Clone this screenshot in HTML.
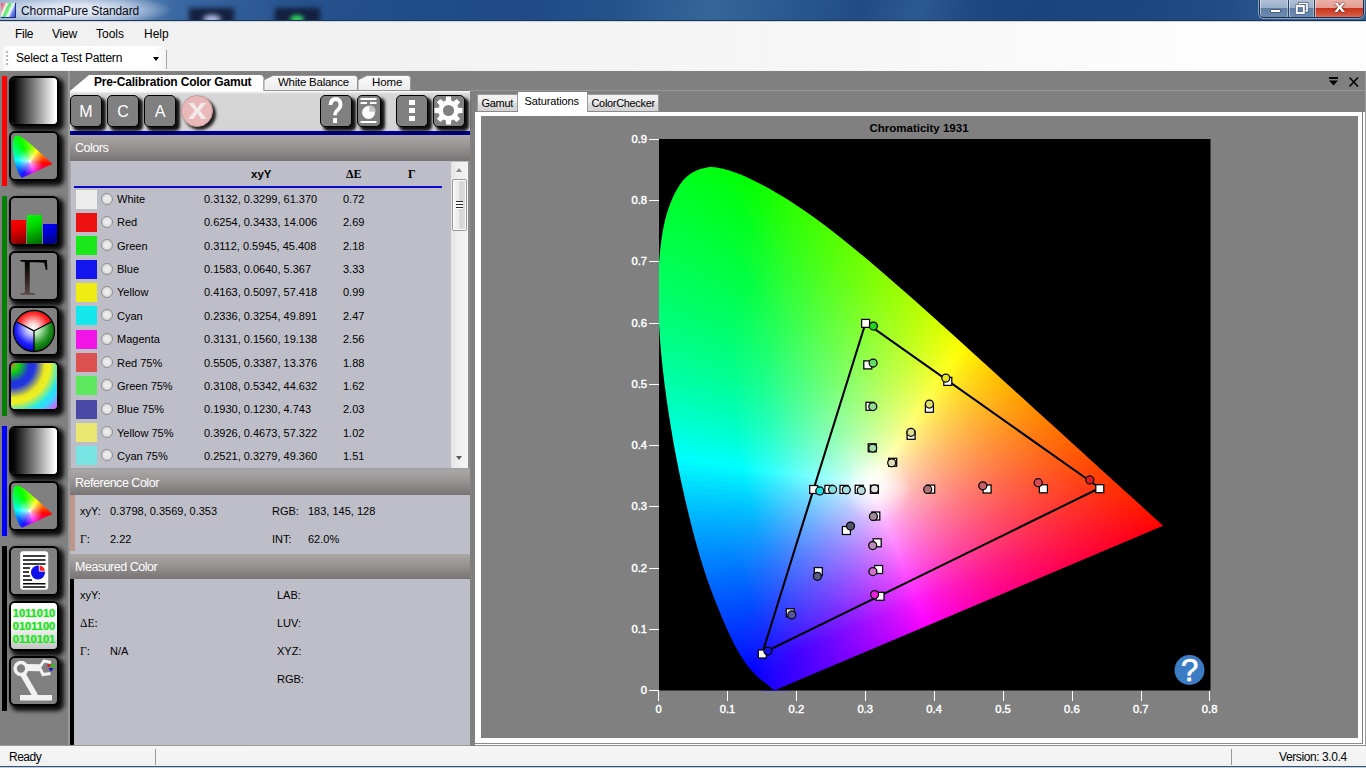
<!DOCTYPE html>
<html lang="en"><head><meta charset="utf-8"><title>ChormaPure Standard</title>
<style>
*{box-sizing:border-box}
html,body{margin:0;padding:0}
body{width:1366px;height:768px;overflow:hidden;position:relative;background:#808080;font-family:"Liberation Sans",sans-serif;font-size:11px;color:#000;line-height:1}
.a{position:absolute}
.t{position:absolute;white-space:nowrap;line-height:14px;height:14px}
.sb{position:absolute;left:9px;width:50px;height:50px;border:2px solid #000;border-radius:6px;background:#808080;box-shadow:3.5px 3.5px 4px 1px rgba(0,0,0,.9);overflow:hidden}
.tb{position:absolute;top:95px;width:32px;height:32px;border:1.5px solid #000;border-radius:5px;background:#808080;box-shadow:3.5px 3.5px 3px rgba(0,0,0,.92);color:#fff;font-size:16px;text-align:center;line-height:31px}
.hd{position:absolute;left:70px;width:400px;height:25px;background:linear-gradient(#aba7a6,#979392 45%,#807c7c 85%,#787474);color:#fff;font-size:12.5px;line-height:25px;padding-left:5px;letter-spacing:-.48px}
.row{position:absolute;left:70px;width:380px;height:23px}
.sw{position:absolute;left:6px;top:0;width:21px;height:19px}
.rd{position:absolute;left:31px;top:3px;width:12px;height:12px;border-radius:50%;border:1px solid #8e8f8f;background:radial-gradient(circle at 50% 50%,#f4f4f4 0,#e4e4e4 45%,#c9c9c9 100%)}
.rt{position:absolute;top:2px;white-space:nowrap;font-size:11px;line-height:14px}
.lb{position:absolute;white-space:nowrap;font-size:11px;line-height:14px}
</style></head><body>

<div class="a" style="left:0;top:0;width:1366px;height:20px;overflow:hidden;background:
radial-gradient(ellipse 100px 17px at 72px 10px,rgba(228,234,245,.95) 30%,rgba(200,214,234,.6) 70%,rgba(160,185,215,0) 100%),
linear-gradient(100deg,#8fa9cb 0,#6d8fbc 120px,#3a68a2 175px,#25528c 300px,#1f4d88 420px,#1e4b86 520px,#24538c 610px,#356799 700px,#2a5a90 770px,#1f4c84 850px,#2b5a90 905px,#1c4780 965px,#1a457c 1020px,#1c477e 1120px,#214d84 1210px,#2c5c90 1270px,#2c5c90 1366px)">
<div class="a" style="left:189px;top:8px;width:45px;height:16px;background:#14203f;filter:blur(2.5px)"></div>
<div class="a" style="left:275px;top:8px;width:45px;height:16px;background:#14203f;filter:blur(2.5px)"></div>
<div class="a" style="left:203px;top:15px;width:18px;height:8px;border-radius:50%;background:#b8c4ee;filter:blur(2.5px)"></div>
<div class="a" style="left:290px;top:15px;width:14px;height:8px;border-radius:50%;background:#30d060;filter:blur(2px)"></div>
</div>
<div class="a" style="left:0;top:20px;width:1366px;height:1px;background:#22344e"></div>
<div class="a" style="left:0;top:21px;width:1366px;height:1px;background:#c9d6e6"></div>
<div class="a" style="left:1px;top:3px;width:15px;height:15px;background:linear-gradient(115deg,#e05060 0,#f0a0a8 22%,#fff 30%,#60e070 42%,#80f090 52%,#fff 64%,#8090f0 76%,#3040d0 100%);border-right:1px solid #203080;border-bottom:1px solid #203080"></div>
<div class="t" style="left:21px;top:4px;font-size:12px;color:#0a0a14;letter-spacing:-.1px">ChormaPure Standard</div>

<div class="a" style="left:1259px;top:-3px;width:105px;height:21px;border:1px solid #1b2d4c;border-radius:0 0 5px 5px;overflow:hidden;box-shadow:0 0 0 1px rgba(255,255,255,.45)">
<div class="a" style="left:0;top:0;width:29px;height:20px;background:linear-gradient(#b4c3d8 0,#9db0ca 48%,#5f7fa6 52%,#6c8cb2 100%);border-right:1px solid #27405f;box-shadow:inset 1px 0 rgba(255,255,255,.5),inset -1px -1px rgba(255,255,255,.35)"></div>
<div class="a" style="left:29px;top:0;width:26px;height:20px;background:linear-gradient(#b4c3d8 0,#9db0ca 48%,#5f7fa6 52%,#6c8cb2 100%);border-right:1px solid #27405f;box-shadow:inset 1px 0 rgba(255,255,255,.5),inset -1px -1px rgba(255,255,255,.35)"></div>
<div class="a" style="left:55px;top:0;width:50px;height:20px;background:linear-gradient(#edb5ac 0,#e39d92 48%,#c7351d 52%,#d4553f 85%,#e08070 100%);box-shadow:inset 1px 0 rgba(255,255,255,.5),inset -1px -1px rgba(255,255,255,.35)"></div>
<div class="a" style="left:10px;top:11px;width:11px;height:4px;background:#fff;border:1px solid #4a5c78;border-radius:1px"></div>
<svg class="a" style="left:35px;top:4px" width="14" height="13" viewBox="0 0 14 13"><path d="M4.500 4V1.500h7.500v7.500h-2.500" fill="none" stroke="#3c5070" stroke-width="2.800"/><path d="M4.500 4V1.500h7.500v7.500h-2.500" fill="none" stroke="#fff" stroke-width="1.700"/><rect x="1.8" y="4" width="7" height="7" fill="none" stroke="#445a7c" stroke-width="3"/><rect x="1.8" y="4" width="7" height="7" fill="none" stroke="#fff" stroke-width="1.9"/></svg>
<div class="t" style="left:75px;top:2px;font-size:17px;font-weight:bold;color:#fff;line-height:14px;text-shadow:0 0 2px #5a2018,0 0 1px #5a2018;transform:scaleX(1.15)">x</div>
</div>

<div class="a" style="left:0;top:22px;width:1366px;height:49px;background:linear-gradient(90deg,#f0f0f0 0,#f2f2f2 400px,#f7f7f7 900px,#fdfdfd 1200px,#fdfdfd 100%)"></div>
<div class="t" style="left:15px;top:27px;font-size:12px;letter-spacing:-.3px">File</div>
<div class="t" style="left:52px;top:27px;font-size:12px;letter-spacing:-.2px">View</div>
<div class="t" style="left:96px;top:27px;font-size:12px">Tools</div>
<div class="t" style="left:144px;top:27px;font-size:12px">Help</div>
<div class="a" style="left:3px;top:46px;width:163px;height:24px;border-radius:3px;background:linear-gradient(90deg,#f8f8f8 0,#fff 10px,#fff 150px,#f4f4f4 100%)"></div>
<div class="a" style="left:6px;top:51px;width:2px;height:14px;background:repeating-linear-gradient(#b8b8b8 0,#b8b8b8 2px,transparent 2px,transparent 4px)"></div>
<div class="t" style="left:16px;top:51px;font-size:12px;letter-spacing:-.21px">Select a Test Pattern</div>
<div class="a" style="left:153px;top:57px;width:0;height:0;border-left:3.5px solid transparent;border-right:3.5px solid transparent;border-top:4px solid #000"></div>
<div class="a" style="left:166px;top:50px;width:1px;height:19px;background:#a8a8a8"></div>

<div class="a" style="left:68px;top:71px;width:2px;height:675px;background:#9a9a9a"></div>
<div class="a" style="left:2px;top:76px;width:5px;height:110px;background:#ff0000"></div>
<div class="a" style="left:2px;top:196px;width:5px;height:220px;background:#008000"></div>
<div class="a" style="left:2px;top:426px;width:5px;height:110px;background:#0000ff"></div>
<div class="a" style="left:2px;top:546px;width:5px;height:165px;background:#000000"></div>
<div class="sb" style="top:76px"><div class="a" style="left:0;top:0;width:46px;height:46px;background:linear-gradient(90deg,#000 0,#0a0a0a 8%,#fff 96%,#fff 100%)"></div></div>
<div class="sb" style="top:131px"><div class="a" style="left:0;top:0;width:46px;height:46px;clip-path:polygon(11.1px 44.7px,9.8px 43.8px,8.3px 42.0px,7.5px 40.5px,6.5px 38.2px,5.3px 34.8px,4.0px 30.0px,2.8px 24.0px,1.9px 17.6px,1.7px 11.7px,2.3px 6.8px,3.6px 3.7px,5.6px 2.6px,7.8px 3.0px,10.0px 4.0px,12.1px 5.3px,14.1px 6.6px,16.1px 8.2px,18.1px 9.8px,20.1px 11.5px,22.1px 13.2px,24.0px 15.0px,26.0px 16.8px,27.9px 18.5px,29.7px 20.2px,31.5px 21.9px,33.2px 23.4px,34.7px 24.8px,36.1px 26.0px,37.2px 27.1px,38.2px 28.0px,39.6px 29.3px,40.5px 30.1px,41.5px 31.0px);background:radial-gradient(circle at 18.7px 28.2px,#fff 0,rgba(255,255,255,.6) 3px,rgba(255,255,255,0) 13px),conic-gradient(from 35deg at 18.7px 28.2px,#ffff00 0deg,#ff8000 30deg,#ff0000 63deg,#ff0080 94deg,#ff00ff 124deg,#8000ff 148deg,#1818ff 172deg,#0080ff 206deg,#00ffff 240deg,#00ff80 270deg,#00ff00 299deg,#80ff00 330deg,#ffff00 360deg)"></div></div>
<div class="sb" style="top:196px"><div class="a" style="left:0px;top:22px;width:15px;height:25px;background:linear-gradient(160deg,#ff0000 0,#e00000 40%,#700000 100%)"></div>
<div class="a" style="left:16px;top:17px;width:15px;height:30px;background:linear-gradient(160deg,#00ff00 0,#00d000 40%,#006000 100%)"></div>
<div class="a" style="left:32px;top:26px;width:15px;height:21px;background:linear-gradient(160deg,#0000ff 0,#0000d0 40%,#000070 100%)"></div></div>
<div class="sb" style="top:251px"><div class="a" style="left:0;top:-1px;width:46px;text-align:center;font-family:'Liberation Serif',serif;font-size:52px;line-height:52px;color:#2a1c1c;background:linear-gradient(#000 20%,#3a2a2a 60%,#6a5555 90%);-webkit-background-clip:text;background-clip:text;-webkit-text-fill-color:transparent">&Gamma;</div></div>
<div class="sb" style="top:306px"><svg class="a" style="left:0;top:0" width="46" height="46" viewBox="0 0 46 46"><defs><radialGradient id="pr" gradientUnits="userSpaceOnUse" cx="22" cy="20" r="22"><stop offset="0" stop-color="#fff"/><stop offset=".25" stop-color="#ffd0d0"/><stop offset=".7" stop-color="#ff2020"/><stop offset="1" stop-color="#e00000"/></radialGradient><radialGradient id="pg" gradientUnits="userSpaceOnUse" cx="22" cy="20" r="24"><stop offset="0" stop-color="#fff"/><stop offset=".25" stop-color="#c8f0c8"/><stop offset=".7" stop-color="#209020"/><stop offset="1" stop-color="#006000"/></radialGradient><radialGradient id="pb" gradientUnits="userSpaceOnUse" cx="22" cy="20" r="24"><stop offset="0" stop-color="#fff"/><stop offset=".25" stop-color="#d0d0ff"/><stop offset=".7" stop-color="#2020ff"/><stop offset="1" stop-color="#0000c0"/></radialGradient></defs>
<path d="M23 23L5.2 13.5A20.5 20.5 0 0 1 40.8 13.5Z" fill="url(#pr)"/><path d="M23 23L40.8 13.5A20.5 20.5 0 0 1 23 43.5Z" fill="url(#pg)"/><path d="M23 23L23 43.5A20.5 20.5 0 0 1 5.2 13.5Z" fill="url(#pb)"/><circle cx="23" cy="23" r="20.5" fill="none" stroke="#000" stroke-width="1.3"/><path d="M23 43.5V23L5.2 13.5M23 23L40.8 13.5" fill="none" stroke="#000" stroke-width="1.3"/></svg></div>
<div class="sb" style="top:361px"><div class="a" style="left:0;top:0;width:46px;height:46px;background:radial-gradient(circle at 2% 4%,#d06020 0,#60c020 5%,#10d010 12%,#2030e0 28%,#2038e0 36%,#e8e820 52%,#f0f020 60%,#20e8f0 76%,#40d0ff 84%,#ff40ff 100%)"></div></div>
<div class="sb" style="top:426px"><div class="a" style="left:0;top:0;width:46px;height:46px;background:linear-gradient(90deg,#000 0,#0a0a0a 8%,#fff 96%,#fff 100%)"></div></div>
<div class="sb" style="top:481px"><div class="a" style="left:0;top:0;width:46px;height:46px;clip-path:polygon(11.1px 44.7px,9.8px 43.8px,8.3px 42.0px,7.5px 40.5px,6.5px 38.2px,5.3px 34.8px,4.0px 30.0px,2.8px 24.0px,1.9px 17.6px,1.7px 11.7px,2.3px 6.8px,3.6px 3.7px,5.6px 2.6px,7.8px 3.0px,10.0px 4.0px,12.1px 5.3px,14.1px 6.6px,16.1px 8.2px,18.1px 9.8px,20.1px 11.5px,22.1px 13.2px,24.0px 15.0px,26.0px 16.8px,27.9px 18.5px,29.7px 20.2px,31.5px 21.9px,33.2px 23.4px,34.7px 24.8px,36.1px 26.0px,37.2px 27.1px,38.2px 28.0px,39.6px 29.3px,40.5px 30.1px,41.5px 31.0px);background:radial-gradient(circle at 18.7px 28.2px,#fff 0,rgba(255,255,255,.6) 3px,rgba(255,255,255,0) 13px),conic-gradient(from 35deg at 18.7px 28.2px,#ffff00 0deg,#ff8000 30deg,#ff0000 63deg,#ff0080 94deg,#ff00ff 124deg,#8000ff 148deg,#1818ff 172deg,#0080ff 206deg,#00ffff 240deg,#00ff80 270deg,#00ff00 299deg,#80ff00 330deg,#ffff00 360deg)"></div></div>
<div class="sb" style="top:546px"><svg class="a" style="left:0;top:0" width="46" height="46" viewBox="0 0 46 46"><rect x="9.2" y="3.2" width="28" height="38.5" rx="3" fill="#fff"/><g stroke="#000" stroke-width="1.7"><path d="M12 8h22.500M12 12h22.500M12 16h22.500M12 20h7M12 24h6M12 28h7M12 32h9M12 35.800h22.500M12 39h22.500" stroke-width="1.500"/></g><circle cx="27" cy="24.500" r="7" fill="#1010e8"/><path d="M27 24.500V18.500A6 6 0 0 1 33 24.500Z" fill="#ff2020" stroke="#fff" stroke-width=".8" transform="translate(1.3,-1.3)"/></svg></div>
<div class="sb" style="top:601px"><div class="a" style="left:0;top:0;width:46px;height:46px;background:linear-gradient(#fff,#f2f2f2 55%,#c4c4c4)"></div><div class="a" style="left:0;top:4px;width:46px;text-align:center;font-size:11.3px;line-height:13px;font-weight:bold;color:#22e022;letter-spacing:-.15px;text-shadow:0 0 1px #6f6">1011010<br>0101100<br>0110101</div></div>
<div class="sb" style="top:656px"><svg class="a" style="left:0;top:0" width="46" height="46" viewBox="0 0 46 46"><g fill="none" stroke="#f2f2f2"><circle cx="10" cy="10.500" r="5.900" stroke-width="3.500"/><path d="M15.500 9.500L29 9.800" stroke-width="7"/><path d="M12 16.500L24.500 38" stroke-width="5.500"/><path d="M40 4.500L33 3L28.500 9.500L32 16.500L39.500 15.500" stroke-width="3" stroke-linejoin="miter"/></g><rect x="9" y="37" width="32" height="5.5" fill="#f2f2f2"/><rect x="36.500" y="6" width="3" height="3" fill="#e02020"/><rect x="40" y="6" width="3.500" height="3.500" fill="#20c020"/><path d="M37.500 10h5l-2.500 3.500z" fill="#1010d0"/></svg></div>
<div class="a" style="left:70px;top:71px;width:400px;height:20px;background:#808080"></div>
<svg class="a" style="left:70px;top:74px" width="345" height="17" viewBox="0 0 345 17"><defs><linearGradient id="tg" x1="0" y1="0" x2="0" y2="1"><stop offset="0" stop-color="#fbfbfb"/><stop offset="1" stop-color="#ececec"/></linearGradient></defs>
<path d="M0 17L19 1H190Q193.500 1 193.500 4.500V17Z" fill="#fff"/>
<path d="M194 16.500V6L203 1.500H284.500Q287.500 1.500 287.500 4.500V16.500Z" fill="url(#tg)" stroke="#8c8c8c" stroke-width=".8"/>
<path d="M288 16.500V6L297 1.500H337.500Q340.500 1.500 340.500 4.500V16.500Z" fill="url(#tg)" stroke="#8c8c8c" stroke-width=".8"/></svg>
<div class="t" style="left:94px;top:75px;font-size:12px;font-weight:bold;letter-spacing:-.17px">Pre-Calibration Color Gamut</div>
<div class="t" style="left:278px;top:75px;font-size:11.5px;letter-spacing:-.25px">White Balance</div>
<div class="t" style="left:372px;top:75px;font-size:11.5px;letter-spacing:-.1px">Home</div>
<div class="a" style="left:70px;top:91px;width:400px;height:40px;background:linear-gradient(#fff 0,#d6d6d6 3px,#d4d4d4 100%)"></div>
<div class="a" style="left:70px;top:130px;width:400px;height:1px;background:#c8c8f0"></div>
<div class="a" style="left:70px;top:131px;width:400px;height:4px;background:#000080"></div>

<div class="tb" style="left:70px">M</div><div class="tb" style="left:107px">C</div><div class="tb" style="left:144px">A</div>
<div class="a" style="left:181px;top:95px;width:32px;height:32px;border-radius:50%;background:#e9b9b9;border:1px solid #c49a9a;box-shadow:3px 3px 3px rgba(0,0,0,.85);color:#f3e9e9;font-weight:bold;font-size:30px;line-height:25px;text-align:center"><span style="display:inline-block;transform:scaleX(1.12)">x</span></div>
<div class="tb" style="left:320px"><div class="a" style="left:0;top:0;width:29px;height:29px;font-size:37px;line-height:29px;font-weight:bold;transform:scaleX(.74)">?</div></div>
<div class="tb" style="left:357px;width:24px"><svg class="a" style="left:0;top:0" width="21" height="29" viewBox="0 0 21 29"><g stroke="#fff" stroke-width="2"><path d="M2.500 3h16M2.500 7h6.500M12 7h6.500M2.500 26h16"/></g><circle cx="10.500" cy="16.500" r="6.500" fill="#fff"/><path d="M11.300 15.700V9.200A6.500 6.500 0 0 1 17.800 15.700Z" fill="#c4c4c4"/></svg></div>
<div class="tb" style="left:396px"><div class="a" style="left:12px;top:4px;width:6px;height:5px;background:#fff"></div><div class="a" style="left:12px;top:12px;width:6px;height:5px;background:#fff"></div><div class="a" style="left:12px;top:20px;width:6px;height:5px;background:#fff"></div></div>
<div class="tb" style="left:433px"><svg class="a" style="left:0;top:0" width="29" height="29" viewBox="0 0 29 29"><path d="M12.10 0.50L16.90 0.50L17.32 4.70L19.44 5.58L22.70 2.91L26.09 6.30L23.42 9.56L24.30 11.68L28.50 12.10L28.50 16.90L24.30 17.32L23.42 19.44L26.09 22.70L22.70 26.09L19.44 23.42L17.32 24.30L16.90 28.50L12.10 28.50L11.68 24.30L9.56 23.42L6.30 26.09L2.91 22.70L5.58 19.44L4.70 17.32L0.50 16.90L0.50 12.10L4.70 11.68L5.58 9.56L2.91 6.30L6.30 2.91L9.56 5.58L11.68 4.70Z" fill="#fff"/><circle cx="14.500" cy="14.500" r="5.600" fill="#808080"/></svg></div>
<div class="hd" style="top:135px;height:26px;line-height:27px">Colors</div>
<div class="a" style="left:70px;top:161px;width:400px;height:308px;background:#bebec8;border-left:1px solid #a6a6ac;border-right:1px solid #8c8c8c"></div>
<div class="a" style="left:74px;top:186px;width:368px;height:2px;background:#0a0acd"></div>
<div class="t" style="left:251px;top:167px;font-family:'Liberation Sans',sans-serif;font-weight:bold;font-size:11.500px">xyY</div>
<div class="t" style="left:346px;top:167px;font-family:'Liberation Serif',serif;font-weight:bold;font-size:12px">&Delta;E</div>
<div class="t" style="left:408px;top:167px;font-family:'Liberation Serif',serif;font-weight:bold;font-size:12px">&Gamma;</div>
<div class="row" style="top:189.7px"><div class="sw" style="background:#ececec"></div><div class="rd"></div><div class="rt" style="left:47px;top:2.00px">White</div><div class="rt" style="left:134px;top:2.00px">0.3132, 0.3299, 61.370</div><div class="rt" style="left:273px;top:2.00px">0.72</div></div>
<div class="row" style="top:213.0px"><div class="sw" style="background:#ee1111"></div><div class="rd"></div><div class="rt" style="left:47px;top:2.08px">Red</div><div class="rt" style="left:134px;top:2.08px">0.6254, 0.3433, 14.006</div><div class="rt" style="left:273px;top:2.08px">2.69</div></div>
<div class="row" style="top:236.4px"><div class="sw" style="background:#1ae81a"></div><div class="rd"></div><div class="rt" style="left:47px;top:2.16px">Green</div><div class="rt" style="left:134px;top:2.16px">0.3112, 0.5945, 45.408</div><div class="rt" style="left:273px;top:2.16px">2.18</div></div>
<div class="row" style="top:259.7px"><div class="sw" style="background:#1414ee"></div><div class="rd"></div><div class="rt" style="left:47px;top:2.24px">Blue</div><div class="rt" style="left:134px;top:2.24px">0.1583, 0.0640, 5.367</div><div class="rt" style="left:273px;top:2.24px">3.33</div></div>
<div class="row" style="top:283.0px"><div class="sw" style="background:#eded14"></div><div class="rd"></div><div class="rt" style="left:47px;top:2.32px">Yellow</div><div class="rt" style="left:134px;top:2.32px">0.4163, 0.5097, 57.418</div><div class="rt" style="left:273px;top:2.32px">0.99</div></div>
<div class="row" style="top:306.3px"><div class="sw" style="background:#14e8ec"></div><div class="rd"></div><div class="rt" style="left:47px;top:2.40px">Cyan</div><div class="rt" style="left:134px;top:2.40px">0.2336, 0.3254, 49.891</div><div class="rt" style="left:273px;top:2.40px">2.47</div></div>
<div class="row" style="top:329.7px"><div class="sw" style="background:#f014e6"></div><div class="rd"></div><div class="rt" style="left:47px;top:2.48px">Magenta</div><div class="rt" style="left:134px;top:2.48px">0.3131, 0.1560, 19.138</div><div class="rt" style="left:273px;top:2.48px">2.56</div></div>
<div class="row" style="top:353.0px"><div class="sw" style="background:#dc5050"></div><div class="rd"></div><div class="rt" style="left:47px;top:2.56px">Red 75%</div><div class="rt" style="left:134px;top:2.56px">0.5505, 0.3387, 13.376</div><div class="rt" style="left:273px;top:2.56px">1.88</div></div>
<div class="row" style="top:376.3px"><div class="sw" style="background:#5ee85e"></div><div class="rd"></div><div class="rt" style="left:47px;top:2.64px">Green 75%</div><div class="rt" style="left:134px;top:2.64px">0.3108, 0.5342, 44.632</div><div class="rt" style="left:273px;top:2.64px">1.62</div></div>
<div class="row" style="top:399.7px"><div class="sw" style="background:#4a4aa6"></div><div class="rd"></div><div class="rt" style="left:47px;top:2.72px">Blue 75%</div><div class="rt" style="left:134px;top:2.72px">0.1930, 0.1230, 4.743</div><div class="rt" style="left:273px;top:2.72px">2.03</div></div>
<div class="row" style="top:423.0px"><div class="sw" style="background:#eae870"></div><div class="rd"></div><div class="rt" style="left:47px;top:2.80px">Yellow 75%</div><div class="rt" style="left:134px;top:2.80px">0.3926, 0.4673, 57.322</div><div class="rt" style="left:273px;top:2.80px">1.02</div></div>
<div class="row" style="top:446.3px"><div class="sw" style="background:#78e4e4"></div><div class="rd"></div><div class="rt" style="left:47px;top:2.88px">Cyan 75%</div><div class="rt" style="left:134px;top:2.88px">0.2521, 0.3279, 49.360</div><div class="rt" style="left:273px;top:2.88px">1.51</div></div>
<div class="a" style="left:451px;top:162px;width:18px;height:306px;border-right:1px solid #8c8c8c;background:linear-gradient(90deg,#e3e3e3 0,#efefef 40%,#f4f4f4 100%)"></div>
<div class="a" style="left:452px;top:179px;width:14.5px;height:52px;border:1px solid #979797;border-radius:2px;background:linear-gradient(90deg,#f4f4f4 0,#ebebeb 45%,#d4d4d4 55%,#dedede 100%);box-shadow:inset 0 0 0 1px #fff"></div>
<div class="a" style="left:456px;top:201px;width:7px;height:8px;background:repeating-linear-gradient(#2a2a2a 0,#2a2a2a 1.4px,#fff 1.4px,#fff 3px)"></div>
<div class="a" style="left:456px;top:168px;width:0;height:0;border-left:3.5px solid transparent;border-right:3.5px solid transparent;border-bottom:4px solid #8a8a8a"></div>
<div class="a" style="left:456px;top:456px;width:0;height:0;border-left:3.5px solid transparent;border-right:3.5px solid transparent;border-top:4px solid #5a5a5a"></div>

<div class="a" style="left:70px;top:468px;width:400px;height:2px;background:#a2a2a6"></div>
<div class="hd" style="top:470px;line-height:27px">Reference Color</div>
<div class="a" style="left:70px;top:495px;width:400px;height:59px;background:#bebec8"></div>
<div class="a" style="left:70px;top:495px;width:5px;height:56px;background:#bf978a"></div>
<div class="hd" style="top:554px;line-height:27px">Measured Color</div>
<div class="a" style="left:70px;top:579px;width:400px;height:167px;background:#bebec8"></div>
<div class="a" style="left:70px;top:579px;width:4px;height:167px;background:#000"></div>
<div class="lb" style="left:80px;top:504px;">xyY:</div>
<div class="lb" style="left:110px;top:504px;">0.3798, 0.3569, 0.353</div>
<div class="lb" style="left:272px;top:504px;">RGB:</div>
<div class="lb" style="left:308px;top:504px;">183, 145, 128</div>
<div class="lb" style="left:80px;top:532px;font-family:'Liberation Serif',serif;font-size:11.5px">&Gamma;:</div>
<div class="lb" style="left:110px;top:532px;">2.22</div>
<div class="lb" style="left:272px;top:532px;">INT:</div>
<div class="lb" style="left:308px;top:532px;">62.0%</div>
<div class="lb" style="left:80px;top:588px;">xyY:</div>
<div class="lb" style="left:277px;top:588px;">LAB:</div>
<div class="lb" style="left:80px;top:616px;font-family:'Liberation Serif',serif;font-size:11.5px">&Delta;E:</div>
<div class="lb" style="left:277px;top:616px;">LUV:</div>
<div class="lb" style="left:80px;top:644px;font-family:'Liberation Serif',serif;font-size:11.5px">&Gamma;:</div>
<div class="lb" style="left:110px;top:644px;">N/A</div>
<div class="lb" style="left:277px;top:644px;">XYZ:</div>
<div class="lb" style="left:277px;top:672px;">RGB:</div>
<div class="a" style="left:470px;top:90px;width:896px;height:1px;background:#969696"></div>
<div class="a" style="left:1365px;top:71px;width:1px;height:675px;background:#9c9c9c"></div>
<svg class="a" style="left:1328px;top:75px" width="34" height="13" viewBox="0 0 34 13"><path d="M1 2h9v2h-9zM1 5.500h9l-4.500 5z" fill="#000"/><path d="M21.500 2.500l8.500 9M30 2.500l-8.500 9" stroke="#000" stroke-width="1.500" fill="none"/></svg>
<div class="a" style="left:475px;top:112px;width:887px;height:631px;background:#fff"></div>
<div class="a" style="left:1363px;top:112px;width:2px;height:633px;background:#fff"></div>
<div class="a" style="left:475px;top:744px;width:890px;height:1px;background:#fff"></div>
<div class="a" style="left:481px;top:116px;width:877px;height:622px;background:#808080"></div>
<div class="a" style="left:477px;top:94px;width:41px;height:18px;border:1px solid #9a9a9a;border-bottom-color:#8a8a8a;background:linear-gradient(#f3f3f3,#ebebeb 50%,#dcdcdc 52%,#d2d2d2)"></div>
<div class="a" style="left:587px;top:94px;width:72px;height:18px;border:1px solid #9a9a9a;border-bottom-color:#8a8a8a;background:linear-gradient(#f3f3f3,#ebebeb 50%,#dcdcdc 52%,#d2d2d2)"></div>
<div class="a" style="left:518px;top:92px;width:69px;height:21px;background:#fff"></div>
<div class="t" style="left:481.5px;top:96px;font-size:11px;letter-spacing:-.3px">Gamut</div>
<div class="t" style="left:524.5px;top:94px;font-size:11px;letter-spacing:-.12px">Saturations</div>
<div class="t" style="left:591.5px;top:96px;font-size:11px;letter-spacing:-.33px">ColorChecker</div>

<svg class="a" style="left:0;top:0" width="1366" height="768" viewBox="0 0 1366 768"><defs><clipPath id="pc"><rect x="659" y="139" width="551.3" height="551.3"/></clipPath>
<linearGradient id="b0" gradientUnits="userSpaceOnUse" x1="871.6" y1="485.6" x2="739.2" y2="662.4"><stop offset="0" stop-color="#ffffff"/><stop offset="0.2" stop-color="#b3abff"/><stop offset="0.4" stop-color="#7e70ff"/><stop offset="0.6" stop-color="#5541ff"/><stop offset="0.8" stop-color="#3418ff"/><stop offset="1" stop-color="#1500ff"/></linearGradient><linearGradient id="b1" gradientUnits="userSpaceOnUse" x1="871.6" y1="485.6" x2="705.7" y2="606.6"><stop offset="0" stop-color="#ffffff"/><stop offset="0.2" stop-color="#aeb2ff"/><stop offset="0.4" stop-color="#747bff"/><stop offset="0.6" stop-color="#4851ff"/><stop offset="0.8" stop-color="#212fff"/><stop offset="1" stop-color="#000eff"/></linearGradient><linearGradient id="b2" gradientUnits="userSpaceOnUse" x1="871.6" y1="485.6" x2="698.7" y2="570.5"><stop offset="0" stop-color="#ffffff"/><stop offset="0.2" stop-color="#abbbff"/><stop offset="0.4" stop-color="#6e8aff"/><stop offset="0.6" stop-color="#3d66ff"/><stop offset="0.8" stop-color="#1048ff"/><stop offset="1" stop-color="#002fff"/></linearGradient><linearGradient id="b3" gradientUnits="userSpaceOnUse" x1="871.6" y1="485.6" x2="697.5" y2="555.4"><stop offset="0" stop-color="#ffffff"/><stop offset="0.2" stop-color="#a9c5ff"/><stop offset="0.4" stop-color="#699bff"/><stop offset="0.6" stop-color="#347cff"/><stop offset="0.8" stop-color="#0063ff"/><stop offset="1" stop-color="#004eff"/></linearGradient><linearGradient id="b4" gradientUnits="userSpaceOnUse" x1="871.6" y1="485.6" x2="696.7" y2="549.3"><stop offset="0" stop-color="#ffffff"/><stop offset="0.2" stop-color="#a8cfff"/><stop offset="0.4" stop-color="#65adff"/><stop offset="0.6" stop-color="#2b93ff"/><stop offset="0.8" stop-color="#007eff"/><stop offset="1" stop-color="#006dff"/></linearGradient><linearGradient id="b5" gradientUnits="userSpaceOnUse" x1="871.6" y1="485.6" x2="694.1" y2="533.7"><stop offset="0" stop-color="#ffffff"/><stop offset="0.2" stop-color="#a7dbff"/><stop offset="0.4" stop-color="#62c0ff"/><stop offset="0.6" stop-color="#23acff"/><stop offset="0.8" stop-color="#009bff"/><stop offset="1" stop-color="#008eff"/></linearGradient><linearGradient id="b6" gradientUnits="userSpaceOnUse" x1="871.6" y1="485.6" x2="693.6" y2="531.8"><stop offset="0" stop-color="#ffffff"/><stop offset="0.2" stop-color="#a8e7ff"/><stop offset="0.4" stop-color="#5fd5ff"/><stop offset="0.6" stop-color="#1cc7ff"/><stop offset="0.8" stop-color="#00bcff"/><stop offset="1" stop-color="#00b3ff"/></linearGradient><linearGradient id="b7" gradientUnits="userSpaceOnUse" x1="871.6" y1="485.6" x2="690.1" y2="522.6"><stop offset="0" stop-color="#ffffff"/><stop offset="0.2" stop-color="#a8f4ff"/><stop offset="0.4" stop-color="#5debff"/><stop offset="0.6" stop-color="#14e5ff"/><stop offset="0.8" stop-color="#00dfff"/><stop offset="1" stop-color="#00daff"/></linearGradient><linearGradient id="b8" gradientUnits="userSpaceOnUse" x1="871.6" y1="485.6" x2="690.1" y2="522.6"><stop offset="0" stop-color="#ffffff"/><stop offset="0.2" stop-color="#a8fffd"/><stop offset="0.4" stop-color="#5bfffb"/><stop offset="0.6" stop-color="#0bfffa"/><stop offset="0.8" stop-color="#00fff9"/><stop offset="1" stop-color="#00fff8"/></linearGradient><linearGradient id="b9" gradientUnits="userSpaceOnUse" x1="871.6" y1="485.6" x2="683.7" y2="512.9"><stop offset="0" stop-color="#ffffff"/><stop offset="0.2" stop-color="#a1fff0"/><stop offset="0.4" stop-color="#52ffe6"/><stop offset="0.6" stop-color="#01ffdd"/><stop offset="0.8" stop-color="#00ffd7"/><stop offset="1" stop-color="#00ffd1"/></linearGradient><linearGradient id="b10" gradientUnits="userSpaceOnUse" x1="871.6" y1="485.6" x2="682.2" y2="510.9"><stop offset="0" stop-color="#ffffff"/><stop offset="0.2" stop-color="#9bffe4"/><stop offset="0.4" stop-color="#4cffd2"/><stop offset="0.6" stop-color="#00ffc4"/><stop offset="0.8" stop-color="#00ffba"/><stop offset="1" stop-color="#00ffb1"/></linearGradient><linearGradient id="b11" gradientUnits="userSpaceOnUse" x1="871.6" y1="485.6" x2="677.2" y2="505.2"><stop offset="0" stop-color="#ffffff"/><stop offset="0.2" stop-color="#95ffd9"/><stop offset="0.4" stop-color="#46ffc0"/><stop offset="0.6" stop-color="#00ffae"/><stop offset="0.8" stop-color="#00ffa0"/><stop offset="1" stop-color="#00ff96"/></linearGradient><linearGradient id="b12" gradientUnits="userSpaceOnUse" x1="871.6" y1="485.6" x2="666.9" y2="493.9"><stop offset="0" stop-color="#ffffff"/><stop offset="0.2" stop-color="#90ffce"/><stop offset="0.4" stop-color="#41ffaf"/><stop offset="0.6" stop-color="#00ff99"/><stop offset="0.8" stop-color="#00ff89"/><stop offset="1" stop-color="#00ff7d"/></linearGradient><linearGradient id="b13" gradientUnits="userSpaceOnUse" x1="871.6" y1="485.6" x2="662.1" y2="488.8"><stop offset="0" stop-color="#ffffff"/><stop offset="0.2" stop-color="#8cffc3"/><stop offset="0.4" stop-color="#3eff9f"/><stop offset="0.6" stop-color="#00ff86"/><stop offset="0.8" stop-color="#00ff74"/><stop offset="1" stop-color="#00ff67"/></linearGradient><linearGradient id="b14" gradientUnits="userSpaceOnUse" x1="871.6" y1="485.6" x2="637.7" y2="458.7"><stop offset="0" stop-color="#ffffff"/><stop offset="0.2" stop-color="#89ffb9"/><stop offset="0.4" stop-color="#3dff90"/><stop offset="0.6" stop-color="#00ff75"/><stop offset="0.8" stop-color="#00ff61"/><stop offset="1" stop-color="#00ff52"/></linearGradient><linearGradient id="b15" gradientUnits="userSpaceOnUse" x1="871.6" y1="485.6" x2="621.7" y2="431.6"><stop offset="0" stop-color="#ffffff"/><stop offset="0.2" stop-color="#87ffaf"/><stop offset="0.4" stop-color="#3dff82"/><stop offset="0.6" stop-color="#00ff64"/><stop offset="0.8" stop-color="#00ff4f"/><stop offset="1" stop-color="#00ff3f"/></linearGradient><linearGradient id="b16" gradientUnits="userSpaceOnUse" x1="871.6" y1="485.6" x2="600.7" y2="365.5"><stop offset="0" stop-color="#ffffff"/><stop offset="0.2" stop-color="#87ffa6"/><stop offset="0.4" stop-color="#40ff75"/><stop offset="0.6" stop-color="#09ff55"/><stop offset="0.8" stop-color="#00ff3e"/><stop offset="1" stop-color="#00ff2c"/></linearGradient><linearGradient id="b17" gradientUnits="userSpaceOnUse" x1="871.6" y1="485.6" x2="696.2" y2="173.4"><stop offset="0" stop-color="#ffffff"/><stop offset="0.2" stop-color="#8aff9f"/><stop offset="0.4" stop-color="#48ff6a"/><stop offset="0.6" stop-color="#18ff47"/><stop offset="0.8" stop-color="#00ff2e"/><stop offset="1" stop-color="#00ff1a"/></linearGradient><linearGradient id="b18" gradientUnits="userSpaceOnUse" x1="871.6" y1="485.6" x2="920.4" y2="204.5"><stop offset="0" stop-color="#ffffff"/><stop offset="0.2" stop-color="#92ff9b"/><stop offset="0.4" stop-color="#54ff64"/><stop offset="0.6" stop-color="#29ff3f"/><stop offset="0.8" stop-color="#03ff24"/><stop offset="1" stop-color="#00ff0c"/></linearGradient><linearGradient id="b19" gradientUnits="userSpaceOnUse" x1="871.6" y1="485.6" x2="966.4" y2="278.3"><stop offset="0" stop-color="#ffffff"/><stop offset="0.2" stop-color="#9bff9b"/><stop offset="0.4" stop-color="#62ff62"/><stop offset="0.6" stop-color="#3bff3c"/><stop offset="0.8" stop-color="#1dff1e"/><stop offset="1" stop-color="#00ff02"/></linearGradient><linearGradient id="b20" gradientUnits="userSpaceOnUse" x1="871.6" y1="485.6" x2="974.6" y2="308.1"><stop offset="0" stop-color="#ffffff"/><stop offset="0.2" stop-color="#a5ff9d"/><stop offset="0.4" stop-color="#70ff63"/><stop offset="0.6" stop-color="#4dff3b"/><stop offset="0.8" stop-color="#33ff1b"/><stop offset="1" stop-color="#1dff00"/></linearGradient><linearGradient id="b21" gradientUnits="userSpaceOnUse" x1="871.6" y1="485.6" x2="978.0" y2="328.7"><stop offset="0" stop-color="#ffffff"/><stop offset="0.2" stop-color="#afff9f"/><stop offset="0.4" stop-color="#7fff64"/><stop offset="0.6" stop-color="#5fff3b"/><stop offset="0.8" stop-color="#47ff19"/><stop offset="1" stop-color="#35ff00"/></linearGradient><linearGradient id="b22" gradientUnits="userSpaceOnUse" x1="871.6" y1="485.6" x2="979.6" y2="342.7"><stop offset="0" stop-color="#ffffff"/><stop offset="0.2" stop-color="#b9ffa2"/><stop offset="0.4" stop-color="#8fff67"/><stop offset="0.6" stop-color="#72ff3c"/><stop offset="0.8" stop-color="#5cff19"/><stop offset="1" stop-color="#4cff00"/></linearGradient><linearGradient id="b23" gradientUnits="userSpaceOnUse" x1="871.6" y1="485.6" x2="980.7" y2="351.8"><stop offset="0" stop-color="#ffffff"/><stop offset="0.2" stop-color="#c4ffa5"/><stop offset="0.4" stop-color="#9fff6a"/><stop offset="0.6" stop-color="#86ff3e"/><stop offset="0.8" stop-color="#73ff19"/><stop offset="1" stop-color="#64ff00"/></linearGradient><linearGradient id="b24" gradientUnits="userSpaceOnUse" x1="871.6" y1="485.6" x2="981.4" y2="356.9"><stop offset="0" stop-color="#ffffff"/><stop offset="0.2" stop-color="#d0ffaa"/><stop offset="0.4" stop-color="#b1ff6f"/><stop offset="0.6" stop-color="#9cff41"/><stop offset="0.8" stop-color="#8bff1b"/><stop offset="1" stop-color="#7fff00"/></linearGradient><linearGradient id="b25" gradientUnits="userSpaceOnUse" x1="871.6" y1="485.6" x2="982.0" y2="359.6"><stop offset="0" stop-color="#ffffff"/><stop offset="0.2" stop-color="#dcffae"/><stop offset="0.4" stop-color="#c5ff74"/><stop offset="0.6" stop-color="#b4ff45"/><stop offset="0.8" stop-color="#a7ff1d"/><stop offset="1" stop-color="#9dff00"/></linearGradient><linearGradient id="b26" gradientUnits="userSpaceOnUse" x1="871.6" y1="485.6" x2="982.7" y2="361.4"><stop offset="0" stop-color="#ffffff"/><stop offset="0.2" stop-color="#e9ffb3"/><stop offset="0.4" stop-color="#daff7a"/><stop offset="0.6" stop-color="#cfff4a"/><stop offset="0.8" stop-color="#c6ff20"/><stop offset="1" stop-color="#bfff00"/></linearGradient><linearGradient id="b27" gradientUnits="userSpaceOnUse" x1="871.6" y1="485.6" x2="982.9" y2="361.8"><stop offset="0" stop-color="#ffffff"/><stop offset="0.2" stop-color="#f7ffb9"/><stop offset="0.4" stop-color="#f2ff80"/><stop offset="0.6" stop-color="#edff50"/><stop offset="0.8" stop-color="#eaff23"/><stop offset="1" stop-color="#e7ff00"/></linearGradient><linearGradient id="b28" gradientUnits="userSpaceOnUse" x1="871.6" y1="485.6" x2="983.3" y2="362.4"><stop offset="0" stop-color="#ffffff"/><stop offset="0.2" stop-color="#fff8ba"/><stop offset="0.4" stop-color="#fff381"/><stop offset="0.6" stop-color="#ffef51"/><stop offset="0.8" stop-color="#ffec25"/><stop offset="1" stop-color="#ffea00"/></linearGradient><linearGradient id="b29" gradientUnits="userSpaceOnUse" x1="871.6" y1="485.6" x2="983.5" y2="362.5"><stop offset="0" stop-color="#ffffff"/><stop offset="0.2" stop-color="#ffebb5"/><stop offset="0.4" stop-color="#ffdc7c"/><stop offset="0.6" stop-color="#ffd14d"/><stop offset="0.8" stop-color="#ffc923"/><stop offset="1" stop-color="#ffc200"/></linearGradient><linearGradient id="b30" gradientUnits="userSpaceOnUse" x1="871.6" y1="485.6" x2="983.5" y2="362.5"><stop offset="0" stop-color="#ffffff"/><stop offset="0.2" stop-color="#ffdeb1"/><stop offset="0.4" stop-color="#ffc878"/><stop offset="0.6" stop-color="#ffb74a"/><stop offset="0.8" stop-color="#ffab22"/><stop offset="1" stop-color="#ffa100"/></linearGradient><linearGradient id="b31" gradientUnits="userSpaceOnUse" x1="871.6" y1="485.6" x2="983.2" y2="362.4"><stop offset="0" stop-color="#ffffff"/><stop offset="0.2" stop-color="#ffd3ad"/><stop offset="0.4" stop-color="#ffb674"/><stop offset="0.6" stop-color="#ffa147"/><stop offset="0.8" stop-color="#ff9121"/><stop offset="1" stop-color="#ff8400"/></linearGradient><linearGradient id="b32" gradientUnits="userSpaceOnUse" x1="871.6" y1="485.6" x2="983.8" y2="362.6"><stop offset="0" stop-color="#ffffff"/><stop offset="0.2" stop-color="#ffc8aa"/><stop offset="0.4" stop-color="#ffa570"/><stop offset="0.6" stop-color="#ff8c45"/><stop offset="0.8" stop-color="#ff7921"/><stop offset="1" stop-color="#ff6b00"/></linearGradient><linearGradient id="b33" gradientUnits="userSpaceOnUse" x1="871.6" y1="485.6" x2="983.4" y2="362.5"><stop offset="0" stop-color="#ffffff"/><stop offset="0.2" stop-color="#ffbea6"/><stop offset="0.4" stop-color="#ff956d"/><stop offset="0.6" stop-color="#ff7942"/><stop offset="0.8" stop-color="#ff6320"/><stop offset="1" stop-color="#ff5300"/></linearGradient><linearGradient id="b34" gradientUnits="userSpaceOnUse" x1="871.6" y1="485.6" x2="983.0" y2="362.5"><stop offset="0" stop-color="#ffffff"/><stop offset="0.2" stop-color="#ffb4a3"/><stop offset="0.4" stop-color="#ff866a"/><stop offset="0.6" stop-color="#ff6640"/><stop offset="0.8" stop-color="#ff4f1f"/><stop offset="1" stop-color="#ff3d00"/></linearGradient><linearGradient id="b35" gradientUnits="userSpaceOnUse" x1="871.6" y1="485.6" x2="983.5" y2="362.5"><stop offset="0" stop-color="#ffffff"/><stop offset="0.2" stop-color="#ffaaa0"/><stop offset="0.4" stop-color="#ff7867"/><stop offset="0.6" stop-color="#ff553e"/><stop offset="0.8" stop-color="#ff3c1f"/><stop offset="1" stop-color="#ff2700"/></linearGradient><linearGradient id="b36" gradientUnits="userSpaceOnUse" x1="871.6" y1="485.6" x2="983.7" y2="362.4"><stop offset="0" stop-color="#ffffff"/><stop offset="0.2" stop-color="#ffa29e"/><stop offset="0.4" stop-color="#ff6c65"/><stop offset="0.6" stop-color="#ff483d"/><stop offset="0.8" stop-color="#ff2c1e"/><stop offset="1" stop-color="#ff1500"/></linearGradient><linearGradient id="b37" gradientUnits="userSpaceOnUse" x1="871.6" y1="485.6" x2="1113.5" y2="603.0"><stop offset="0" stop-color="#ffffff"/><stop offset="0.2" stop-color="#ff9e9f"/><stop offset="0.4" stop-color="#ff6667"/><stop offset="0.6" stop-color="#ff3f40"/><stop offset="0.8" stop-color="#ff2223"/><stop offset="1" stop-color="#ff0608"/></linearGradient><linearGradient id="b38" gradientUnits="userSpaceOnUse" x1="871.6" y1="485.6" x2="930.3" y2="624.4"><stop offset="0" stop-color="#ffffff"/><stop offset="0.2" stop-color="#ffa0a6"/><stop offset="0.4" stop-color="#ff6671"/><stop offset="0.6" stop-color="#ff3e4d"/><stop offset="0.8" stop-color="#ff1e31"/><stop offset="1" stop-color="#ff001b"/></linearGradient><linearGradient id="b39" gradientUnits="userSpaceOnUse" x1="871.6" y1="485.6" x2="930.3" y2="624.4"><stop offset="0" stop-color="#ffffff"/><stop offset="0.2" stop-color="#ffa4b1"/><stop offset="0.4" stop-color="#ff6a81"/><stop offset="0.6" stop-color="#ff405f"/><stop offset="0.8" stop-color="#ff1e46"/><stop offset="1" stop-color="#ff0032"/></linearGradient><linearGradient id="b40" gradientUnits="userSpaceOnUse" x1="871.6" y1="485.6" x2="930.3" y2="624.4"><stop offset="0" stop-color="#ffffff"/><stop offset="0.2" stop-color="#ffa8bd"/><stop offset="0.4" stop-color="#ff6e92"/><stop offset="0.6" stop-color="#ff4373"/><stop offset="0.8" stop-color="#ff1e5c"/><stop offset="1" stop-color="#ff004a"/></linearGradient><linearGradient id="b41" gradientUnits="userSpaceOnUse" x1="871.6" y1="485.6" x2="930.3" y2="624.4"><stop offset="0" stop-color="#ffffff"/><stop offset="0.2" stop-color="#ffadc9"/><stop offset="0.4" stop-color="#ff73a5"/><stop offset="0.6" stop-color="#ff468a"/><stop offset="0.8" stop-color="#ff1f75"/><stop offset="1" stop-color="#ff0065"/></linearGradient><linearGradient id="b42" gradientUnits="userSpaceOnUse" x1="871.6" y1="485.6" x2="930.3" y2="624.4"><stop offset="0" stop-color="#ffffff"/><stop offset="0.2" stop-color="#ffb2d6"/><stop offset="0.4" stop-color="#ff78b9"/><stop offset="0.6" stop-color="#ff49a3"/><stop offset="0.8" stop-color="#ff1f92"/><stop offset="1" stop-color="#ff0084"/></linearGradient><linearGradient id="b43" gradientUnits="userSpaceOnUse" x1="871.6" y1="485.6" x2="930.3" y2="624.4"><stop offset="0" stop-color="#ffffff"/><stop offset="0.2" stop-color="#ffb8e4"/><stop offset="0.4" stop-color="#ff7ed0"/><stop offset="0.6" stop-color="#ff4dc0"/><stop offset="0.8" stop-color="#ff20b4"/><stop offset="1" stop-color="#ff00a9"/></linearGradient><linearGradient id="b44" gradientUnits="userSpaceOnUse" x1="871.6" y1="485.6" x2="930.3" y2="624.4"><stop offset="0" stop-color="#ffffff"/><stop offset="0.2" stop-color="#ffbef4"/><stop offset="0.4" stop-color="#ff85ea"/><stop offset="0.6" stop-color="#ff52e3"/><stop offset="0.8" stop-color="#ff20dc"/><stop offset="1" stop-color="#ff00d7"/></linearGradient><linearGradient id="b45" gradientUnits="userSpaceOnUse" x1="871.6" y1="485.6" x2="930.3" y2="624.4"><stop offset="0" stop-color="#ffffff"/><stop offset="0.2" stop-color="#fac1ff"/><stop offset="0.4" stop-color="#f688ff"/><stop offset="0.6" stop-color="#f354ff"/><stop offset="0.8" stop-color="#f01fff"/><stop offset="1" stop-color="#ee00ff"/></linearGradient><linearGradient id="b46" gradientUnits="userSpaceOnUse" x1="871.6" y1="485.6" x2="930.3" y2="624.4"><stop offset="0" stop-color="#ffffff"/><stop offset="0.2" stop-color="#eabbff"/><stop offset="0.4" stop-color="#da81ff"/><stop offset="0.6" stop-color="#cc4dff"/><stop offset="0.8" stop-color="#c11aff"/><stop offset="1" stop-color="#b800ff"/></linearGradient><linearGradient id="b47" gradientUnits="userSpaceOnUse" x1="871.6" y1="485.6" x2="930.3" y2="624.4"><stop offset="0" stop-color="#ffffff"/><stop offset="0.2" stop-color="#dbb5ff"/><stop offset="0.4" stop-color="#c07aff"/><stop offset="0.6" stop-color="#aa47ff"/><stop offset="0.8" stop-color="#9815ff"/><stop offset="1" stop-color="#8a00ff"/></linearGradient><linearGradient id="b48" gradientUnits="userSpaceOnUse" x1="871.6" y1="485.6" x2="930.3" y2="624.4"><stop offset="0" stop-color="#ffffff"/><stop offset="0.2" stop-color="#cdb0ff"/><stop offset="0.4" stop-color="#a874ff"/><stop offset="0.6" stop-color="#8b41ff"/><stop offset="0.8" stop-color="#7411ff"/><stop offset="1" stop-color="#6100ff"/></linearGradient><linearGradient id="b49" gradientUnits="userSpaceOnUse" x1="871.6" y1="485.6" x2="930.3" y2="624.4"><stop offset="0" stop-color="#ffffff"/><stop offset="0.2" stop-color="#bfacff"/><stop offset="0.4" stop-color="#916eff"/><stop offset="0.6" stop-color="#6f3cff"/><stop offset="0.8" stop-color="#530eff"/><stop offset="1" stop-color="#3b00ff"/></linearGradient><linearGradient id="b50" gradientUnits="userSpaceOnUse" x1="871.6" y1="485.6" x2="930.3" y2="624.4"><stop offset="0" stop-color="#ffffff"/><stop offset="0.2" stop-color="#b7a9ff"/><stop offset="0.4" stop-color="#856bff"/><stop offset="0.6" stop-color="#5f3aff"/><stop offset="0.8" stop-color="#400cff"/><stop offset="1" stop-color="#2500ff"/></linearGradient><linearGradient id="g0" gradientUnits="userSpaceOnUse" x1="871.6" y1="485.6" x2="778.0" y2="690.8"><stop offset="0" stop-color="#ffffff"/><stop offset="0.167" stop-color="#c0b5ff"/><stop offset="0.333" stop-color="#917eff"/><stop offset="0.5" stop-color="#6d52ff"/><stop offset="0.667" stop-color="#4f2cff"/><stop offset="0.833" stop-color="#3605ff"/><stop offset="1" stop-color="#1f00ff"/></linearGradient><linearGradient id="g1" gradientUnits="userSpaceOnUse" x1="871.6" y1="485.6" x2="732.2" y2="656.0"><stop offset="0" stop-color="#ffffff"/><stop offset="0.167" stop-color="#beb6ff"/><stop offset="0.333" stop-color="#8f80ff"/><stop offset="0.5" stop-color="#6a54ff"/><stop offset="0.667" stop-color="#4c2fff"/><stop offset="0.833" stop-color="#320bff"/><stop offset="1" stop-color="#1a00ff"/></linearGradient><linearGradient id="g2" gradientUnits="userSpaceOnUse" x1="871.6" y1="485.6" x2="733.4" y2="657.4"><stop offset="0" stop-color="#ffffff"/><stop offset="0.167" stop-color="#beb7ff"/><stop offset="0.333" stop-color="#8d81ff"/><stop offset="0.5" stop-color="#6857ff"/><stop offset="0.667" stop-color="#4932ff"/><stop offset="0.833" stop-color="#2e10ff"/><stop offset="1" stop-color="#1500ff"/></linearGradient><linearGradient id="g3" gradientUnits="userSpaceOnUse" x1="871.6" y1="485.6" x2="733.4" y2="657.4"><stop offset="0" stop-color="#ffffff"/><stop offset="0.167" stop-color="#bdb8ff"/><stop offset="0.333" stop-color="#8c83ff"/><stop offset="0.5" stop-color="#6659ff"/><stop offset="0.667" stop-color="#4635ff"/><stop offset="0.833" stop-color="#2b14ff"/><stop offset="1" stop-color="#1000ff"/></linearGradient><linearGradient id="g4" gradientUnits="userSpaceOnUse" x1="871.6" y1="485.6" x2="724.7" y2="646.6"><stop offset="0" stop-color="#ffffff"/><stop offset="0.167" stop-color="#bcb8ff"/><stop offset="0.333" stop-color="#8b84ff"/><stop offset="0.5" stop-color="#645bff"/><stop offset="0.667" stop-color="#4438ff"/><stop offset="0.833" stop-color="#2718ff"/><stop offset="1" stop-color="#0c00ff"/></linearGradient><linearGradient id="g5" gradientUnits="userSpaceOnUse" x1="871.6" y1="485.6" x2="724.7" y2="646.6"><stop offset="0" stop-color="#ffffff"/><stop offset="0.167" stop-color="#bbb9ff"/><stop offset="0.333" stop-color="#8a85ff"/><stop offset="0.5" stop-color="#625cff"/><stop offset="0.667" stop-color="#423aff"/><stop offset="0.833" stop-color="#251bff"/><stop offset="1" stop-color="#0800ff"/></linearGradient><linearGradient id="g6" gradientUnits="userSpaceOnUse" x1="871.6" y1="485.6" x2="714.1" y2="629.4"><stop offset="0" stop-color="#ffffff"/><stop offset="0.167" stop-color="#bbbaff"/><stop offset="0.333" stop-color="#8887ff"/><stop offset="0.5" stop-color="#615eff"/><stop offset="0.667" stop-color="#403dff"/><stop offset="0.833" stop-color="#221eff"/><stop offset="1" stop-color="#0300ff"/></linearGradient><linearGradient id="g7" gradientUnits="userSpaceOnUse" x1="871.6" y1="485.6" x2="714.1" y2="629.4"><stop offset="0" stop-color="#ffffff"/><stop offset="0.167" stop-color="#babbff"/><stop offset="0.333" stop-color="#8788ff"/><stop offset="0.5" stop-color="#5f61ff"/><stop offset="0.667" stop-color="#3d40ff"/><stop offset="0.833" stop-color="#1f22ff"/><stop offset="1" stop-color="#0003ff"/></linearGradient><linearGradient id="g8" gradientUnits="userSpaceOnUse" x1="871.6" y1="485.6" x2="703.7" y2="602.8"><stop offset="0" stop-color="#ffffff"/><stop offset="0.167" stop-color="#babcff"/><stop offset="0.333" stop-color="#868aff"/><stop offset="0.5" stop-color="#5d63ff"/><stop offset="0.667" stop-color="#3b43ff"/><stop offset="0.833" stop-color="#1c26ff"/><stop offset="1" stop-color="#000aff"/></linearGradient><linearGradient id="g9" gradientUnits="userSpaceOnUse" x1="871.6" y1="485.6" x2="703.7" y2="602.8"><stop offset="0" stop-color="#ffffff"/><stop offset="0.167" stop-color="#b9bdff"/><stop offset="0.333" stop-color="#858cff"/><stop offset="0.5" stop-color="#5c66ff"/><stop offset="0.667" stop-color="#3946ff"/><stop offset="0.833" stop-color="#192aff"/><stop offset="1" stop-color="#0010ff"/></linearGradient><linearGradient id="g10" gradientUnits="userSpaceOnUse" x1="871.6" y1="485.6" x2="703.7" y2="602.8"><stop offset="0" stop-color="#ffffff"/><stop offset="0.167" stop-color="#b9beff"/><stop offset="0.333" stop-color="#848eff"/><stop offset="0.5" stop-color="#5a69ff"/><stop offset="0.667" stop-color="#374aff"/><stop offset="0.833" stop-color="#162fff"/><stop offset="1" stop-color="#0015ff"/></linearGradient><linearGradient id="g11" gradientUnits="userSpaceOnUse" x1="871.6" y1="485.6" x2="699.3" y2="580.0"><stop offset="0" stop-color="#ffffff"/><stop offset="0.167" stop-color="#b8bfff"/><stop offset="0.333" stop-color="#8390ff"/><stop offset="0.5" stop-color="#596cff"/><stop offset="0.667" stop-color="#354dff"/><stop offset="0.833" stop-color="#1333ff"/><stop offset="1" stop-color="#001bff"/></linearGradient><linearGradient id="g12" gradientUnits="userSpaceOnUse" x1="871.6" y1="485.6" x2="699.3" y2="580.0"><stop offset="0" stop-color="#ffffff"/><stop offset="0.167" stop-color="#b8c1ff"/><stop offset="0.333" stop-color="#8293ff"/><stop offset="0.5" stop-color="#576fff"/><stop offset="0.667" stop-color="#3351ff"/><stop offset="0.833" stop-color="#1038ff"/><stop offset="1" stop-color="#0021ff"/></linearGradient><linearGradient id="g13" gradientUnits="userSpaceOnUse" x1="871.6" y1="485.6" x2="699.3" y2="580.0"><stop offset="0" stop-color="#ffffff"/><stop offset="0.167" stop-color="#b7c2ff"/><stop offset="0.333" stop-color="#8195ff"/><stop offset="0.5" stop-color="#5672ff"/><stop offset="0.667" stop-color="#3155ff"/><stop offset="0.833" stop-color="#0c3cff"/><stop offset="1" stop-color="#0026ff"/></linearGradient><linearGradient id="g14" gradientUnits="userSpaceOnUse" x1="871.6" y1="485.6" x2="699.3" y2="580.0"><stop offset="0" stop-color="#ffffff"/><stop offset="0.167" stop-color="#b7c4ff"/><stop offset="0.333" stop-color="#8198ff"/><stop offset="0.5" stop-color="#5575ff"/><stop offset="0.667" stop-color="#2f59ff"/><stop offset="0.833" stop-color="#0941ff"/><stop offset="1" stop-color="#002cff"/></linearGradient><linearGradient id="g15" gradientUnits="userSpaceOnUse" x1="871.6" y1="485.6" x2="697.7" y2="561.6"><stop offset="0" stop-color="#ffffff"/><stop offset="0.167" stop-color="#b7c5ff"/><stop offset="0.333" stop-color="#809aff"/><stop offset="0.5" stop-color="#5378ff"/><stop offset="0.667" stop-color="#2d5dff"/><stop offset="0.833" stop-color="#0546ff"/><stop offset="1" stop-color="#0031ff"/></linearGradient><linearGradient id="g16" gradientUnits="userSpaceOnUse" x1="871.6" y1="485.6" x2="697.7" y2="561.6"><stop offset="0" stop-color="#ffffff"/><stop offset="0.167" stop-color="#b6c6ff"/><stop offset="0.333" stop-color="#7f9cff"/><stop offset="0.5" stop-color="#527cff"/><stop offset="0.667" stop-color="#2b61ff"/><stop offset="0.833" stop-color="#014aff"/><stop offset="1" stop-color="#0037ff"/></linearGradient><linearGradient id="g17" gradientUnits="userSpaceOnUse" x1="871.6" y1="485.6" x2="697.7" y2="561.6"><stop offset="0" stop-color="#ffffff"/><stop offset="0.167" stop-color="#b6c8ff"/><stop offset="0.333" stop-color="#7f9fff"/><stop offset="0.5" stop-color="#517fff"/><stop offset="0.667" stop-color="#2965ff"/><stop offset="0.833" stop-color="#004fff"/><stop offset="1" stop-color="#003cff"/></linearGradient><linearGradient id="g18" gradientUnits="userSpaceOnUse" x1="871.6" y1="485.6" x2="697.7" y2="561.6"><stop offset="0" stop-color="#ffffff"/><stop offset="0.167" stop-color="#b6c9ff"/><stop offset="0.333" stop-color="#7ea2ff"/><stop offset="0.5" stop-color="#5082ff"/><stop offset="0.667" stop-color="#2769ff"/><stop offset="0.833" stop-color="#0054ff"/><stop offset="1" stop-color="#0041ff"/></linearGradient><linearGradient id="g19" gradientUnits="userSpaceOnUse" x1="871.6" y1="485.6" x2="697.7" y2="561.6"><stop offset="0" stop-color="#ffffff"/><stop offset="0.167" stop-color="#b6cbff"/><stop offset="0.333" stop-color="#7da4ff"/><stop offset="0.5" stop-color="#4f86ff"/><stop offset="0.667" stop-color="#256dff"/><stop offset="0.833" stop-color="#0058ff"/><stop offset="1" stop-color="#0046ff"/></linearGradient><linearGradient id="g20" gradientUnits="userSpaceOnUse" x1="871.6" y1="485.6" x2="697.7" y2="561.6"><stop offset="0" stop-color="#ffffff"/><stop offset="0.167" stop-color="#b6ccff"/><stop offset="0.333" stop-color="#7da7ff"/><stop offset="0.5" stop-color="#4e89ff"/><stop offset="0.667" stop-color="#2471ff"/><stop offset="0.833" stop-color="#005dff"/><stop offset="1" stop-color="#004cff"/></linearGradient><linearGradient id="g21" gradientUnits="userSpaceOnUse" x1="871.6" y1="485.6" x2="696.7" y2="549.3"><stop offset="0" stop-color="#ffffff"/><stop offset="0.167" stop-color="#b5ceff"/><stop offset="0.333" stop-color="#7ca9ff"/><stop offset="0.5" stop-color="#4d8cff"/><stop offset="0.667" stop-color="#2275ff"/><stop offset="0.833" stop-color="#0062ff"/><stop offset="1" stop-color="#0051ff"/></linearGradient><linearGradient id="g22" gradientUnits="userSpaceOnUse" x1="871.6" y1="485.6" x2="696.7" y2="549.3"><stop offset="0" stop-color="#ffffff"/><stop offset="0.167" stop-color="#b5cfff"/><stop offset="0.333" stop-color="#7cacff"/><stop offset="0.5" stop-color="#4c90ff"/><stop offset="0.667" stop-color="#2079ff"/><stop offset="0.833" stop-color="#0066ff"/><stop offset="1" stop-color="#0056ff"/></linearGradient><linearGradient id="g23" gradientUnits="userSpaceOnUse" x1="871.6" y1="485.6" x2="696.7" y2="549.3"><stop offset="0" stop-color="#ffffff"/><stop offset="0.167" stop-color="#b5d1ff"/><stop offset="0.333" stop-color="#7baeff"/><stop offset="0.5" stop-color="#4b93ff"/><stop offset="0.667" stop-color="#1f7dff"/><stop offset="0.833" stop-color="#006bff"/><stop offset="1" stop-color="#005bff"/></linearGradient><linearGradient id="g24" gradientUnits="userSpaceOnUse" x1="871.6" y1="485.6" x2="696.7" y2="549.3"><stop offset="0" stop-color="#ffffff"/><stop offset="0.167" stop-color="#b5d2ff"/><stop offset="0.333" stop-color="#7bb1ff"/><stop offset="0.5" stop-color="#4a96ff"/><stop offset="0.667" stop-color="#1d81ff"/><stop offset="0.833" stop-color="#006fff"/><stop offset="1" stop-color="#0060ff"/></linearGradient><linearGradient id="g25" gradientUnits="userSpaceOnUse" x1="871.6" y1="485.6" x2="696.7" y2="549.3"><stop offset="0" stop-color="#ffffff"/><stop offset="0.167" stop-color="#b5d4ff"/><stop offset="0.333" stop-color="#7ab3ff"/><stop offset="0.5" stop-color="#499aff"/><stop offset="0.667" stop-color="#1b85ff"/><stop offset="0.833" stop-color="#0074ff"/><stop offset="1" stop-color="#0065ff"/></linearGradient><linearGradient id="g26" gradientUnits="userSpaceOnUse" x1="871.6" y1="485.6" x2="696.7" y2="549.3"><stop offset="0" stop-color="#ffffff"/><stop offset="0.167" stop-color="#b5d5ff"/><stop offset="0.333" stop-color="#7ab6ff"/><stop offset="0.5" stop-color="#489dff"/><stop offset="0.667" stop-color="#1989ff"/><stop offset="0.833" stop-color="#0078ff"/><stop offset="1" stop-color="#006aff"/></linearGradient><linearGradient id="g27" gradientUnits="userSpaceOnUse" x1="871.6" y1="485.6" x2="696.7" y2="549.3"><stop offset="0" stop-color="#ffffff"/><stop offset="0.167" stop-color="#b5d7ff"/><stop offset="0.333" stop-color="#79b9ff"/><stop offset="0.5" stop-color="#47a1ff"/><stop offset="0.667" stop-color="#178dff"/><stop offset="0.833" stop-color="#007dff"/><stop offset="1" stop-color="#006fff"/></linearGradient><linearGradient id="g28" gradientUnits="userSpaceOnUse" x1="871.6" y1="485.6" x2="696.7" y2="549.3"><stop offset="0" stop-color="#ffffff"/><stop offset="0.167" stop-color="#b5d8ff"/><stop offset="0.333" stop-color="#79bbff"/><stop offset="0.5" stop-color="#46a4ff"/><stop offset="0.667" stop-color="#1691ff"/><stop offset="0.833" stop-color="#0082ff"/><stop offset="1" stop-color="#0074ff"/></linearGradient><linearGradient id="g29" gradientUnits="userSpaceOnUse" x1="871.6" y1="485.6" x2="696.7" y2="549.3"><stop offset="0" stop-color="#ffffff"/><stop offset="0.167" stop-color="#b4daff"/><stop offset="0.333" stop-color="#79beff"/><stop offset="0.5" stop-color="#45a8ff"/><stop offset="0.667" stop-color="#1495ff"/><stop offset="0.833" stop-color="#0086ff"/><stop offset="1" stop-color="#007aff"/></linearGradient><linearGradient id="g30" gradientUnits="userSpaceOnUse" x1="871.6" y1="485.6" x2="694.1" y2="533.7"><stop offset="0" stop-color="#ffffff"/><stop offset="0.167" stop-color="#b4dcff"/><stop offset="0.333" stop-color="#78c1ff"/><stop offset="0.5" stop-color="#44abff"/><stop offset="0.667" stop-color="#129aff"/><stop offset="0.833" stop-color="#008bff"/><stop offset="1" stop-color="#007fff"/></linearGradient><linearGradient id="g31" gradientUnits="userSpaceOnUse" x1="871.6" y1="485.6" x2="694.1" y2="533.7"><stop offset="0" stop-color="#ffffff"/><stop offset="0.167" stop-color="#b4ddff"/><stop offset="0.333" stop-color="#78c4ff"/><stop offset="0.5" stop-color="#43afff"/><stop offset="0.667" stop-color="#109fff"/><stop offset="0.833" stop-color="#0091ff"/><stop offset="1" stop-color="#0085ff"/></linearGradient><linearGradient id="g32" gradientUnits="userSpaceOnUse" x1="871.6" y1="485.6" x2="694.1" y2="533.7"><stop offset="0" stop-color="#ffffff"/><stop offset="0.167" stop-color="#b5dfff"/><stop offset="0.333" stop-color="#78c7ff"/><stop offset="0.5" stop-color="#43b3ff"/><stop offset="0.667" stop-color="#0ea3ff"/><stop offset="0.833" stop-color="#0096ff"/><stop offset="1" stop-color="#008bff"/></linearGradient><linearGradient id="g33" gradientUnits="userSpaceOnUse" x1="871.6" y1="485.6" x2="694.1" y2="533.7"><stop offset="0" stop-color="#ffffff"/><stop offset="0.167" stop-color="#b5e1ff"/><stop offset="0.333" stop-color="#77caff"/><stop offset="0.5" stop-color="#42b7ff"/><stop offset="0.667" stop-color="#0ca8ff"/><stop offset="0.833" stop-color="#009cff"/><stop offset="1" stop-color="#0091ff"/></linearGradient><linearGradient id="g34" gradientUnits="userSpaceOnUse" x1="871.6" y1="485.6" x2="694.1" y2="533.7"><stop offset="0" stop-color="#ffffff"/><stop offset="0.167" stop-color="#b5e3ff"/><stop offset="0.333" stop-color="#77cdff"/><stop offset="0.5" stop-color="#41bbff"/><stop offset="0.667" stop-color="#0aadff"/><stop offset="0.833" stop-color="#00a1ff"/><stop offset="1" stop-color="#0097ff"/></linearGradient><linearGradient id="g35" gradientUnits="userSpaceOnUse" x1="871.6" y1="485.6" x2="694.1" y2="533.7"><stop offset="0" stop-color="#ffffff"/><stop offset="0.167" stop-color="#b5e4ff"/><stop offset="0.333" stop-color="#77d0ff"/><stop offset="0.5" stop-color="#40bfff"/><stop offset="0.667" stop-color="#08b2ff"/><stop offset="0.833" stop-color="#00a7ff"/><stop offset="1" stop-color="#009dff"/></linearGradient><linearGradient id="g36" gradientUnits="userSpaceOnUse" x1="871.6" y1="485.6" x2="694.1" y2="533.7"><stop offset="0" stop-color="#ffffff"/><stop offset="0.167" stop-color="#b5e6ff"/><stop offset="0.333" stop-color="#77d3ff"/><stop offset="0.5" stop-color="#40c3ff"/><stop offset="0.667" stop-color="#06b7ff"/><stop offset="0.833" stop-color="#00acff"/><stop offset="1" stop-color="#00a3ff"/></linearGradient><linearGradient id="g37" gradientUnits="userSpaceOnUse" x1="871.6" y1="485.6" x2="694.1" y2="533.7"><stop offset="0" stop-color="#ffffff"/><stop offset="0.167" stop-color="#b5e8ff"/><stop offset="0.333" stop-color="#76d6ff"/><stop offset="0.5" stop-color="#3fc8ff"/><stop offset="0.667" stop-color="#03bcff"/><stop offset="0.833" stop-color="#00b2ff"/><stop offset="1" stop-color="#00a9ff"/></linearGradient><linearGradient id="g38" gradientUnits="userSpaceOnUse" x1="871.6" y1="485.6" x2="694.1" y2="533.7"><stop offset="0" stop-color="#ffffff"/><stop offset="0.167" stop-color="#b5eaff"/><stop offset="0.333" stop-color="#76d9ff"/><stop offset="0.5" stop-color="#3eccff"/><stop offset="0.667" stop-color="#00c1ff"/><stop offset="0.833" stop-color="#00b8ff"/><stop offset="1" stop-color="#00b0ff"/></linearGradient><linearGradient id="g39" gradientUnits="userSpaceOnUse" x1="871.6" y1="485.6" x2="694.1" y2="533.7"><stop offset="0" stop-color="#ffffff"/><stop offset="0.167" stop-color="#b5ecff"/><stop offset="0.333" stop-color="#76dcff"/><stop offset="0.5" stop-color="#3dd0ff"/><stop offset="0.667" stop-color="#00c6ff"/><stop offset="0.833" stop-color="#00bdff"/><stop offset="1" stop-color="#00b6ff"/></linearGradient><linearGradient id="g40" gradientUnits="userSpaceOnUse" x1="871.6" y1="485.6" x2="694.1" y2="533.7"><stop offset="0" stop-color="#ffffff"/><stop offset="0.167" stop-color="#b5edff"/><stop offset="0.333" stop-color="#76e0ff"/><stop offset="0.5" stop-color="#3cd4ff"/><stop offset="0.667" stop-color="#00cbff"/><stop offset="0.833" stop-color="#00c3ff"/><stop offset="1" stop-color="#00bdff"/></linearGradient><linearGradient id="g41" gradientUnits="userSpaceOnUse" x1="871.6" y1="485.6" x2="690.1" y2="522.6"><stop offset="0" stop-color="#ffffff"/><stop offset="0.167" stop-color="#b5efff"/><stop offset="0.333" stop-color="#76e3ff"/><stop offset="0.5" stop-color="#3cd9ff"/><stop offset="0.667" stop-color="#00d0ff"/><stop offset="0.833" stop-color="#00c9ff"/><stop offset="1" stop-color="#00c3ff"/></linearGradient><linearGradient id="g42" gradientUnits="userSpaceOnUse" x1="871.6" y1="485.6" x2="690.1" y2="522.6"><stop offset="0" stop-color="#ffffff"/><stop offset="0.167" stop-color="#b5f1ff"/><stop offset="0.333" stop-color="#76e6ff"/><stop offset="0.5" stop-color="#3bddff"/><stop offset="0.667" stop-color="#00d5ff"/><stop offset="0.833" stop-color="#00cfff"/><stop offset="1" stop-color="#00caff"/></linearGradient><linearGradient id="g43" gradientUnits="userSpaceOnUse" x1="871.6" y1="485.6" x2="690.1" y2="522.6"><stop offset="0" stop-color="#ffffff"/><stop offset="0.167" stop-color="#b5f3ff"/><stop offset="0.333" stop-color="#76e9ff"/><stop offset="0.5" stop-color="#3be1ff"/><stop offset="0.667" stop-color="#00dbff"/><stop offset="0.833" stop-color="#00d5ff"/><stop offset="1" stop-color="#00d0ff"/></linearGradient><linearGradient id="g44" gradientUnits="userSpaceOnUse" x1="871.6" y1="485.6" x2="690.1" y2="522.6"><stop offset="0" stop-color="#ffffff"/><stop offset="0.167" stop-color="#b6f5ff"/><stop offset="0.333" stop-color="#75ecff"/><stop offset="0.5" stop-color="#3ae6ff"/><stop offset="0.667" stop-color="#00e0ff"/><stop offset="0.833" stop-color="#00dbff"/><stop offset="1" stop-color="#00d7ff"/></linearGradient><linearGradient id="g45" gradientUnits="userSpaceOnUse" x1="871.6" y1="485.6" x2="690.1" y2="522.6"><stop offset="0" stop-color="#ffffff"/><stop offset="0.167" stop-color="#b6f6ff"/><stop offset="0.333" stop-color="#75f0ff"/><stop offset="0.5" stop-color="#39eaff"/><stop offset="0.667" stop-color="#00e5ff"/><stop offset="0.833" stop-color="#00e1ff"/><stop offset="1" stop-color="#00deff"/></linearGradient><linearGradient id="g46" gradientUnits="userSpaceOnUse" x1="871.6" y1="485.6" x2="690.1" y2="522.6"><stop offset="0" stop-color="#ffffff"/><stop offset="0.167" stop-color="#b6f8ff"/><stop offset="0.333" stop-color="#75f3ff"/><stop offset="0.5" stop-color="#39eeff"/><stop offset="0.667" stop-color="#00ebff"/><stop offset="0.833" stop-color="#00e8ff"/><stop offset="1" stop-color="#00e5ff"/></linearGradient><linearGradient id="g47" gradientUnits="userSpaceOnUse" x1="871.6" y1="485.6" x2="690.1" y2="522.6"><stop offset="0" stop-color="#ffffff"/><stop offset="0.167" stop-color="#b6faff"/><stop offset="0.333" stop-color="#75f6ff"/><stop offset="0.5" stop-color="#38f3ff"/><stop offset="0.667" stop-color="#00f0ff"/><stop offset="0.833" stop-color="#00eeff"/><stop offset="1" stop-color="#00ecff"/></linearGradient><linearGradient id="g48" gradientUnits="userSpaceOnUse" x1="871.6" y1="485.6" x2="690.1" y2="522.6"><stop offset="0" stop-color="#ffffff"/><stop offset="0.167" stop-color="#b6fcff"/><stop offset="0.333" stop-color="#75faff"/><stop offset="0.5" stop-color="#38f8ff"/><stop offset="0.667" stop-color="#00f6ff"/><stop offset="0.833" stop-color="#00f4ff"/><stop offset="1" stop-color="#00f3ff"/></linearGradient><linearGradient id="g49" gradientUnits="userSpaceOnUse" x1="871.6" y1="485.6" x2="690.1" y2="522.6"><stop offset="0" stop-color="#ffffff"/><stop offset="0.167" stop-color="#b6feff"/><stop offset="0.333" stop-color="#75fdff"/><stop offset="0.5" stop-color="#37fcff"/><stop offset="0.667" stop-color="#00fcff"/><stop offset="0.833" stop-color="#00fbff"/><stop offset="1" stop-color="#00fbff"/></linearGradient><linearGradient id="g50" gradientUnits="userSpaceOnUse" x1="871.6" y1="485.6" x2="690.1" y2="522.6"><stop offset="0" stop-color="#ffffff"/><stop offset="0.167" stop-color="#b6fffe"/><stop offset="0.333" stop-color="#75fffe"/><stop offset="0.5" stop-color="#36fffd"/><stop offset="0.667" stop-color="#00fffd"/><stop offset="0.833" stop-color="#00fffc"/><stop offset="1" stop-color="#00fffc"/></linearGradient><linearGradient id="g51" gradientUnits="userSpaceOnUse" x1="871.6" y1="485.6" x2="690.1" y2="522.6"><stop offset="0" stop-color="#ffffff"/><stop offset="0.167" stop-color="#b5fffc"/><stop offset="0.333" stop-color="#73fffa"/><stop offset="0.5" stop-color="#34fff9"/><stop offset="0.667" stop-color="#00fff7"/><stop offset="0.833" stop-color="#00fff6"/><stop offset="1" stop-color="#00fff5"/></linearGradient><linearGradient id="g52" gradientUnits="userSpaceOnUse" x1="871.6" y1="485.6" x2="690.1" y2="522.6"><stop offset="0" stop-color="#ffffff"/><stop offset="0.167" stop-color="#b4fffb"/><stop offset="0.333" stop-color="#72fff7"/><stop offset="0.5" stop-color="#33fff4"/><stop offset="0.667" stop-color="#00fff2"/><stop offset="0.833" stop-color="#00fff0"/><stop offset="1" stop-color="#00ffee"/></linearGradient><linearGradient id="g53" gradientUnits="userSpaceOnUse" x1="871.6" y1="485.6" x2="690.1" y2="522.6"><stop offset="0" stop-color="#ffffff"/><stop offset="0.167" stop-color="#b3fff9"/><stop offset="0.333" stop-color="#70fff4"/><stop offset="0.5" stop-color="#31fff0"/><stop offset="0.667" stop-color="#00ffec"/><stop offset="0.833" stop-color="#00ffea"/><stop offset="1" stop-color="#00ffe7"/></linearGradient><linearGradient id="g54" gradientUnits="userSpaceOnUse" x1="871.6" y1="485.6" x2="690.1" y2="522.6"><stop offset="0" stop-color="#ffffff"/><stop offset="0.167" stop-color="#b2fff7"/><stop offset="0.333" stop-color="#6efff1"/><stop offset="0.5" stop-color="#30ffeb"/><stop offset="0.667" stop-color="#00ffe7"/><stop offset="0.833" stop-color="#00ffe4"/><stop offset="1" stop-color="#00ffe1"/></linearGradient><linearGradient id="g55" gradientUnits="userSpaceOnUse" x1="871.6" y1="485.6" x2="682.2" y2="510.9"><stop offset="0" stop-color="#ffffff"/><stop offset="0.167" stop-color="#b0fff5"/><stop offset="0.333" stop-color="#6dffed"/><stop offset="0.5" stop-color="#2fffe7"/><stop offset="0.667" stop-color="#00ffe2"/><stop offset="0.833" stop-color="#00ffde"/><stop offset="1" stop-color="#00ffda"/></linearGradient><linearGradient id="g56" gradientUnits="userSpaceOnUse" x1="871.6" y1="485.6" x2="682.2" y2="510.9"><stop offset="0" stop-color="#ffffff"/><stop offset="0.167" stop-color="#b0fff3"/><stop offset="0.333" stop-color="#6cffea"/><stop offset="0.5" stop-color="#2dffe3"/><stop offset="0.667" stop-color="#00ffdd"/><stop offset="0.833" stop-color="#00ffd8"/><stop offset="1" stop-color="#00ffd4"/></linearGradient><linearGradient id="g57" gradientUnits="userSpaceOnUse" x1="871.6" y1="485.6" x2="682.2" y2="510.9"><stop offset="0" stop-color="#ffffff"/><stop offset="0.167" stop-color="#affff2"/><stop offset="0.333" stop-color="#6bffe7"/><stop offset="0.5" stop-color="#2cffdf"/><stop offset="0.667" stop-color="#00ffd9"/><stop offset="0.833" stop-color="#00ffd3"/><stop offset="1" stop-color="#00ffcf"/></linearGradient><linearGradient id="g58" gradientUnits="userSpaceOnUse" x1="871.6" y1="485.6" x2="682.2" y2="510.9"><stop offset="0" stop-color="#ffffff"/><stop offset="0.167" stop-color="#aefff0"/><stop offset="0.333" stop-color="#6affe4"/><stop offset="0.5" stop-color="#2bffdb"/><stop offset="0.667" stop-color="#00ffd4"/><stop offset="0.833" stop-color="#00ffce"/><stop offset="1" stop-color="#00ffc9"/></linearGradient><linearGradient id="g59" gradientUnits="userSpaceOnUse" x1="871.6" y1="485.6" x2="682.2" y2="510.9"><stop offset="0" stop-color="#ffffff"/><stop offset="0.167" stop-color="#adffee"/><stop offset="0.333" stop-color="#68ffe1"/><stop offset="0.5" stop-color="#2affd7"/><stop offset="0.667" stop-color="#00ffcf"/><stop offset="0.833" stop-color="#00ffc9"/><stop offset="1" stop-color="#00ffc3"/></linearGradient><linearGradient id="g60" gradientUnits="userSpaceOnUse" x1="871.6" y1="485.6" x2="682.2" y2="510.9"><stop offset="0" stop-color="#ffffff"/><stop offset="0.167" stop-color="#acffec"/><stop offset="0.333" stop-color="#67ffde"/><stop offset="0.5" stop-color="#29ffd4"/><stop offset="0.667" stop-color="#00ffcb"/><stop offset="0.833" stop-color="#00ffc4"/><stop offset="1" stop-color="#00ffbe"/></linearGradient><linearGradient id="g61" gradientUnits="userSpaceOnUse" x1="871.6" y1="485.6" x2="682.2" y2="510.9"><stop offset="0" stop-color="#ffffff"/><stop offset="0.167" stop-color="#abffeb"/><stop offset="0.333" stop-color="#66ffdc"/><stop offset="0.5" stop-color="#28ffd0"/><stop offset="0.667" stop-color="#00ffc7"/><stop offset="0.833" stop-color="#00ffbf"/><stop offset="1" stop-color="#00ffb9"/></linearGradient><linearGradient id="g62" gradientUnits="userSpaceOnUse" x1="871.6" y1="485.6" x2="682.2" y2="510.9"><stop offset="0" stop-color="#ffffff"/><stop offset="0.167" stop-color="#aaffe9"/><stop offset="0.333" stop-color="#65ffd9"/><stop offset="0.5" stop-color="#27ffcc"/><stop offset="0.667" stop-color="#00ffc2"/><stop offset="0.833" stop-color="#00ffba"/><stop offset="1" stop-color="#00ffb4"/></linearGradient><linearGradient id="g63" gradientUnits="userSpaceOnUse" x1="871.6" y1="485.6" x2="682.2" y2="510.9"><stop offset="0" stop-color="#ffffff"/><stop offset="0.167" stop-color="#a9ffe7"/><stop offset="0.333" stop-color="#64ffd6"/><stop offset="0.5" stop-color="#26ffc9"/><stop offset="0.667" stop-color="#00ffbe"/><stop offset="0.833" stop-color="#00ffb6"/><stop offset="1" stop-color="#00ffaf"/></linearGradient><linearGradient id="g64" gradientUnits="userSpaceOnUse" x1="871.6" y1="485.6" x2="682.2" y2="510.9"><stop offset="0" stop-color="#ffffff"/><stop offset="0.167" stop-color="#a8ffe6"/><stop offset="0.333" stop-color="#63ffd3"/><stop offset="0.5" stop-color="#25ffc5"/><stop offset="0.667" stop-color="#00ffba"/><stop offset="0.833" stop-color="#00ffb1"/><stop offset="1" stop-color="#00ffaa"/></linearGradient><linearGradient id="g65" gradientUnits="userSpaceOnUse" x1="871.6" y1="485.6" x2="682.2" y2="510.9"><stop offset="0" stop-color="#ffffff"/><stop offset="0.167" stop-color="#a7ffe4"/><stop offset="0.333" stop-color="#62ffd1"/><stop offset="0.5" stop-color="#25ffc2"/><stop offset="0.667" stop-color="#00ffb6"/><stop offset="0.833" stop-color="#00ffad"/><stop offset="1" stop-color="#00ffa6"/></linearGradient><linearGradient id="g66" gradientUnits="userSpaceOnUse" x1="871.6" y1="485.6" x2="682.2" y2="510.9"><stop offset="0" stop-color="#ffffff"/><stop offset="0.167" stop-color="#a6ffe2"/><stop offset="0.333" stop-color="#61ffce"/><stop offset="0.5" stop-color="#24ffbf"/><stop offset="0.667" stop-color="#00ffb3"/><stop offset="0.833" stop-color="#00ffa9"/><stop offset="1" stop-color="#00ffa1"/></linearGradient><linearGradient id="g67" gradientUnits="userSpaceOnUse" x1="871.6" y1="485.6" x2="682.2" y2="510.9"><stop offset="0" stop-color="#ffffff"/><stop offset="0.167" stop-color="#a5ffe1"/><stop offset="0.333" stop-color="#60ffcb"/><stop offset="0.5" stop-color="#23ffbb"/><stop offset="0.667" stop-color="#00ffaf"/><stop offset="0.833" stop-color="#00ffa5"/><stop offset="1" stop-color="#00ff9d"/></linearGradient><linearGradient id="g68" gradientUnits="userSpaceOnUse" x1="871.6" y1="485.6" x2="682.2" y2="510.9"><stop offset="0" stop-color="#ffffff"/><stop offset="0.167" stop-color="#a5ffdf"/><stop offset="0.333" stop-color="#5fffc9"/><stop offset="0.5" stop-color="#22ffb8"/><stop offset="0.667" stop-color="#00ffab"/><stop offset="0.833" stop-color="#00ffa1"/><stop offset="1" stop-color="#00ff98"/></linearGradient><linearGradient id="g69" gradientUnits="userSpaceOnUse" x1="871.6" y1="485.6" x2="682.2" y2="510.9"><stop offset="0" stop-color="#ffffff"/><stop offset="0.167" stop-color="#a4ffde"/><stop offset="0.333" stop-color="#5effc6"/><stop offset="0.5" stop-color="#21ffb5"/><stop offset="0.667" stop-color="#00ffa8"/><stop offset="0.833" stop-color="#00ff9d"/><stop offset="1" stop-color="#00ff94"/></linearGradient><linearGradient id="g70" gradientUnits="userSpaceOnUse" x1="871.6" y1="485.6" x2="666.9" y2="493.9"><stop offset="0" stop-color="#ffffff"/><stop offset="0.167" stop-color="#a3ffdc"/><stop offset="0.333" stop-color="#5dffc4"/><stop offset="0.5" stop-color="#20ffb2"/><stop offset="0.667" stop-color="#00ffa4"/><stop offset="0.833" stop-color="#00ff99"/><stop offset="1" stop-color="#00ff90"/></linearGradient><linearGradient id="g71" gradientUnits="userSpaceOnUse" x1="871.6" y1="485.6" x2="666.9" y2="493.9"><stop offset="0" stop-color="#ffffff"/><stop offset="0.167" stop-color="#a2ffda"/><stop offset="0.333" stop-color="#5cffc1"/><stop offset="0.5" stop-color="#20ffae"/><stop offset="0.667" stop-color="#00ffa0"/><stop offset="0.833" stop-color="#00ff95"/><stop offset="1" stop-color="#00ff8c"/></linearGradient><linearGradient id="g72" gradientUnits="userSpaceOnUse" x1="871.6" y1="485.6" x2="666.9" y2="493.9"><stop offset="0" stop-color="#ffffff"/><stop offset="0.167" stop-color="#a1ffd9"/><stop offset="0.333" stop-color="#5bffbe"/><stop offset="0.5" stop-color="#1fffab"/><stop offset="0.667" stop-color="#00ff9c"/><stop offset="0.833" stop-color="#00ff91"/><stop offset="1" stop-color="#00ff87"/></linearGradient><linearGradient id="g73" gradientUnits="userSpaceOnUse" x1="871.6" y1="485.6" x2="666.9" y2="493.9"><stop offset="0" stop-color="#ffffff"/><stop offset="0.167" stop-color="#a1ffd7"/><stop offset="0.333" stop-color="#5bffbc"/><stop offset="0.5" stop-color="#1fffa8"/><stop offset="0.667" stop-color="#00ff99"/><stop offset="0.833" stop-color="#00ff8d"/><stop offset="1" stop-color="#00ff83"/></linearGradient><linearGradient id="g74" gradientUnits="userSpaceOnUse" x1="871.6" y1="485.6" x2="666.9" y2="493.9"><stop offset="0" stop-color="#ffffff"/><stop offset="0.167" stop-color="#a0ffd5"/><stop offset="0.333" stop-color="#5affb9"/><stop offset="0.5" stop-color="#1fffa5"/><stop offset="0.667" stop-color="#00ff95"/><stop offset="0.833" stop-color="#00ff89"/><stop offset="1" stop-color="#00ff7f"/></linearGradient><linearGradient id="g75" gradientUnits="userSpaceOnUse" x1="871.6" y1="485.6" x2="666.9" y2="493.9"><stop offset="0" stop-color="#ffffff"/><stop offset="0.167" stop-color="#9fffd4"/><stop offset="0.333" stop-color="#59ffb7"/><stop offset="0.5" stop-color="#1effa2"/><stop offset="0.667" stop-color="#00ff92"/><stop offset="0.833" stop-color="#00ff85"/><stop offset="1" stop-color="#00ff7b"/></linearGradient><linearGradient id="g76" gradientUnits="userSpaceOnUse" x1="871.6" y1="485.6" x2="666.9" y2="493.9"><stop offset="0" stop-color="#ffffff"/><stop offset="0.167" stop-color="#9fffd2"/><stop offset="0.333" stop-color="#59ffb4"/><stop offset="0.5" stop-color="#1eff9f"/><stop offset="0.667" stop-color="#00ff8e"/><stop offset="0.833" stop-color="#00ff82"/><stop offset="1" stop-color="#00ff77"/></linearGradient><linearGradient id="g77" gradientUnits="userSpaceOnUse" x1="871.6" y1="485.6" x2="666.9" y2="493.9"><stop offset="0" stop-color="#ffffff"/><stop offset="0.167" stop-color="#9effd0"/><stop offset="0.333" stop-color="#58ffb2"/><stop offset="0.5" stop-color="#1dff9c"/><stop offset="0.667" stop-color="#00ff8b"/><stop offset="0.833" stop-color="#00ff7e"/><stop offset="1" stop-color="#00ff73"/></linearGradient><linearGradient id="g78" gradientUnits="userSpaceOnUse" x1="871.6" y1="485.6" x2="666.9" y2="493.9"><stop offset="0" stop-color="#ffffff"/><stop offset="0.167" stop-color="#9dffcf"/><stop offset="0.333" stop-color="#57ffaf"/><stop offset="0.5" stop-color="#1dff99"/><stop offset="0.667" stop-color="#00ff88"/><stop offset="0.833" stop-color="#00ff7a"/><stop offset="1" stop-color="#00ff70"/></linearGradient><linearGradient id="g79" gradientUnits="userSpaceOnUse" x1="871.6" y1="485.6" x2="666.9" y2="493.9"><stop offset="0" stop-color="#ffffff"/><stop offset="0.167" stop-color="#9cffcd"/><stop offset="0.333" stop-color="#56ffad"/><stop offset="0.5" stop-color="#1dff96"/><stop offset="0.667" stop-color="#00ff84"/><stop offset="0.833" stop-color="#00ff77"/><stop offset="1" stop-color="#00ff6c"/></linearGradient><linearGradient id="g80" gradientUnits="userSpaceOnUse" x1="871.6" y1="485.6" x2="666.9" y2="493.9"><stop offset="0" stop-color="#ffffff"/><stop offset="0.167" stop-color="#9cffcc"/><stop offset="0.333" stop-color="#56ffaa"/><stop offset="0.5" stop-color="#1cff93"/><stop offset="0.667" stop-color="#00ff81"/><stop offset="0.833" stop-color="#00ff74"/><stop offset="1" stop-color="#00ff69"/></linearGradient><linearGradient id="g81" gradientUnits="userSpaceOnUse" x1="871.6" y1="485.6" x2="666.9" y2="493.9"><stop offset="0" stop-color="#ffffff"/><stop offset="0.167" stop-color="#9bffca"/><stop offset="0.333" stop-color="#55ffa8"/><stop offset="0.5" stop-color="#1cff90"/><stop offset="0.667" stop-color="#00ff7e"/><stop offset="0.833" stop-color="#00ff70"/><stop offset="1" stop-color="#00ff65"/></linearGradient><linearGradient id="g82" gradientUnits="userSpaceOnUse" x1="871.6" y1="485.6" x2="666.9" y2="493.9"><stop offset="0" stop-color="#ffffff"/><stop offset="0.167" stop-color="#9affc9"/><stop offset="0.333" stop-color="#55ffa6"/><stop offset="0.5" stop-color="#1cff8d"/><stop offset="0.667" stop-color="#00ff7b"/><stop offset="0.833" stop-color="#00ff6d"/><stop offset="1" stop-color="#00ff62"/></linearGradient><linearGradient id="g83" gradientUnits="userSpaceOnUse" x1="871.6" y1="485.6" x2="637.7" y2="458.7"><stop offset="0" stop-color="#ffffff"/><stop offset="0.167" stop-color="#9affc7"/><stop offset="0.333" stop-color="#54ffa3"/><stop offset="0.5" stop-color="#1bff8b"/><stop offset="0.667" stop-color="#00ff78"/><stop offset="0.833" stop-color="#00ff6a"/><stop offset="1" stop-color="#00ff5e"/></linearGradient><linearGradient id="g84" gradientUnits="userSpaceOnUse" x1="871.6" y1="485.6" x2="637.7" y2="458.7"><stop offset="0" stop-color="#ffffff"/><stop offset="0.167" stop-color="#99ffc6"/><stop offset="0.333" stop-color="#54ffa1"/><stop offset="0.5" stop-color="#1cff88"/><stop offset="0.667" stop-color="#00ff75"/><stop offset="0.833" stop-color="#00ff66"/><stop offset="1" stop-color="#00ff5b"/></linearGradient><linearGradient id="g85" gradientUnits="userSpaceOnUse" x1="871.6" y1="485.6" x2="637.7" y2="458.7"><stop offset="0" stop-color="#ffffff"/><stop offset="0.167" stop-color="#99ffc4"/><stop offset="0.333" stop-color="#54ff9f"/><stop offset="0.5" stop-color="#1cff85"/><stop offset="0.667" stop-color="#00ff72"/><stop offset="0.833" stop-color="#00ff63"/><stop offset="1" stop-color="#00ff57"/></linearGradient><linearGradient id="g86" gradientUnits="userSpaceOnUse" x1="871.6" y1="485.6" x2="637.7" y2="458.7"><stop offset="0" stop-color="#ffffff"/><stop offset="0.167" stop-color="#99ffc3"/><stop offset="0.333" stop-color="#54ff9d"/><stop offset="0.5" stop-color="#1cff82"/><stop offset="0.667" stop-color="#00ff6f"/><stop offset="0.833" stop-color="#00ff60"/><stop offset="1" stop-color="#00ff54"/></linearGradient><linearGradient id="g87" gradientUnits="userSpaceOnUse" x1="871.6" y1="485.6" x2="637.7" y2="458.7"><stop offset="0" stop-color="#ffffff"/><stop offset="0.167" stop-color="#98ffc1"/><stop offset="0.333" stop-color="#53ff9a"/><stop offset="0.5" stop-color="#1dff80"/><stop offset="0.667" stop-color="#00ff6c"/><stop offset="0.833" stop-color="#00ff5d"/><stop offset="1" stop-color="#00ff51"/></linearGradient><linearGradient id="g88" gradientUnits="userSpaceOnUse" x1="871.6" y1="485.6" x2="637.7" y2="458.7"><stop offset="0" stop-color="#ffffff"/><stop offset="0.167" stop-color="#98ffc0"/><stop offset="0.333" stop-color="#53ff98"/><stop offset="0.5" stop-color="#1dff7d"/><stop offset="0.667" stop-color="#00ff69"/><stop offset="0.833" stop-color="#00ff5a"/><stop offset="1" stop-color="#00ff4d"/></linearGradient><linearGradient id="g89" gradientUnits="userSpaceOnUse" x1="871.6" y1="485.6" x2="637.7" y2="458.7"><stop offset="0" stop-color="#ffffff"/><stop offset="0.167" stop-color="#97ffbe"/><stop offset="0.333" stop-color="#53ff96"/><stop offset="0.5" stop-color="#1dff7b"/><stop offset="0.667" stop-color="#00ff66"/><stop offset="0.833" stop-color="#00ff57"/><stop offset="1" stop-color="#00ff4a"/></linearGradient><linearGradient id="g90" gradientUnits="userSpaceOnUse" x1="871.6" y1="485.6" x2="637.7" y2="458.7"><stop offset="0" stop-color="#ffffff"/><stop offset="0.167" stop-color="#97ffbd"/><stop offset="0.333" stop-color="#53ff94"/><stop offset="0.5" stop-color="#1dff78"/><stop offset="0.667" stop-color="#00ff64"/><stop offset="0.833" stop-color="#00ff54"/><stop offset="1" stop-color="#00ff47"/></linearGradient><linearGradient id="g91" gradientUnits="userSpaceOnUse" x1="871.6" y1="485.6" x2="637.7" y2="458.7"><stop offset="0" stop-color="#ffffff"/><stop offset="0.167" stop-color="#97ffbb"/><stop offset="0.333" stop-color="#53ff92"/><stop offset="0.5" stop-color="#1eff76"/><stop offset="0.667" stop-color="#00ff61"/><stop offset="0.833" stop-color="#00ff51"/><stop offset="1" stop-color="#00ff44"/></linearGradient><linearGradient id="g92" gradientUnits="userSpaceOnUse" x1="871.6" y1="485.6" x2="637.7" y2="458.7"><stop offset="0" stop-color="#ffffff"/><stop offset="0.167" stop-color="#96ffba"/><stop offset="0.333" stop-color="#52ff90"/><stop offset="0.5" stop-color="#1eff73"/><stop offset="0.667" stop-color="#00ff5e"/><stop offset="0.833" stop-color="#00ff4e"/><stop offset="1" stop-color="#00ff41"/></linearGradient><linearGradient id="g93" gradientUnits="userSpaceOnUse" x1="871.6" y1="485.6" x2="637.7" y2="458.7"><stop offset="0" stop-color="#ffffff"/><stop offset="0.167" stop-color="#96ffb8"/><stop offset="0.333" stop-color="#52ff8e"/><stop offset="0.5" stop-color="#1eff71"/><stop offset="0.667" stop-color="#00ff5b"/><stop offset="0.833" stop-color="#00ff4b"/><stop offset="1" stop-color="#00ff3d"/></linearGradient><linearGradient id="g94" gradientUnits="userSpaceOnUse" x1="871.6" y1="485.6" x2="600.7" y2="365.5"><stop offset="0" stop-color="#ffffff"/><stop offset="0.167" stop-color="#96ffb7"/><stop offset="0.333" stop-color="#52ff8c"/><stop offset="0.5" stop-color="#1fff6e"/><stop offset="0.667" stop-color="#00ff59"/><stop offset="0.833" stop-color="#00ff48"/><stop offset="1" stop-color="#00ff3a"/></linearGradient><linearGradient id="g95" gradientUnits="userSpaceOnUse" x1="871.6" y1="485.6" x2="600.7" y2="365.5"><stop offset="0" stop-color="#ffffff"/><stop offset="0.167" stop-color="#96ffb6"/><stop offset="0.333" stop-color="#53ff8a"/><stop offset="0.5" stop-color="#20ff6c"/><stop offset="0.667" stop-color="#00ff56"/><stop offset="0.833" stop-color="#00ff45"/><stop offset="1" stop-color="#00ff37"/></linearGradient><linearGradient id="g96" gradientUnits="userSpaceOnUse" x1="871.6" y1="485.6" x2="600.7" y2="365.5"><stop offset="0" stop-color="#ffffff"/><stop offset="0.167" stop-color="#96ffb4"/><stop offset="0.333" stop-color="#54ff88"/><stop offset="0.5" stop-color="#21ff69"/><stop offset="0.667" stop-color="#00ff53"/><stop offset="0.833" stop-color="#00ff42"/><stop offset="1" stop-color="#00ff34"/></linearGradient><linearGradient id="g97" gradientUnits="userSpaceOnUse" x1="871.6" y1="485.6" x2="600.7" y2="365.5"><stop offset="0" stop-color="#ffffff"/><stop offset="0.167" stop-color="#96ffb3"/><stop offset="0.333" stop-color="#54ff86"/><stop offset="0.5" stop-color="#23ff67"/><stop offset="0.667" stop-color="#00ff50"/><stop offset="0.833" stop-color="#00ff3f"/><stop offset="1" stop-color="#00ff31"/></linearGradient><linearGradient id="g98" gradientUnits="userSpaceOnUse" x1="871.6" y1="485.6" x2="600.7" y2="365.5"><stop offset="0" stop-color="#ffffff"/><stop offset="0.167" stop-color="#96ffb2"/><stop offset="0.333" stop-color="#55ff84"/><stop offset="0.5" stop-color="#24ff65"/><stop offset="0.667" stop-color="#00ff4e"/><stop offset="0.833" stop-color="#00ff3c"/><stop offset="1" stop-color="#00ff2d"/></linearGradient><linearGradient id="g99" gradientUnits="userSpaceOnUse" x1="871.6" y1="485.6" x2="600.7" y2="365.5"><stop offset="0" stop-color="#ffffff"/><stop offset="0.167" stop-color="#96ffb0"/><stop offset="0.333" stop-color="#55ff82"/><stop offset="0.5" stop-color="#25ff62"/><stop offset="0.667" stop-color="#00ff4b"/><stop offset="0.833" stop-color="#00ff39"/><stop offset="1" stop-color="#00ff2a"/></linearGradient><linearGradient id="g100" gradientUnits="userSpaceOnUse" x1="871.6" y1="485.6" x2="600.7" y2="365.5"><stop offset="0" stop-color="#ffffff"/><stop offset="0.167" stop-color="#96ffaf"/><stop offset="0.333" stop-color="#56ff80"/><stop offset="0.5" stop-color="#26ff60"/><stop offset="0.667" stop-color="#00ff48"/><stop offset="0.833" stop-color="#00ff36"/><stop offset="1" stop-color="#00ff27"/></linearGradient><linearGradient id="g101" gradientUnits="userSpaceOnUse" x1="871.6" y1="485.6" x2="600.7" y2="365.5"><stop offset="0" stop-color="#ffffff"/><stop offset="0.167" stop-color="#96ffae"/><stop offset="0.333" stop-color="#56ff7e"/><stop offset="0.5" stop-color="#27ff5d"/><stop offset="0.667" stop-color="#00ff46"/><stop offset="0.833" stop-color="#00ff33"/><stop offset="1" stop-color="#00ff24"/></linearGradient><linearGradient id="g102" gradientUnits="userSpaceOnUse" x1="871.6" y1="485.6" x2="696.2" y2="173.4"><stop offset="0" stop-color="#ffffff"/><stop offset="0.167" stop-color="#97ffac"/><stop offset="0.333" stop-color="#57ff7c"/><stop offset="0.5" stop-color="#29ff5b"/><stop offset="0.667" stop-color="#00ff43"/><stop offset="0.833" stop-color="#00ff30"/><stop offset="1" stop-color="#00ff21"/></linearGradient><linearGradient id="g103" gradientUnits="userSpaceOnUse" x1="871.6" y1="485.6" x2="696.2" y2="173.4"><stop offset="0" stop-color="#ffffff"/><stop offset="0.167" stop-color="#98ffac"/><stop offset="0.333" stop-color="#59ff7b"/><stop offset="0.5" stop-color="#2bff5a"/><stop offset="0.667" stop-color="#00ff41"/><stop offset="0.833" stop-color="#00ff2e"/><stop offset="1" stop-color="#00ff1e"/></linearGradient><linearGradient id="g104" gradientUnits="userSpaceOnUse" x1="871.6" y1="485.6" x2="696.2" y2="173.4"><stop offset="0" stop-color="#ffffff"/><stop offset="0.167" stop-color="#99ffab"/><stop offset="0.333" stop-color="#5aff79"/><stop offset="0.5" stop-color="#2dff58"/><stop offset="0.667" stop-color="#06ff3f"/><stop offset="0.833" stop-color="#00ff2c"/><stop offset="1" stop-color="#00ff1b"/></linearGradient><linearGradient id="g105" gradientUnits="userSpaceOnUse" x1="871.6" y1="485.6" x2="696.2" y2="173.4"><stop offset="0" stop-color="#ffffff"/><stop offset="0.167" stop-color="#99ffaa"/><stop offset="0.333" stop-color="#5cff78"/><stop offset="0.5" stop-color="#30ff56"/><stop offset="0.667" stop-color="#0aff3d"/><stop offset="0.833" stop-color="#00ff29"/><stop offset="1" stop-color="#00ff18"/></linearGradient><linearGradient id="g106" gradientUnits="userSpaceOnUse" x1="871.6" y1="485.6" x2="696.2" y2="173.4"><stop offset="0" stop-color="#ffffff"/><stop offset="0.167" stop-color="#9affa9"/><stop offset="0.333" stop-color="#5dff77"/><stop offset="0.5" stop-color="#32ff55"/><stop offset="0.667" stop-color="#0dff3b"/><stop offset="0.833" stop-color="#00ff27"/><stop offset="1" stop-color="#00ff16"/></linearGradient><linearGradient id="g107" gradientUnits="userSpaceOnUse" x1="871.6" y1="485.6" x2="696.2" y2="173.4"><stop offset="0" stop-color="#ffffff"/><stop offset="0.167" stop-color="#9bffa8"/><stop offset="0.333" stop-color="#5fff75"/><stop offset="0.5" stop-color="#34ff53"/><stop offset="0.667" stop-color="#11ff39"/><stop offset="0.833" stop-color="#00ff24"/><stop offset="1" stop-color="#00ff13"/></linearGradient><linearGradient id="g108" gradientUnits="userSpaceOnUse" x1="871.6" y1="485.6" x2="920.4" y2="204.5"><stop offset="0" stop-color="#ffffff"/><stop offset="0.167" stop-color="#9cffa8"/><stop offset="0.333" stop-color="#61ff75"/><stop offset="0.5" stop-color="#36ff52"/><stop offset="0.667" stop-color="#14ff38"/><stop offset="0.833" stop-color="#00ff23"/><stop offset="1" stop-color="#00ff10"/></linearGradient><linearGradient id="g109" gradientUnits="userSpaceOnUse" x1="871.6" y1="485.6" x2="920.4" y2="204.5"><stop offset="0" stop-color="#ffffff"/><stop offset="0.167" stop-color="#9dffa8"/><stop offset="0.333" stop-color="#63ff74"/><stop offset="0.5" stop-color="#39ff51"/><stop offset="0.667" stop-color="#18ff37"/><stop offset="0.833" stop-color="#00ff21"/><stop offset="1" stop-color="#00ff0f"/></linearGradient><linearGradient id="g110" gradientUnits="userSpaceOnUse" x1="871.6" y1="485.6" x2="920.4" y2="204.5"><stop offset="0" stop-color="#ffffff"/><stop offset="0.167" stop-color="#9fffa8"/><stop offset="0.333" stop-color="#65ff74"/><stop offset="0.5" stop-color="#3cff50"/><stop offset="0.667" stop-color="#1bff36"/><stop offset="0.833" stop-color="#00ff20"/><stop offset="1" stop-color="#00ff0d"/></linearGradient><linearGradient id="g111" gradientUnits="userSpaceOnUse" x1="871.6" y1="485.6" x2="920.4" y2="204.5"><stop offset="0" stop-color="#ffffff"/><stop offset="0.167" stop-color="#a0ffa7"/><stop offset="0.333" stop-color="#67ff73"/><stop offset="0.5" stop-color="#3eff50"/><stop offset="0.667" stop-color="#1eff35"/><stop offset="0.833" stop-color="#00ff1f"/><stop offset="1" stop-color="#00ff0b"/></linearGradient><linearGradient id="g112" gradientUnits="userSpaceOnUse" x1="871.6" y1="485.6" x2="920.4" y2="204.5"><stop offset="0" stop-color="#ffffff"/><stop offset="0.167" stop-color="#a1ffa7"/><stop offset="0.333" stop-color="#69ff73"/><stop offset="0.5" stop-color="#41ff4f"/><stop offset="0.667" stop-color="#22ff34"/><stop offset="0.833" stop-color="#04ff1e"/><stop offset="1" stop-color="#00ff09"/></linearGradient><linearGradient id="g113" gradientUnits="userSpaceOnUse" x1="871.6" y1="485.6" x2="920.4" y2="204.5"><stop offset="0" stop-color="#ffffff"/><stop offset="0.167" stop-color="#a2ffa7"/><stop offset="0.333" stop-color="#6bff73"/><stop offset="0.5" stop-color="#43ff4e"/><stop offset="0.667" stop-color="#25ff33"/><stop offset="0.833" stop-color="#0aff1c"/><stop offset="1" stop-color="#00ff07"/></linearGradient><linearGradient id="g114" gradientUnits="userSpaceOnUse" x1="871.6" y1="485.6" x2="966.4" y2="278.3"><stop offset="0" stop-color="#ffffff"/><stop offset="0.167" stop-color="#a4ffa7"/><stop offset="0.333" stop-color="#6dff73"/><stop offset="0.5" stop-color="#46ff4e"/><stop offset="0.667" stop-color="#28ff32"/><stop offset="0.833" stop-color="#0eff1b"/><stop offset="1" stop-color="#00ff06"/></linearGradient><linearGradient id="g115" gradientUnits="userSpaceOnUse" x1="871.6" y1="485.6" x2="966.4" y2="278.3"><stop offset="0" stop-color="#ffffff"/><stop offset="0.167" stop-color="#a5ffa7"/><stop offset="0.333" stop-color="#6fff73"/><stop offset="0.5" stop-color="#49ff4e"/><stop offset="0.667" stop-color="#2cff32"/><stop offset="0.833" stop-color="#12ff1b"/><stop offset="1" stop-color="#00ff04"/></linearGradient><linearGradient id="g116" gradientUnits="userSpaceOnUse" x1="871.6" y1="485.6" x2="966.4" y2="278.3"><stop offset="0" stop-color="#ffffff"/><stop offset="0.167" stop-color="#a7ffa8"/><stop offset="0.333" stop-color="#71ff73"/><stop offset="0.5" stop-color="#4cff4e"/><stop offset="0.667" stop-color="#2fff32"/><stop offset="0.833" stop-color="#17ff1a"/><stop offset="1" stop-color="#00ff03"/></linearGradient><linearGradient id="g117" gradientUnits="userSpaceOnUse" x1="871.6" y1="485.6" x2="966.4" y2="278.3"><stop offset="0" stop-color="#ffffff"/><stop offset="0.167" stop-color="#a8ffa8"/><stop offset="0.333" stop-color="#73ff73"/><stop offset="0.5" stop-color="#4eff4e"/><stop offset="0.667" stop-color="#32ff31"/><stop offset="0.833" stop-color="#1bff19"/><stop offset="1" stop-color="#03ff01"/></linearGradient><linearGradient id="g118" gradientUnits="userSpaceOnUse" x1="871.6" y1="485.6" x2="966.4" y2="278.3"><stop offset="0" stop-color="#ffffff"/><stop offset="0.167" stop-color="#aaffa8"/><stop offset="0.333" stop-color="#75ff73"/><stop offset="0.5" stop-color="#51ff4d"/><stop offset="0.667" stop-color="#35ff31"/><stop offset="0.833" stop-color="#1fff19"/><stop offset="1" stop-color="#09ff00"/></linearGradient><linearGradient id="g119" gradientUnits="userSpaceOnUse" x1="871.6" y1="485.6" x2="966.4" y2="278.3"><stop offset="0" stop-color="#ffffff"/><stop offset="0.167" stop-color="#abffa8"/><stop offset="0.333" stop-color="#78ff73"/><stop offset="0.5" stop-color="#54ff4d"/><stop offset="0.667" stop-color="#39ff30"/><stop offset="0.833" stop-color="#22ff18"/><stop offset="1" stop-color="#0eff00"/></linearGradient><linearGradient id="g120" gradientUnits="userSpaceOnUse" x1="871.6" y1="485.6" x2="974.6" y2="308.1"><stop offset="0" stop-color="#ffffff"/><stop offset="0.167" stop-color="#adffa8"/><stop offset="0.333" stop-color="#7aff73"/><stop offset="0.5" stop-color="#57ff4d"/><stop offset="0.667" stop-color="#3cff30"/><stop offset="0.833" stop-color="#26ff17"/><stop offset="1" stop-color="#13ff00"/></linearGradient><linearGradient id="g121" gradientUnits="userSpaceOnUse" x1="871.6" y1="485.6" x2="974.6" y2="308.1"><stop offset="0" stop-color="#ffffff"/><stop offset="0.167" stop-color="#aeffa9"/><stop offset="0.333" stop-color="#7cff73"/><stop offset="0.5" stop-color="#59ff4d"/><stop offset="0.667" stop-color="#3fff30"/><stop offset="0.833" stop-color="#2aff17"/><stop offset="1" stop-color="#17ff00"/></linearGradient><linearGradient id="g122" gradientUnits="userSpaceOnUse" x1="871.6" y1="485.6" x2="974.6" y2="308.1"><stop offset="0" stop-color="#ffffff"/><stop offset="0.167" stop-color="#afffa9"/><stop offset="0.333" stop-color="#7eff73"/><stop offset="0.5" stop-color="#5cff4d"/><stop offset="0.667" stop-color="#42ff30"/><stop offset="0.833" stop-color="#2dff16"/><stop offset="1" stop-color="#1bff00"/></linearGradient><linearGradient id="g123" gradientUnits="userSpaceOnUse" x1="871.6" y1="485.6" x2="974.6" y2="308.1"><stop offset="0" stop-color="#ffffff"/><stop offset="0.167" stop-color="#b1ffa9"/><stop offset="0.333" stop-color="#80ff74"/><stop offset="0.5" stop-color="#5fff4d"/><stop offset="0.667" stop-color="#45ff2f"/><stop offset="0.833" stop-color="#31ff16"/><stop offset="1" stop-color="#1fff00"/></linearGradient><linearGradient id="g124" gradientUnits="userSpaceOnUse" x1="871.6" y1="485.6" x2="974.6" y2="308.1"><stop offset="0" stop-color="#ffffff"/><stop offset="0.167" stop-color="#b2ffaa"/><stop offset="0.333" stop-color="#83ff74"/><stop offset="0.5" stop-color="#61ff4d"/><stop offset="0.667" stop-color="#48ff2f"/><stop offset="0.833" stop-color="#34ff15"/><stop offset="1" stop-color="#23ff00"/></linearGradient><linearGradient id="g125" gradientUnits="userSpaceOnUse" x1="871.6" y1="485.6" x2="974.6" y2="308.1"><stop offset="0" stop-color="#ffffff"/><stop offset="0.167" stop-color="#b4ffaa"/><stop offset="0.333" stop-color="#85ff74"/><stop offset="0.5" stop-color="#64ff4d"/><stop offset="0.667" stop-color="#4cff2f"/><stop offset="0.833" stop-color="#38ff15"/><stop offset="1" stop-color="#27ff00"/></linearGradient><linearGradient id="g126" gradientUnits="userSpaceOnUse" x1="871.6" y1="485.6" x2="978.0" y2="328.7"><stop offset="0" stop-color="#ffffff"/><stop offset="0.167" stop-color="#b5ffaa"/><stop offset="0.333" stop-color="#87ff74"/><stop offset="0.5" stop-color="#67ff4e"/><stop offset="0.667" stop-color="#4fff2f"/><stop offset="0.833" stop-color="#3bff15"/><stop offset="1" stop-color="#2bff00"/></linearGradient><linearGradient id="g127" gradientUnits="userSpaceOnUse" x1="871.6" y1="485.6" x2="978.0" y2="328.7"><stop offset="0" stop-color="#ffffff"/><stop offset="0.167" stop-color="#b7ffab"/><stop offset="0.333" stop-color="#89ff75"/><stop offset="0.5" stop-color="#6aff4e"/><stop offset="0.667" stop-color="#52ff2f"/><stop offset="0.833" stop-color="#3fff14"/><stop offset="1" stop-color="#2fff00"/></linearGradient><linearGradient id="g128" gradientUnits="userSpaceOnUse" x1="871.6" y1="485.6" x2="978.0" y2="328.7"><stop offset="0" stop-color="#ffffff"/><stop offset="0.167" stop-color="#b8ffab"/><stop offset="0.333" stop-color="#8cff75"/><stop offset="0.5" stop-color="#6cff4e"/><stop offset="0.667" stop-color="#55ff2f"/><stop offset="0.833" stop-color="#42ff14"/><stop offset="1" stop-color="#33ff00"/></linearGradient><linearGradient id="g129" gradientUnits="userSpaceOnUse" x1="871.6" y1="485.6" x2="978.0" y2="328.7"><stop offset="0" stop-color="#ffffff"/><stop offset="0.167" stop-color="#baffac"/><stop offset="0.333" stop-color="#8eff76"/><stop offset="0.5" stop-color="#6fff4e"/><stop offset="0.667" stop-color="#58ff2f"/><stop offset="0.833" stop-color="#46ff14"/><stop offset="1" stop-color="#37ff00"/></linearGradient><linearGradient id="g130" gradientUnits="userSpaceOnUse" x1="871.6" y1="485.6" x2="978.0" y2="328.7"><stop offset="0" stop-color="#ffffff"/><stop offset="0.167" stop-color="#bbffac"/><stop offset="0.333" stop-color="#90ff76"/><stop offset="0.5" stop-color="#72ff4f"/><stop offset="0.667" stop-color="#5bff2f"/><stop offset="0.833" stop-color="#49ff14"/><stop offset="1" stop-color="#3bff00"/></linearGradient><linearGradient id="g131" gradientUnits="userSpaceOnUse" x1="871.6" y1="485.6" x2="978.0" y2="328.7"><stop offset="0" stop-color="#ffffff"/><stop offset="0.167" stop-color="#bdffac"/><stop offset="0.333" stop-color="#93ff76"/><stop offset="0.5" stop-color="#75ff4f"/><stop offset="0.667" stop-color="#5eff2f"/><stop offset="0.833" stop-color="#4dff13"/><stop offset="1" stop-color="#3eff00"/></linearGradient><linearGradient id="g132" gradientUnits="userSpaceOnUse" x1="871.6" y1="485.6" x2="979.6" y2="342.7"><stop offset="0" stop-color="#ffffff"/><stop offset="0.167" stop-color="#beffad"/><stop offset="0.333" stop-color="#95ff77"/><stop offset="0.5" stop-color="#78ff4f"/><stop offset="0.667" stop-color="#62ff2f"/><stop offset="0.833" stop-color="#50ff13"/><stop offset="1" stop-color="#42ff00"/></linearGradient><linearGradient id="g133" gradientUnits="userSpaceOnUse" x1="871.6" y1="485.6" x2="979.6" y2="342.7"><stop offset="0" stop-color="#ffffff"/><stop offset="0.167" stop-color="#c0ffad"/><stop offset="0.333" stop-color="#97ff77"/><stop offset="0.5" stop-color="#7bff50"/><stop offset="0.667" stop-color="#65ff30"/><stop offset="0.833" stop-color="#54ff13"/><stop offset="1" stop-color="#46ff00"/></linearGradient><linearGradient id="g134" gradientUnits="userSpaceOnUse" x1="871.6" y1="485.6" x2="979.6" y2="342.7"><stop offset="0" stop-color="#ffffff"/><stop offset="0.167" stop-color="#c2ffae"/><stop offset="0.333" stop-color="#9aff78"/><stop offset="0.5" stop-color="#7eff50"/><stop offset="0.667" stop-color="#68ff30"/><stop offset="0.833" stop-color="#58ff13"/><stop offset="1" stop-color="#4aff00"/></linearGradient><linearGradient id="g135" gradientUnits="userSpaceOnUse" x1="871.6" y1="485.6" x2="979.6" y2="342.7"><stop offset="0" stop-color="#ffffff"/><stop offset="0.167" stop-color="#c3ffaf"/><stop offset="0.333" stop-color="#9cff78"/><stop offset="0.5" stop-color="#81ff50"/><stop offset="0.667" stop-color="#6cff30"/><stop offset="0.833" stop-color="#5bff13"/><stop offset="1" stop-color="#4eff00"/></linearGradient><linearGradient id="g136" gradientUnits="userSpaceOnUse" x1="871.6" y1="485.6" x2="979.6" y2="342.7"><stop offset="0" stop-color="#ffffff"/><stop offset="0.167" stop-color="#c5ffaf"/><stop offset="0.333" stop-color="#9fff79"/><stop offset="0.5" stop-color="#84ff51"/><stop offset="0.667" stop-color="#6fff30"/><stop offset="0.833" stop-color="#5fff13"/><stop offset="1" stop-color="#52ff00"/></linearGradient><linearGradient id="g137" gradientUnits="userSpaceOnUse" x1="871.6" y1="485.6" x2="979.6" y2="342.7"><stop offset="0" stop-color="#ffffff"/><stop offset="0.167" stop-color="#c6ffb0"/><stop offset="0.333" stop-color="#a1ff7a"/><stop offset="0.5" stop-color="#87ff51"/><stop offset="0.667" stop-color="#73ff30"/><stop offset="0.833" stop-color="#63ff13"/><stop offset="1" stop-color="#56ff00"/></linearGradient><linearGradient id="g138" gradientUnits="userSpaceOnUse" x1="871.6" y1="485.6" x2="980.7" y2="351.8"><stop offset="0" stop-color="#ffffff"/><stop offset="0.167" stop-color="#c8ffb0"/><stop offset="0.333" stop-color="#a4ff7a"/><stop offset="0.5" stop-color="#8aff52"/><stop offset="0.667" stop-color="#76ff31"/><stop offset="0.833" stop-color="#66ff13"/><stop offset="1" stop-color="#5aff00"/></linearGradient><linearGradient id="g139" gradientUnits="userSpaceOnUse" x1="871.6" y1="485.6" x2="980.7" y2="351.8"><stop offset="0" stop-color="#ffffff"/><stop offset="0.167" stop-color="#caffb1"/><stop offset="0.333" stop-color="#a6ff7b"/><stop offset="0.5" stop-color="#8dff52"/><stop offset="0.667" stop-color="#7aff31"/><stop offset="0.833" stop-color="#6aff13"/><stop offset="1" stop-color="#5eff00"/></linearGradient><linearGradient id="g140" gradientUnits="userSpaceOnUse" x1="871.6" y1="485.6" x2="980.7" y2="351.8"><stop offset="0" stop-color="#ffffff"/><stop offset="0.167" stop-color="#cbffb1"/><stop offset="0.333" stop-color="#a9ff7c"/><stop offset="0.5" stop-color="#90ff53"/><stop offset="0.667" stop-color="#7dff31"/><stop offset="0.833" stop-color="#6eff13"/><stop offset="1" stop-color="#62ff00"/></linearGradient><linearGradient id="g141" gradientUnits="userSpaceOnUse" x1="871.6" y1="485.6" x2="980.7" y2="351.8"><stop offset="0" stop-color="#ffffff"/><stop offset="0.167" stop-color="#cdffb2"/><stop offset="0.333" stop-color="#abff7c"/><stop offset="0.5" stop-color="#93ff53"/><stop offset="0.667" stop-color="#81ff32"/><stop offset="0.833" stop-color="#72ff13"/><stop offset="1" stop-color="#66ff00"/></linearGradient><linearGradient id="g142" gradientUnits="userSpaceOnUse" x1="871.6" y1="485.6" x2="980.7" y2="351.8"><stop offset="0" stop-color="#ffffff"/><stop offset="0.167" stop-color="#cfffb3"/><stop offset="0.333" stop-color="#aeff7d"/><stop offset="0.5" stop-color="#96ff54"/><stop offset="0.667" stop-color="#84ff32"/><stop offset="0.833" stop-color="#76ff13"/><stop offset="1" stop-color="#6bff00"/></linearGradient><linearGradient id="g143" gradientUnits="userSpaceOnUse" x1="871.6" y1="485.6" x2="980.7" y2="351.8"><stop offset="0" stop-color="#ffffff"/><stop offset="0.167" stop-color="#d0ffb3"/><stop offset="0.333" stop-color="#b1ff7e"/><stop offset="0.5" stop-color="#9aff54"/><stop offset="0.667" stop-color="#88ff32"/><stop offset="0.833" stop-color="#7aff14"/><stop offset="1" stop-color="#6fff00"/></linearGradient><linearGradient id="g144" gradientUnits="userSpaceOnUse" x1="871.6" y1="485.6" x2="981.4" y2="356.9"><stop offset="0" stop-color="#ffffff"/><stop offset="0.167" stop-color="#d2ffb4"/><stop offset="0.333" stop-color="#b3ff7e"/><stop offset="0.5" stop-color="#9dff55"/><stop offset="0.667" stop-color="#8cff33"/><stop offset="0.833" stop-color="#7eff14"/><stop offset="1" stop-color="#73ff00"/></linearGradient><linearGradient id="g145" gradientUnits="userSpaceOnUse" x1="871.6" y1="485.6" x2="981.4" y2="356.9"><stop offset="0" stop-color="#ffffff"/><stop offset="0.167" stop-color="#d4ffb4"/><stop offset="0.333" stop-color="#b6ff7f"/><stop offset="0.5" stop-color="#a0ff56"/><stop offset="0.667" stop-color="#90ff33"/><stop offset="0.833" stop-color="#83ff14"/><stop offset="1" stop-color="#78ff00"/></linearGradient><linearGradient id="g146" gradientUnits="userSpaceOnUse" x1="871.6" y1="485.6" x2="981.4" y2="356.9"><stop offset="0" stop-color="#ffffff"/><stop offset="0.167" stop-color="#d5ffb5"/><stop offset="0.333" stop-color="#b9ff80"/><stop offset="0.5" stop-color="#a4ff56"/><stop offset="0.667" stop-color="#94ff34"/><stop offset="0.833" stop-color="#87ff14"/><stop offset="1" stop-color="#7cff00"/></linearGradient><linearGradient id="g147" gradientUnits="userSpaceOnUse" x1="871.6" y1="485.6" x2="981.4" y2="356.9"><stop offset="0" stop-color="#ffffff"/><stop offset="0.167" stop-color="#d7ffb6"/><stop offset="0.333" stop-color="#bcff81"/><stop offset="0.5" stop-color="#a7ff57"/><stop offset="0.667" stop-color="#98ff34"/><stop offset="0.833" stop-color="#8bff14"/><stop offset="1" stop-color="#81ff00"/></linearGradient><linearGradient id="g148" gradientUnits="userSpaceOnUse" x1="871.6" y1="485.6" x2="981.4" y2="356.9"><stop offset="0" stop-color="#ffffff"/><stop offset="0.167" stop-color="#d9ffb7"/><stop offset="0.333" stop-color="#beff82"/><stop offset="0.5" stop-color="#abff58"/><stop offset="0.667" stop-color="#9cff35"/><stop offset="0.833" stop-color="#90ff15"/><stop offset="1" stop-color="#86ff00"/></linearGradient><linearGradient id="g149" gradientUnits="userSpaceOnUse" x1="871.6" y1="485.6" x2="981.4" y2="356.9"><stop offset="0" stop-color="#ffffff"/><stop offset="0.167" stop-color="#dbffb7"/><stop offset="0.333" stop-color="#c1ff82"/><stop offset="0.5" stop-color="#aeff59"/><stop offset="0.667" stop-color="#a0ff35"/><stop offset="0.833" stop-color="#94ff15"/><stop offset="1" stop-color="#8bff00"/></linearGradient><linearGradient id="g150" gradientUnits="userSpaceOnUse" x1="871.6" y1="485.6" x2="982.0" y2="359.6"><stop offset="0" stop-color="#ffffff"/><stop offset="0.167" stop-color="#ddffb8"/><stop offset="0.333" stop-color="#c4ff83"/><stop offset="0.5" stop-color="#b2ff59"/><stop offset="0.667" stop-color="#a4ff36"/><stop offset="0.833" stop-color="#99ff15"/><stop offset="1" stop-color="#90ff00"/></linearGradient><linearGradient id="g151" gradientUnits="userSpaceOnUse" x1="871.6" y1="485.6" x2="982.0" y2="359.6"><stop offset="0" stop-color="#ffffff"/><stop offset="0.167" stop-color="#deffb9"/><stop offset="0.333" stop-color="#c7ff84"/><stop offset="0.5" stop-color="#b6ff5a"/><stop offset="0.667" stop-color="#a8ff37"/><stop offset="0.833" stop-color="#9eff16"/><stop offset="1" stop-color="#95ff00"/></linearGradient><linearGradient id="g152" gradientUnits="userSpaceOnUse" x1="871.6" y1="485.6" x2="982.0" y2="359.6"><stop offset="0" stop-color="#ffffff"/><stop offset="0.167" stop-color="#e0ffb9"/><stop offset="0.333" stop-color="#caff85"/><stop offset="0.5" stop-color="#baff5b"/><stop offset="0.667" stop-color="#adff37"/><stop offset="0.833" stop-color="#a2ff16"/><stop offset="1" stop-color="#9aff00"/></linearGradient><linearGradient id="g153" gradientUnits="userSpaceOnUse" x1="871.6" y1="485.6" x2="982.0" y2="359.6"><stop offset="0" stop-color="#ffffff"/><stop offset="0.167" stop-color="#e2ffba"/><stop offset="0.333" stop-color="#cdff86"/><stop offset="0.5" stop-color="#beff5c"/><stop offset="0.667" stop-color="#b1ff38"/><stop offset="0.833" stop-color="#a7ff16"/><stop offset="1" stop-color="#9fff00"/></linearGradient><linearGradient id="g154" gradientUnits="userSpaceOnUse" x1="871.6" y1="485.6" x2="982.0" y2="359.6"><stop offset="0" stop-color="#ffffff"/><stop offset="0.167" stop-color="#e4ffbb"/><stop offset="0.333" stop-color="#d0ff87"/><stop offset="0.5" stop-color="#c2ff5d"/><stop offset="0.667" stop-color="#b6ff39"/><stop offset="0.833" stop-color="#acff17"/><stop offset="1" stop-color="#a5ff00"/></linearGradient><linearGradient id="g155" gradientUnits="userSpaceOnUse" x1="871.6" y1="485.6" x2="982.0" y2="359.6"><stop offset="0" stop-color="#ffffff"/><stop offset="0.167" stop-color="#e6ffbc"/><stop offset="0.333" stop-color="#d3ff88"/><stop offset="0.5" stop-color="#c6ff5e"/><stop offset="0.667" stop-color="#bbff39"/><stop offset="0.833" stop-color="#b2ff17"/><stop offset="1" stop-color="#aaff00"/></linearGradient><linearGradient id="g156" gradientUnits="userSpaceOnUse" x1="871.6" y1="485.6" x2="982.7" y2="361.4"><stop offset="0" stop-color="#ffffff"/><stop offset="0.167" stop-color="#e8ffbc"/><stop offset="0.333" stop-color="#d7ff89"/><stop offset="0.5" stop-color="#caff5f"/><stop offset="0.667" stop-color="#bfff3a"/><stop offset="0.833" stop-color="#b7ff17"/><stop offset="1" stop-color="#b0ff00"/></linearGradient><linearGradient id="g157" gradientUnits="userSpaceOnUse" x1="871.6" y1="485.6" x2="982.7" y2="361.4"><stop offset="0" stop-color="#ffffff"/><stop offset="0.167" stop-color="#eaffbd"/><stop offset="0.333" stop-color="#daff8a"/><stop offset="0.5" stop-color="#ceff5f"/><stop offset="0.667" stop-color="#c4ff3b"/><stop offset="0.833" stop-color="#bcff18"/><stop offset="1" stop-color="#b6ff00"/></linearGradient><linearGradient id="g158" gradientUnits="userSpaceOnUse" x1="871.6" y1="485.6" x2="982.7" y2="361.4"><stop offset="0" stop-color="#ffffff"/><stop offset="0.167" stop-color="#ecffbe"/><stop offset="0.333" stop-color="#ddff8b"/><stop offset="0.5" stop-color="#d2ff60"/><stop offset="0.667" stop-color="#c9ff3b"/><stop offset="0.833" stop-color="#c2ff18"/><stop offset="1" stop-color="#bcff00"/></linearGradient><linearGradient id="g159" gradientUnits="userSpaceOnUse" x1="871.6" y1="485.6" x2="982.7" y2="361.4"><stop offset="0" stop-color="#ffffff"/><stop offset="0.167" stop-color="#edffbf"/><stop offset="0.333" stop-color="#e0ff8c"/><stop offset="0.5" stop-color="#d6ff61"/><stop offset="0.667" stop-color="#ceff3c"/><stop offset="0.833" stop-color="#c7ff19"/><stop offset="1" stop-color="#c2ff00"/></linearGradient><linearGradient id="g160" gradientUnits="userSpaceOnUse" x1="871.6" y1="485.6" x2="982.7" y2="361.4"><stop offset="0" stop-color="#ffffff"/><stop offset="0.167" stop-color="#efffc0"/><stop offset="0.333" stop-color="#e4ff8d"/><stop offset="0.5" stop-color="#dbff62"/><stop offset="0.667" stop-color="#d3ff3d"/><stop offset="0.833" stop-color="#cdff19"/><stop offset="1" stop-color="#c8ff00"/></linearGradient><linearGradient id="g161" gradientUnits="userSpaceOnUse" x1="871.6" y1="485.6" x2="982.7" y2="361.4"><stop offset="0" stop-color="#ffffff"/><stop offset="0.167" stop-color="#f1ffc0"/><stop offset="0.333" stop-color="#e7ff8e"/><stop offset="0.5" stop-color="#dfff63"/><stop offset="0.667" stop-color="#d9ff3e"/><stop offset="0.833" stop-color="#d3ff1a"/><stop offset="1" stop-color="#cfff00"/></linearGradient><linearGradient id="g162" gradientUnits="userSpaceOnUse" x1="871.6" y1="485.6" x2="982.9" y2="361.8"><stop offset="0" stop-color="#ffffff"/><stop offset="0.167" stop-color="#f3ffc1"/><stop offset="0.333" stop-color="#ebff8f"/><stop offset="0.5" stop-color="#e4ff64"/><stop offset="0.667" stop-color="#deff3f"/><stop offset="0.833" stop-color="#d9ff1a"/><stop offset="1" stop-color="#d5ff00"/></linearGradient><linearGradient id="g163" gradientUnits="userSpaceOnUse" x1="871.6" y1="485.6" x2="982.9" y2="361.8"><stop offset="0" stop-color="#ffffff"/><stop offset="0.167" stop-color="#f5ffc2"/><stop offset="0.333" stop-color="#eeff90"/><stop offset="0.5" stop-color="#e8ff66"/><stop offset="0.667" stop-color="#e3ff40"/><stop offset="0.833" stop-color="#e0ff1b"/><stop offset="1" stop-color="#dcff00"/></linearGradient><linearGradient id="g164" gradientUnits="userSpaceOnUse" x1="871.6" y1="485.6" x2="982.9" y2="361.8"><stop offset="0" stop-color="#ffffff"/><stop offset="0.167" stop-color="#f7ffc3"/><stop offset="0.333" stop-color="#f2ff91"/><stop offset="0.5" stop-color="#edff67"/><stop offset="0.667" stop-color="#e9ff40"/><stop offset="0.833" stop-color="#e6ff1b"/><stop offset="1" stop-color="#e3ff00"/></linearGradient><linearGradient id="g165" gradientUnits="userSpaceOnUse" x1="871.6" y1="485.6" x2="982.9" y2="361.8"><stop offset="0" stop-color="#ffffff"/><stop offset="0.167" stop-color="#f9ffc4"/><stop offset="0.333" stop-color="#f5ff92"/><stop offset="0.5" stop-color="#f2ff68"/><stop offset="0.667" stop-color="#efff41"/><stop offset="0.833" stop-color="#ecff1c"/><stop offset="1" stop-color="#eaff00"/></linearGradient><linearGradient id="g166" gradientUnits="userSpaceOnUse" x1="871.6" y1="485.6" x2="982.9" y2="361.8"><stop offset="0" stop-color="#ffffff"/><stop offset="0.167" stop-color="#fcffc5"/><stop offset="0.333" stop-color="#f9ff94"/><stop offset="0.5" stop-color="#f7ff69"/><stop offset="0.667" stop-color="#f5ff42"/><stop offset="0.833" stop-color="#f3ff1d"/><stop offset="1" stop-color="#f2ff00"/></linearGradient><linearGradient id="g167" gradientUnits="userSpaceOnUse" x1="871.6" y1="485.6" x2="982.9" y2="361.8"><stop offset="0" stop-color="#ffffff"/><stop offset="0.167" stop-color="#feffc5"/><stop offset="0.333" stop-color="#fcff95"/><stop offset="0.5" stop-color="#fcff6a"/><stop offset="0.667" stop-color="#fbff43"/><stop offset="0.833" stop-color="#faff1d"/><stop offset="1" stop-color="#faff00"/></linearGradient><linearGradient id="g168" gradientUnits="userSpaceOnUse" x1="871.6" y1="485.6" x2="983.3" y2="362.4"><stop offset="0" stop-color="#ffffff"/><stop offset="0.167" stop-color="#fffec6"/><stop offset="0.333" stop-color="#fffe95"/><stop offset="0.5" stop-color="#fffd6b"/><stop offset="0.667" stop-color="#fffd44"/><stop offset="0.833" stop-color="#fffd1e"/><stop offset="1" stop-color="#fffc00"/></linearGradient><linearGradient id="g169" gradientUnits="userSpaceOnUse" x1="871.6" y1="485.6" x2="983.3" y2="362.4"><stop offset="0" stop-color="#ffffff"/><stop offset="0.167" stop-color="#fffcc5"/><stop offset="0.333" stop-color="#fffa94"/><stop offset="0.5" stop-color="#fff86a"/><stop offset="0.667" stop-color="#fff743"/><stop offset="0.833" stop-color="#fff61d"/><stop offset="1" stop-color="#fff500"/></linearGradient><linearGradient id="g170" gradientUnits="userSpaceOnUse" x1="871.6" y1="485.6" x2="983.3" y2="362.4"><stop offset="0" stop-color="#ffffff"/><stop offset="0.167" stop-color="#fffac4"/><stop offset="0.333" stop-color="#fff793"/><stop offset="0.5" stop-color="#fff469"/><stop offset="0.667" stop-color="#fff143"/><stop offset="0.833" stop-color="#ffef1d"/><stop offset="1" stop-color="#ffed00"/></linearGradient><linearGradient id="g171" gradientUnits="userSpaceOnUse" x1="871.6" y1="485.6" x2="983.3" y2="362.4"><stop offset="0" stop-color="#ffffff"/><stop offset="0.167" stop-color="#fff8c4"/><stop offset="0.333" stop-color="#fff392"/><stop offset="0.5" stop-color="#ffef68"/><stop offset="0.667" stop-color="#ffeb42"/><stop offset="0.833" stop-color="#ffe81d"/><stop offset="1" stop-color="#ffe600"/></linearGradient><linearGradient id="g172" gradientUnits="userSpaceOnUse" x1="871.6" y1="485.6" x2="983.3" y2="362.4"><stop offset="0" stop-color="#ffffff"/><stop offset="0.167" stop-color="#fff6c3"/><stop offset="0.333" stop-color="#fff092"/><stop offset="0.5" stop-color="#ffea67"/><stop offset="0.667" stop-color="#ffe641"/><stop offset="0.833" stop-color="#ffe21d"/><stop offset="1" stop-color="#ffdf00"/></linearGradient><linearGradient id="g173" gradientUnits="userSpaceOnUse" x1="871.6" y1="485.6" x2="983.3" y2="362.4"><stop offset="0" stop-color="#ffffff"/><stop offset="0.167" stop-color="#fff4c2"/><stop offset="0.333" stop-color="#ffec91"/><stop offset="0.5" stop-color="#ffe666"/><stop offset="0.667" stop-color="#ffe041"/><stop offset="0.833" stop-color="#ffdc1d"/><stop offset="1" stop-color="#ffd800"/></linearGradient><linearGradient id="g174" gradientUnits="userSpaceOnUse" x1="871.6" y1="485.6" x2="983.5" y2="362.5"><stop offset="0" stop-color="#ffffff"/><stop offset="0.167" stop-color="#fff2c2"/><stop offset="0.333" stop-color="#ffe990"/><stop offset="0.5" stop-color="#ffe166"/><stop offset="0.667" stop-color="#ffdb40"/><stop offset="0.833" stop-color="#ffd61d"/><stop offset="1" stop-color="#ffd200"/></linearGradient><linearGradient id="g175" gradientUnits="userSpaceOnUse" x1="871.6" y1="485.6" x2="983.5" y2="362.5"><stop offset="0" stop-color="#ffffff"/><stop offset="0.167" stop-color="#fff0c1"/><stop offset="0.333" stop-color="#ffe58f"/><stop offset="0.5" stop-color="#ffdd65"/><stop offset="0.667" stop-color="#ffd640"/><stop offset="0.833" stop-color="#ffd01d"/><stop offset="1" stop-color="#ffcb00"/></linearGradient><linearGradient id="g176" gradientUnits="userSpaceOnUse" x1="871.6" y1="485.6" x2="983.5" y2="362.5"><stop offset="0" stop-color="#ffffff"/><stop offset="0.167" stop-color="#ffefc0"/><stop offset="0.333" stop-color="#ffe28e"/><stop offset="0.5" stop-color="#ffd864"/><stop offset="0.667" stop-color="#ffd13f"/><stop offset="0.833" stop-color="#ffca1d"/><stop offset="1" stop-color="#ffc500"/></linearGradient><linearGradient id="g177" gradientUnits="userSpaceOnUse" x1="871.6" y1="485.6" x2="983.5" y2="362.5"><stop offset="0" stop-color="#ffffff"/><stop offset="0.167" stop-color="#ffedc0"/><stop offset="0.333" stop-color="#ffdf8d"/><stop offset="0.5" stop-color="#ffd463"/><stop offset="0.667" stop-color="#ffcc3f"/><stop offset="0.833" stop-color="#ffc51c"/><stop offset="1" stop-color="#ffbf00"/></linearGradient><linearGradient id="g178" gradientUnits="userSpaceOnUse" x1="871.6" y1="485.6" x2="983.5" y2="362.5"><stop offset="0" stop-color="#ffffff"/><stop offset="0.167" stop-color="#ffebbf"/><stop offset="0.333" stop-color="#ffdc8c"/><stop offset="0.5" stop-color="#ffd063"/><stop offset="0.667" stop-color="#ffc73e"/><stop offset="0.833" stop-color="#ffbf1c"/><stop offset="1" stop-color="#ffb900"/></linearGradient><linearGradient id="g179" gradientUnits="userSpaceOnUse" x1="871.6" y1="485.6" x2="983.5" y2="362.5"><stop offset="0" stop-color="#ffffff"/><stop offset="0.167" stop-color="#ffe9be"/><stop offset="0.333" stop-color="#ffd98c"/><stop offset="0.5" stop-color="#ffcc62"/><stop offset="0.667" stop-color="#ffc23e"/><stop offset="0.833" stop-color="#ffba1c"/><stop offset="1" stop-color="#ffb300"/></linearGradient><linearGradient id="g180" gradientUnits="userSpaceOnUse" x1="871.6" y1="485.6" x2="983.5" y2="362.5"><stop offset="0" stop-color="#ffffff"/><stop offset="0.167" stop-color="#ffe7be"/><stop offset="0.333" stop-color="#ffd68b"/><stop offset="0.5" stop-color="#ffc861"/><stop offset="0.667" stop-color="#ffbe3d"/><stop offset="0.833" stop-color="#ffb51c"/><stop offset="1" stop-color="#ffae00"/></linearGradient><linearGradient id="g181" gradientUnits="userSpaceOnUse" x1="871.6" y1="485.6" x2="983.5" y2="362.5"><stop offset="0" stop-color="#ffffff"/><stop offset="0.167" stop-color="#ffe5bd"/><stop offset="0.333" stop-color="#ffd38a"/><stop offset="0.5" stop-color="#ffc461"/><stop offset="0.667" stop-color="#ffb93d"/><stop offset="0.833" stop-color="#ffb01c"/><stop offset="1" stop-color="#ffa800"/></linearGradient><linearGradient id="g182" gradientUnits="userSpaceOnUse" x1="871.6" y1="485.6" x2="983.5" y2="362.5"><stop offset="0" stop-color="#ffffff"/><stop offset="0.167" stop-color="#ffe4bc"/><stop offset="0.333" stop-color="#ffd089"/><stop offset="0.5" stop-color="#ffc160"/><stop offset="0.667" stop-color="#ffb53d"/><stop offset="0.833" stop-color="#ffab1c"/><stop offset="1" stop-color="#ffa300"/></linearGradient><linearGradient id="g183" gradientUnits="userSpaceOnUse" x1="871.6" y1="485.6" x2="983.5" y2="362.5"><stop offset="0" stop-color="#ffffff"/><stop offset="0.167" stop-color="#ffe2bc"/><stop offset="0.333" stop-color="#ffcd89"/><stop offset="0.5" stop-color="#ffbd5f"/><stop offset="0.667" stop-color="#ffb03c"/><stop offset="0.833" stop-color="#ffa61c"/><stop offset="1" stop-color="#ff9e00"/></linearGradient><linearGradient id="g184" gradientUnits="userSpaceOnUse" x1="871.6" y1="485.6" x2="983.5" y2="362.5"><stop offset="0" stop-color="#ffffff"/><stop offset="0.167" stop-color="#ffe0bb"/><stop offset="0.333" stop-color="#ffca88"/><stop offset="0.5" stop-color="#ffb95f"/><stop offset="0.667" stop-color="#ffac3c"/><stop offset="0.833" stop-color="#ffa21c"/><stop offset="1" stop-color="#ff9900"/></linearGradient><linearGradient id="g185" gradientUnits="userSpaceOnUse" x1="871.6" y1="485.6" x2="983.5" y2="362.5"><stop offset="0" stop-color="#ffffff"/><stop offset="0.167" stop-color="#ffdfbb"/><stop offset="0.333" stop-color="#ffc787"/><stop offset="0.5" stop-color="#ffb65e"/><stop offset="0.667" stop-color="#ffa83b"/><stop offset="0.833" stop-color="#ff9d1c"/><stop offset="1" stop-color="#ff9400"/></linearGradient><linearGradient id="g186" gradientUnits="userSpaceOnUse" x1="871.6" y1="485.6" x2="983.2" y2="362.4"><stop offset="0" stop-color="#ffffff"/><stop offset="0.167" stop-color="#ffddba"/><stop offset="0.333" stop-color="#ffc587"/><stop offset="0.5" stop-color="#ffb25e"/><stop offset="0.667" stop-color="#ffa43b"/><stop offset="0.833" stop-color="#ff991b"/><stop offset="1" stop-color="#ff8f00"/></linearGradient><linearGradient id="g187" gradientUnits="userSpaceOnUse" x1="871.6" y1="485.6" x2="983.2" y2="362.4"><stop offset="0" stop-color="#ffffff"/><stop offset="0.167" stop-color="#ffdbba"/><stop offset="0.333" stop-color="#ffc286"/><stop offset="0.5" stop-color="#ffaf5d"/><stop offset="0.667" stop-color="#ffa03b"/><stop offset="0.833" stop-color="#ff951b"/><stop offset="1" stop-color="#ff8b00"/></linearGradient><linearGradient id="g188" gradientUnits="userSpaceOnUse" x1="871.6" y1="485.6" x2="983.2" y2="362.4"><stop offset="0" stop-color="#ffffff"/><stop offset="0.167" stop-color="#ffdab9"/><stop offset="0.333" stop-color="#ffc085"/><stop offset="0.5" stop-color="#ffac5d"/><stop offset="0.667" stop-color="#ff9d3a"/><stop offset="0.833" stop-color="#ff911b"/><stop offset="1" stop-color="#ff8600"/></linearGradient><linearGradient id="g189" gradientUnits="userSpaceOnUse" x1="871.6" y1="485.6" x2="983.2" y2="362.4"><stop offset="0" stop-color="#ffffff"/><stop offset="0.167" stop-color="#ffd8b8"/><stop offset="0.333" stop-color="#ffbd85"/><stop offset="0.5" stop-color="#ffa95c"/><stop offset="0.667" stop-color="#ff993a"/><stop offset="0.833" stop-color="#ff8c1b"/><stop offset="1" stop-color="#ff8200"/></linearGradient><linearGradient id="g190" gradientUnits="userSpaceOnUse" x1="871.6" y1="485.6" x2="983.2" y2="362.4"><stop offset="0" stop-color="#ffffff"/><stop offset="0.167" stop-color="#ffd7b8"/><stop offset="0.333" stop-color="#ffbb84"/><stop offset="0.5" stop-color="#ffa65b"/><stop offset="0.667" stop-color="#ff953a"/><stop offset="0.833" stop-color="#ff891b"/><stop offset="1" stop-color="#ff7e00"/></linearGradient><linearGradient id="g191" gradientUnits="userSpaceOnUse" x1="871.6" y1="485.6" x2="983.2" y2="362.4"><stop offset="0" stop-color="#ffffff"/><stop offset="0.167" stop-color="#ffd5b7"/><stop offset="0.333" stop-color="#ffb883"/><stop offset="0.5" stop-color="#ffa35b"/><stop offset="0.667" stop-color="#ff9239"/><stop offset="0.833" stop-color="#ff851b"/><stop offset="1" stop-color="#ff7a00"/></linearGradient><linearGradient id="g192" gradientUnits="userSpaceOnUse" x1="871.6" y1="485.6" x2="983.8" y2="362.6"><stop offset="0" stop-color="#ffffff"/><stop offset="0.167" stop-color="#ffd4b7"/><stop offset="0.333" stop-color="#ffb583"/><stop offset="0.5" stop-color="#ff9f5a"/><stop offset="0.667" stop-color="#ff8e39"/><stop offset="0.833" stop-color="#ff811b"/><stop offset="1" stop-color="#ff7500"/></linearGradient><linearGradient id="g193" gradientUnits="userSpaceOnUse" x1="871.6" y1="485.6" x2="983.8" y2="362.6"><stop offset="0" stop-color="#ffffff"/><stop offset="0.167" stop-color="#ffd2b6"/><stop offset="0.333" stop-color="#ffb382"/><stop offset="0.5" stop-color="#ff9c5a"/><stop offset="0.667" stop-color="#ff8a39"/><stop offset="0.833" stop-color="#ff7c1b"/><stop offset="1" stop-color="#ff7100"/></linearGradient><linearGradient id="g194" gradientUnits="userSpaceOnUse" x1="871.6" y1="485.6" x2="983.8" y2="362.6"><stop offset="0" stop-color="#ffffff"/><stop offset="0.167" stop-color="#ffd0b6"/><stop offset="0.333" stop-color="#ffb082"/><stop offset="0.5" stop-color="#ff9959"/><stop offset="0.667" stop-color="#ff8738"/><stop offset="0.833" stop-color="#ff781b"/><stop offset="1" stop-color="#ff6d00"/></linearGradient><linearGradient id="g195" gradientUnits="userSpaceOnUse" x1="871.6" y1="485.6" x2="983.8" y2="362.6"><stop offset="0" stop-color="#ffffff"/><stop offset="0.167" stop-color="#ffcfb5"/><stop offset="0.333" stop-color="#ffae81"/><stop offset="0.5" stop-color="#ff9559"/><stop offset="0.667" stop-color="#ff8338"/><stop offset="0.833" stop-color="#ff741b"/><stop offset="1" stop-color="#ff6800"/></linearGradient><linearGradient id="g196" gradientUnits="userSpaceOnUse" x1="871.6" y1="485.6" x2="983.8" y2="362.6"><stop offset="0" stop-color="#ffffff"/><stop offset="0.167" stop-color="#ffcdb5"/><stop offset="0.333" stop-color="#ffab80"/><stop offset="0.5" stop-color="#ff9258"/><stop offset="0.667" stop-color="#ff7f38"/><stop offset="0.833" stop-color="#ff701b"/><stop offset="1" stop-color="#ff6400"/></linearGradient><linearGradient id="g197" gradientUnits="userSpaceOnUse" x1="871.6" y1="485.6" x2="983.4" y2="362.5"><stop offset="0" stop-color="#ffffff"/><stop offset="0.167" stop-color="#ffcbb4"/><stop offset="0.333" stop-color="#ffa980"/><stop offset="0.5" stop-color="#ff8f58"/><stop offset="0.667" stop-color="#ff7c37"/><stop offset="0.833" stop-color="#ff6d1b"/><stop offset="1" stop-color="#ff6000"/></linearGradient><linearGradient id="g198" gradientUnits="userSpaceOnUse" x1="871.6" y1="485.6" x2="983.4" y2="362.5"><stop offset="0" stop-color="#ffffff"/><stop offset="0.167" stop-color="#ffcab4"/><stop offset="0.333" stop-color="#ffa67f"/><stop offset="0.5" stop-color="#ff8d57"/><stop offset="0.667" stop-color="#ff7937"/><stop offset="0.833" stop-color="#ff691b"/><stop offset="1" stop-color="#ff5c00"/></linearGradient><linearGradient id="g199" gradientUnits="userSpaceOnUse" x1="871.6" y1="485.6" x2="983.4" y2="362.5"><stop offset="0" stop-color="#ffffff"/><stop offset="0.167" stop-color="#ffc9b3"/><stop offset="0.333" stop-color="#ffa47f"/><stop offset="0.5" stop-color="#ff8a57"/><stop offset="0.667" stop-color="#ff7637"/><stop offset="0.833" stop-color="#ff661a"/><stop offset="1" stop-color="#ff5900"/></linearGradient><linearGradient id="g200" gradientUnits="userSpaceOnUse" x1="871.6" y1="485.6" x2="983.4" y2="362.5"><stop offset="0" stop-color="#ffffff"/><stop offset="0.167" stop-color="#ffc7b3"/><stop offset="0.333" stop-color="#ffa27e"/><stop offset="0.5" stop-color="#ff8757"/><stop offset="0.667" stop-color="#ff7337"/><stop offset="0.833" stop-color="#ff621a"/><stop offset="1" stop-color="#ff5500"/></linearGradient><linearGradient id="g201" gradientUnits="userSpaceOnUse" x1="871.6" y1="485.6" x2="983.4" y2="362.5"><stop offset="0" stop-color="#ffffff"/><stop offset="0.167" stop-color="#ffc6b2"/><stop offset="0.333" stop-color="#ffa07e"/><stop offset="0.5" stop-color="#ff8556"/><stop offset="0.667" stop-color="#ff7036"/><stop offset="0.833" stop-color="#ff5f1a"/><stop offset="1" stop-color="#ff5200"/></linearGradient><linearGradient id="g202" gradientUnits="userSpaceOnUse" x1="871.6" y1="485.6" x2="983.3" y2="362.5"><stop offset="0" stop-color="#ffffff"/><stop offset="0.167" stop-color="#ffc4b2"/><stop offset="0.333" stop-color="#ff9e7d"/><stop offset="0.5" stop-color="#ff8256"/><stop offset="0.667" stop-color="#ff6d36"/><stop offset="0.833" stop-color="#ff5c1a"/><stop offset="1" stop-color="#ff4e00"/></linearGradient><linearGradient id="g203" gradientUnits="userSpaceOnUse" x1="871.6" y1="485.6" x2="983.3" y2="362.5"><stop offset="0" stop-color="#ffffff"/><stop offset="0.167" stop-color="#ffc3b1"/><stop offset="0.333" stop-color="#ff9b7c"/><stop offset="0.5" stop-color="#ff7f55"/><stop offset="0.667" stop-color="#ff6936"/><stop offset="0.833" stop-color="#ff581a"/><stop offset="1" stop-color="#ff4a00"/></linearGradient><linearGradient id="g204" gradientUnits="userSpaceOnUse" x1="871.6" y1="485.6" x2="983.3" y2="362.5"><stop offset="0" stop-color="#ffffff"/><stop offset="0.167" stop-color="#ffc1b1"/><stop offset="0.333" stop-color="#ff997c"/><stop offset="0.5" stop-color="#ff7c55"/><stop offset="0.667" stop-color="#ff6635"/><stop offset="0.833" stop-color="#ff551a"/><stop offset="1" stop-color="#ff4600"/></linearGradient><linearGradient id="g205" gradientUnits="userSpaceOnUse" x1="871.6" y1="485.6" x2="983.3" y2="362.5"><stop offset="0" stop-color="#ffffff"/><stop offset="0.167" stop-color="#ffc0b0"/><stop offset="0.333" stop-color="#ff977b"/><stop offset="0.5" stop-color="#ff7954"/><stop offset="0.667" stop-color="#ff6335"/><stop offset="0.833" stop-color="#ff511a"/><stop offset="1" stop-color="#ff4300"/></linearGradient><linearGradient id="g206" gradientUnits="userSpaceOnUse" x1="871.6" y1="485.6" x2="982.6" y2="362.5"><stop offset="0" stop-color="#ffffff"/><stop offset="0.167" stop-color="#ffbeb0"/><stop offset="0.333" stop-color="#ff947b"/><stop offset="0.5" stop-color="#ff7654"/><stop offset="0.667" stop-color="#ff6035"/><stop offset="0.833" stop-color="#ff4e1a"/><stop offset="1" stop-color="#ff3f00"/></linearGradient><linearGradient id="g207" gradientUnits="userSpaceOnUse" x1="871.6" y1="485.6" x2="982.6" y2="362.5"><stop offset="0" stop-color="#ffffff"/><stop offset="0.167" stop-color="#ffbdaf"/><stop offset="0.333" stop-color="#ff927a"/><stop offset="0.5" stop-color="#ff7353"/><stop offset="0.667" stop-color="#ff5c35"/><stop offset="0.833" stop-color="#ff4a1a"/><stop offset="1" stop-color="#ff3b00"/></linearGradient><linearGradient id="g208" gradientUnits="userSpaceOnUse" x1="871.6" y1="485.6" x2="982.6" y2="362.5"><stop offset="0" stop-color="#ffffff"/><stop offset="0.167" stop-color="#ffbbaf"/><stop offset="0.333" stop-color="#ff8f7a"/><stop offset="0.5" stop-color="#ff7053"/><stop offset="0.667" stop-color="#ff5934"/><stop offset="0.833" stop-color="#ff461a"/><stop offset="1" stop-color="#ff3700"/></linearGradient><linearGradient id="g209" gradientUnits="userSpaceOnUse" x1="871.6" y1="485.6" x2="983.9" y2="362.4"><stop offset="0" stop-color="#ffffff"/><stop offset="0.167" stop-color="#ffbaae"/><stop offset="0.333" stop-color="#ff8d79"/><stop offset="0.5" stop-color="#ff6e52"/><stop offset="0.667" stop-color="#ff5634"/><stop offset="0.833" stop-color="#ff431a"/><stop offset="1" stop-color="#ff3300"/></linearGradient><linearGradient id="g210" gradientUnits="userSpaceOnUse" x1="871.6" y1="485.6" x2="983.9" y2="362.4"><stop offset="0" stop-color="#ffffff"/><stop offset="0.167" stop-color="#ffb8ae"/><stop offset="0.333" stop-color="#ff8b79"/><stop offset="0.5" stop-color="#ff6b52"/><stop offset="0.667" stop-color="#ff5334"/><stop offset="0.833" stop-color="#ff401a"/><stop offset="1" stop-color="#ff3000"/></linearGradient><linearGradient id="g211" gradientUnits="userSpaceOnUse" x1="871.6" y1="485.6" x2="983.9" y2="362.4"><stop offset="0" stop-color="#ffffff"/><stop offset="0.167" stop-color="#ffb7ad"/><stop offset="0.333" stop-color="#ff8978"/><stop offset="0.5" stop-color="#ff6952"/><stop offset="0.667" stop-color="#ff5034"/><stop offset="0.833" stop-color="#ff3d1a"/><stop offset="1" stop-color="#ff2c00"/></linearGradient><linearGradient id="g212" gradientUnits="userSpaceOnUse" x1="871.6" y1="485.6" x2="983.9" y2="362.4"><stop offset="0" stop-color="#ffffff"/><stop offset="0.167" stop-color="#ffb6ad"/><stop offset="0.333" stop-color="#ff8778"/><stop offset="0.5" stop-color="#ff6651"/><stop offset="0.667" stop-color="#ff4d33"/><stop offset="0.833" stop-color="#ff391a"/><stop offset="1" stop-color="#ff2900"/></linearGradient><linearGradient id="g213" gradientUnits="userSpaceOnUse" x1="871.6" y1="485.6" x2="983.9" y2="362.4"><stop offset="0" stop-color="#ffffff"/><stop offset="0.167" stop-color="#ffb4ac"/><stop offset="0.333" stop-color="#ff8577"/><stop offset="0.5" stop-color="#ff6451"/><stop offset="0.667" stop-color="#ff4a33"/><stop offset="0.833" stop-color="#ff361a"/><stop offset="1" stop-color="#ff2500"/></linearGradient><linearGradient id="g214" gradientUnits="userSpaceOnUse" x1="871.6" y1="485.6" x2="982.5" y2="362.6"><stop offset="0" stop-color="#ffffff"/><stop offset="0.167" stop-color="#ffb3ac"/><stop offset="0.333" stop-color="#ff8377"/><stop offset="0.5" stop-color="#ff6151"/><stop offset="0.667" stop-color="#ff4733"/><stop offset="0.833" stop-color="#ff331a"/><stop offset="1" stop-color="#ff2100"/></linearGradient><linearGradient id="g215" gradientUnits="userSpaceOnUse" x1="871.6" y1="485.6" x2="982.5" y2="362.6"><stop offset="0" stop-color="#ffffff"/><stop offset="0.167" stop-color="#ffb2ab"/><stop offset="0.333" stop-color="#ff8176"/><stop offset="0.5" stop-color="#ff5f50"/><stop offset="0.667" stop-color="#ff4533"/><stop offset="0.833" stop-color="#ff3019"/><stop offset="1" stop-color="#ff1e00"/></linearGradient><linearGradient id="g216" gradientUnits="userSpaceOnUse" x1="871.6" y1="485.6" x2="984.0" y2="362.4"><stop offset="0" stop-color="#ffffff"/><stop offset="0.167" stop-color="#ffb1ab"/><stop offset="0.333" stop-color="#ff7f76"/><stop offset="0.5" stop-color="#ff5d50"/><stop offset="0.667" stop-color="#ff4332"/><stop offset="0.833" stop-color="#ff2d19"/><stop offset="1" stop-color="#ff1b00"/></linearGradient><linearGradient id="g217" gradientUnits="userSpaceOnUse" x1="871.6" y1="485.6" x2="984.0" y2="362.4"><stop offset="0" stop-color="#ffffff"/><stop offset="0.167" stop-color="#ffb0ab"/><stop offset="0.333" stop-color="#ff7e75"/><stop offset="0.5" stop-color="#ff5b50"/><stop offset="0.667" stop-color="#ff4132"/><stop offset="0.833" stop-color="#ff2b19"/><stop offset="1" stop-color="#ff1900"/></linearGradient><linearGradient id="g218" gradientUnits="userSpaceOnUse" x1="871.6" y1="485.6" x2="984.0" y2="362.4"><stop offset="0" stop-color="#ffffff"/><stop offset="0.167" stop-color="#ffafaa"/><stop offset="0.333" stop-color="#ff7d75"/><stop offset="0.5" stop-color="#ff5a4f"/><stop offset="0.667" stop-color="#ff3f32"/><stop offset="0.833" stop-color="#ff2919"/><stop offset="1" stop-color="#ff1600"/></linearGradient><linearGradient id="g219" gradientUnits="userSpaceOnUse" x1="871.6" y1="485.6" x2="984.0" y2="362.4"><stop offset="0" stop-color="#ffffff"/><stop offset="0.167" stop-color="#ffaeaa"/><stop offset="0.333" stop-color="#ff7b75"/><stop offset="0.5" stop-color="#ff584f"/><stop offset="0.667" stop-color="#ff3d32"/><stop offset="0.833" stop-color="#ff2719"/><stop offset="1" stop-color="#ff1400"/></linearGradient><linearGradient id="g220" gradientUnits="userSpaceOnUse" x1="871.6" y1="485.6" x2="984.0" y2="362.4"><stop offset="0" stop-color="#ffffff"/><stop offset="0.167" stop-color="#ffadaa"/><stop offset="0.333" stop-color="#ff7a75"/><stop offset="0.5" stop-color="#ff564f"/><stop offset="0.667" stop-color="#ff3b32"/><stop offset="0.833" stop-color="#ff2519"/><stop offset="1" stop-color="#ff1100"/></linearGradient><linearGradient id="g221" gradientUnits="userSpaceOnUse" x1="871.6" y1="485.6" x2="982.0" y2="362.8"><stop offset="0" stop-color="#ffffff"/><stop offset="0.167" stop-color="#ffaca9"/><stop offset="0.333" stop-color="#ff7874"/><stop offset="0.5" stop-color="#ff544f"/><stop offset="0.667" stop-color="#ff3932"/><stop offset="0.833" stop-color="#ff2219"/><stop offset="1" stop-color="#ff0e00"/></linearGradient><linearGradient id="g222" gradientUnits="userSpaceOnUse" x1="871.6" y1="485.6" x2="982.0" y2="362.8"><stop offset="0" stop-color="#ffffff"/><stop offset="0.167" stop-color="#ffaba9"/><stop offset="0.333" stop-color="#ff7774"/><stop offset="0.5" stop-color="#ff534e"/><stop offset="0.667" stop-color="#ff3732"/><stop offset="0.833" stop-color="#ff2019"/><stop offset="1" stop-color="#ff0b00"/></linearGradient><linearGradient id="g223" gradientUnits="userSpaceOnUse" x1="871.6" y1="485.6" x2="984.0" y2="362.4"><stop offset="0" stop-color="#ffffff"/><stop offset="0.167" stop-color="#ffaaa9"/><stop offset="0.333" stop-color="#ff7573"/><stop offset="0.5" stop-color="#ff514e"/><stop offset="0.667" stop-color="#ff3431"/><stop offset="0.833" stop-color="#ff1d19"/><stop offset="1" stop-color="#ff0700"/></linearGradient><linearGradient id="g224" gradientUnits="userSpaceOnUse" x1="871.6" y1="485.6" x2="984.0" y2="362.4"><stop offset="0" stop-color="#ffffff"/><stop offset="0.167" stop-color="#ffa9a8"/><stop offset="0.333" stop-color="#ff7473"/><stop offset="0.5" stop-color="#ff4f4e"/><stop offset="0.667" stop-color="#ff3231"/><stop offset="0.833" stop-color="#ff1a19"/><stop offset="1" stop-color="#ff0300"/></linearGradient><linearGradient id="g225" gradientUnits="userSpaceOnUse" x1="871.6" y1="485.6" x2="930.3" y2="624.4"><stop offset="0" stop-color="#ffffff"/><stop offset="0.167" stop-color="#ffa8a9"/><stop offset="0.333" stop-color="#ff7374"/><stop offset="0.5" stop-color="#ff4e4f"/><stop offset="0.667" stop-color="#ff3133"/><stop offset="0.833" stop-color="#ff191b"/><stop offset="1" stop-color="#ff0003"/></linearGradient><linearGradient id="g226" gradientUnits="userSpaceOnUse" x1="871.6" y1="485.6" x2="930.3" y2="624.4"><stop offset="0" stop-color="#ffffff"/><stop offset="0.167" stop-color="#ffa9aa"/><stop offset="0.333" stop-color="#ff7476"/><stop offset="0.5" stop-color="#ff4e52"/><stop offset="0.667" stop-color="#ff3136"/><stop offset="0.833" stop-color="#ff191e"/><stop offset="1" stop-color="#ff0008"/></linearGradient><linearGradient id="g227" gradientUnits="userSpaceOnUse" x1="871.6" y1="485.6" x2="930.3" y2="624.4"><stop offset="0" stop-color="#ffffff"/><stop offset="0.167" stop-color="#ffaaac"/><stop offset="0.333" stop-color="#ff7478"/><stop offset="0.5" stop-color="#ff4f54"/><stop offset="0.667" stop-color="#ff3238"/><stop offset="0.833" stop-color="#ff1922"/><stop offset="1" stop-color="#ff000d"/></linearGradient><linearGradient id="g228" gradientUnits="userSpaceOnUse" x1="871.6" y1="485.6" x2="930.3" y2="624.4"><stop offset="0" stop-color="#ffffff"/><stop offset="0.167" stop-color="#ffaaae"/><stop offset="0.333" stop-color="#ff757b"/><stop offset="0.5" stop-color="#ff4f57"/><stop offset="0.667" stop-color="#ff323b"/><stop offset="0.833" stop-color="#ff1925"/><stop offset="1" stop-color="#ff0011"/></linearGradient><linearGradient id="g229" gradientUnits="userSpaceOnUse" x1="871.6" y1="485.6" x2="930.3" y2="624.4"><stop offset="0" stop-color="#ffffff"/><stop offset="0.167" stop-color="#ffabaf"/><stop offset="0.333" stop-color="#ff767d"/><stop offset="0.5" stop-color="#ff505a"/><stop offset="0.667" stop-color="#ff323e"/><stop offset="0.833" stop-color="#ff1928"/><stop offset="1" stop-color="#ff0015"/></linearGradient><linearGradient id="g230" gradientUnits="userSpaceOnUse" x1="871.6" y1="485.6" x2="930.3" y2="624.4"><stop offset="0" stop-color="#ffffff"/><stop offset="0.167" stop-color="#ffacb1"/><stop offset="0.333" stop-color="#ff767f"/><stop offset="0.5" stop-color="#ff505c"/><stop offset="0.667" stop-color="#ff3241"/><stop offset="0.833" stop-color="#ff192c"/><stop offset="1" stop-color="#ff0019"/></linearGradient><linearGradient id="g231" gradientUnits="userSpaceOnUse" x1="871.6" y1="485.6" x2="930.3" y2="624.4"><stop offset="0" stop-color="#ffffff"/><stop offset="0.167" stop-color="#ffacb2"/><stop offset="0.333" stop-color="#ff7782"/><stop offset="0.5" stop-color="#ff515f"/><stop offset="0.667" stop-color="#ff3345"/><stop offset="0.833" stop-color="#ff192f"/><stop offset="1" stop-color="#ff001d"/></linearGradient><linearGradient id="g232" gradientUnits="userSpaceOnUse" x1="871.6" y1="485.6" x2="930.3" y2="624.4"><stop offset="0" stop-color="#ffffff"/><stop offset="0.167" stop-color="#ffadb4"/><stop offset="0.333" stop-color="#ff7884"/><stop offset="0.5" stop-color="#ff5162"/><stop offset="0.667" stop-color="#ff3348"/><stop offset="0.833" stop-color="#ff1933"/><stop offset="1" stop-color="#ff0020"/></linearGradient><linearGradient id="g233" gradientUnits="userSpaceOnUse" x1="871.6" y1="485.6" x2="930.3" y2="624.4"><stop offset="0" stop-color="#ffffff"/><stop offset="0.167" stop-color="#ffaeb6"/><stop offset="0.333" stop-color="#ff7886"/><stop offset="0.5" stop-color="#ff5265"/><stop offset="0.667" stop-color="#ff334b"/><stop offset="0.833" stop-color="#ff1936"/><stop offset="1" stop-color="#ff0024"/></linearGradient><linearGradient id="g234" gradientUnits="userSpaceOnUse" x1="871.6" y1="485.6" x2="930.3" y2="624.4"><stop offset="0" stop-color="#ffffff"/><stop offset="0.167" stop-color="#ffaeb7"/><stop offset="0.333" stop-color="#ff7989"/><stop offset="0.5" stop-color="#ff5267"/><stop offset="0.667" stop-color="#ff344e"/><stop offset="0.833" stop-color="#ff1939"/><stop offset="1" stop-color="#ff0028"/></linearGradient><linearGradient id="g235" gradientUnits="userSpaceOnUse" x1="871.6" y1="485.6" x2="930.3" y2="624.4"><stop offset="0" stop-color="#ffffff"/><stop offset="0.167" stop-color="#ffafb9"/><stop offset="0.333" stop-color="#ff7a8b"/><stop offset="0.5" stop-color="#ff536a"/><stop offset="0.667" stop-color="#ff3451"/><stop offset="0.833" stop-color="#ff193d"/><stop offset="1" stop-color="#ff002c"/></linearGradient><linearGradient id="g236" gradientUnits="userSpaceOnUse" x1="871.6" y1="485.6" x2="930.3" y2="624.4"><stop offset="0" stop-color="#ffffff"/><stop offset="0.167" stop-color="#ffb0ba"/><stop offset="0.333" stop-color="#ff7a8e"/><stop offset="0.5" stop-color="#ff536d"/><stop offset="0.667" stop-color="#ff3454"/><stop offset="0.833" stop-color="#ff1941"/><stop offset="1" stop-color="#ff0030"/></linearGradient><linearGradient id="g237" gradientUnits="userSpaceOnUse" x1="871.6" y1="485.6" x2="930.3" y2="624.4"><stop offset="0" stop-color="#ffffff"/><stop offset="0.167" stop-color="#ffb0bc"/><stop offset="0.333" stop-color="#ff7b90"/><stop offset="0.5" stop-color="#ff5470"/><stop offset="0.667" stop-color="#ff3458"/><stop offset="0.833" stop-color="#ff1944"/><stop offset="1" stop-color="#ff0034"/></linearGradient><linearGradient id="g238" gradientUnits="userSpaceOnUse" x1="871.6" y1="485.6" x2="930.3" y2="624.4"><stop offset="0" stop-color="#ffffff"/><stop offset="0.167" stop-color="#ffb1be"/><stop offset="0.333" stop-color="#ff7c93"/><stop offset="0.5" stop-color="#ff5473"/><stop offset="0.667" stop-color="#ff355b"/><stop offset="0.833" stop-color="#ff1948"/><stop offset="1" stop-color="#ff0038"/></linearGradient><linearGradient id="g239" gradientUnits="userSpaceOnUse" x1="871.6" y1="485.6" x2="930.3" y2="624.4"><stop offset="0" stop-color="#ffffff"/><stop offset="0.167" stop-color="#ffb2c0"/><stop offset="0.333" stop-color="#ff7d95"/><stop offset="0.5" stop-color="#ff5576"/><stop offset="0.667" stop-color="#ff355f"/><stop offset="0.833" stop-color="#ff194c"/><stop offset="1" stop-color="#ff003c"/></linearGradient><linearGradient id="g240" gradientUnits="userSpaceOnUse" x1="871.6" y1="485.6" x2="930.3" y2="624.4"><stop offset="0" stop-color="#ffffff"/><stop offset="0.167" stop-color="#ffb2c1"/><stop offset="0.333" stop-color="#ff7d98"/><stop offset="0.5" stop-color="#ff5679"/><stop offset="0.667" stop-color="#ff3562"/><stop offset="0.833" stop-color="#ff194f"/><stop offset="1" stop-color="#ff0040"/></linearGradient><linearGradient id="g241" gradientUnits="userSpaceOnUse" x1="871.6" y1="485.6" x2="930.3" y2="624.4"><stop offset="0" stop-color="#ffffff"/><stop offset="0.167" stop-color="#ffb3c3"/><stop offset="0.333" stop-color="#ff7e9a"/><stop offset="0.5" stop-color="#ff567d"/><stop offset="0.667" stop-color="#ff3666"/><stop offset="0.833" stop-color="#ff1953"/><stop offset="1" stop-color="#ff0044"/></linearGradient><linearGradient id="g242" gradientUnits="userSpaceOnUse" x1="871.6" y1="485.6" x2="930.3" y2="624.4"><stop offset="0" stop-color="#ffffff"/><stop offset="0.167" stop-color="#ffb4c5"/><stop offset="0.333" stop-color="#ff7f9d"/><stop offset="0.5" stop-color="#ff5780"/><stop offset="0.667" stop-color="#ff3669"/><stop offset="0.833" stop-color="#ff1957"/><stop offset="1" stop-color="#ff0048"/></linearGradient><linearGradient id="g243" gradientUnits="userSpaceOnUse" x1="871.6" y1="485.6" x2="930.3" y2="624.4"><stop offset="0" stop-color="#ffffff"/><stop offset="0.167" stop-color="#ffb4c7"/><stop offset="0.333" stop-color="#ff80a0"/><stop offset="0.5" stop-color="#ff5783"/><stop offset="0.667" stop-color="#ff366d"/><stop offset="0.833" stop-color="#ff195b"/><stop offset="1" stop-color="#ff004c"/></linearGradient><linearGradient id="g244" gradientUnits="userSpaceOnUse" x1="871.6" y1="485.6" x2="930.3" y2="624.4"><stop offset="0" stop-color="#ffffff"/><stop offset="0.167" stop-color="#ffb5c8"/><stop offset="0.333" stop-color="#ff81a3"/><stop offset="0.5" stop-color="#ff5886"/><stop offset="0.667" stop-color="#ff3771"/><stop offset="0.833" stop-color="#ff195f"/><stop offset="1" stop-color="#ff0051"/></linearGradient><linearGradient id="g245" gradientUnits="userSpaceOnUse" x1="871.6" y1="485.6" x2="930.3" y2="624.4"><stop offset="0" stop-color="#ffffff"/><stop offset="0.167" stop-color="#ffb6ca"/><stop offset="0.333" stop-color="#ff81a5"/><stop offset="0.5" stop-color="#ff598a"/><stop offset="0.667" stop-color="#ff3775"/><stop offset="0.833" stop-color="#ff1963"/><stop offset="1" stop-color="#ff0055"/></linearGradient><linearGradient id="g246" gradientUnits="userSpaceOnUse" x1="871.6" y1="485.6" x2="930.3" y2="624.4"><stop offset="0" stop-color="#ffffff"/><stop offset="0.167" stop-color="#ffb7cc"/><stop offset="0.333" stop-color="#ff82a8"/><stop offset="0.5" stop-color="#ff598d"/><stop offset="0.667" stop-color="#ff3778"/><stop offset="0.833" stop-color="#ff1967"/><stop offset="1" stop-color="#ff0059"/></linearGradient><linearGradient id="g247" gradientUnits="userSpaceOnUse" x1="871.6" y1="485.6" x2="930.3" y2="624.4"><stop offset="0" stop-color="#ffffff"/><stop offset="0.167" stop-color="#ffb7ce"/><stop offset="0.333" stop-color="#ff83ab"/><stop offset="0.5" stop-color="#ff5a91"/><stop offset="0.667" stop-color="#ff387c"/><stop offset="0.833" stop-color="#ff186c"/><stop offset="1" stop-color="#ff005e"/></linearGradient><linearGradient id="g248" gradientUnits="userSpaceOnUse" x1="871.6" y1="485.6" x2="930.3" y2="624.4"><stop offset="0" stop-color="#ffffff"/><stop offset="0.167" stop-color="#ffb8d0"/><stop offset="0.333" stop-color="#ff84ae"/><stop offset="0.5" stop-color="#ff5b94"/><stop offset="0.667" stop-color="#ff3880"/><stop offset="0.833" stop-color="#ff1870"/><stop offset="1" stop-color="#ff0063"/></linearGradient><linearGradient id="g249" gradientUnits="userSpaceOnUse" x1="871.6" y1="485.6" x2="930.3" y2="624.4"><stop offset="0" stop-color="#ffffff"/><stop offset="0.167" stop-color="#ffb9d2"/><stop offset="0.333" stop-color="#ff85b1"/><stop offset="0.5" stop-color="#ff5b98"/><stop offset="0.667" stop-color="#ff3885"/><stop offset="0.833" stop-color="#ff1875"/><stop offset="1" stop-color="#ff0068"/></linearGradient><linearGradient id="g250" gradientUnits="userSpaceOnUse" x1="871.6" y1="485.6" x2="930.3" y2="624.4"><stop offset="0" stop-color="#ffffff"/><stop offset="0.167" stop-color="#ffbad3"/><stop offset="0.333" stop-color="#ff86b4"/><stop offset="0.5" stop-color="#ff5c9c"/><stop offset="0.667" stop-color="#ff3989"/><stop offset="0.833" stop-color="#ff1879"/><stop offset="1" stop-color="#ff006c"/></linearGradient><linearGradient id="g251" gradientUnits="userSpaceOnUse" x1="871.6" y1="485.6" x2="930.3" y2="624.4"><stop offset="0" stop-color="#ffffff"/><stop offset="0.167" stop-color="#ffbbd5"/><stop offset="0.333" stop-color="#ff87b7"/><stop offset="0.5" stop-color="#ff5da0"/><stop offset="0.667" stop-color="#ff398d"/><stop offset="0.833" stop-color="#ff187e"/><stop offset="1" stop-color="#ff0071"/></linearGradient><linearGradient id="g252" gradientUnits="userSpaceOnUse" x1="871.6" y1="485.6" x2="930.3" y2="624.4"><stop offset="0" stop-color="#ffffff"/><stop offset="0.167" stop-color="#ffbbd7"/><stop offset="0.333" stop-color="#ff88ba"/><stop offset="0.5" stop-color="#ff5ea4"/><stop offset="0.667" stop-color="#ff3a92"/><stop offset="0.833" stop-color="#ff1883"/><stop offset="1" stop-color="#ff0077"/></linearGradient><linearGradient id="g253" gradientUnits="userSpaceOnUse" x1="871.6" y1="485.6" x2="930.3" y2="624.4"><stop offset="0" stop-color="#ffffff"/><stop offset="0.167" stop-color="#ffbcd9"/><stop offset="0.333" stop-color="#ff89bd"/><stop offset="0.5" stop-color="#ff5ea7"/><stop offset="0.667" stop-color="#ff3a96"/><stop offset="0.833" stop-color="#ff1888"/><stop offset="1" stop-color="#ff007c"/></linearGradient><linearGradient id="g254" gradientUnits="userSpaceOnUse" x1="871.6" y1="485.6" x2="930.3" y2="624.4"><stop offset="0" stop-color="#ffffff"/><stop offset="0.167" stop-color="#ffbddb"/><stop offset="0.333" stop-color="#ff89c0"/><stop offset="0.5" stop-color="#ff5fab"/><stop offset="0.667" stop-color="#ff3b9b"/><stop offset="0.833" stop-color="#ff188d"/><stop offset="1" stop-color="#ff0081"/></linearGradient><linearGradient id="g255" gradientUnits="userSpaceOnUse" x1="871.6" y1="485.6" x2="930.3" y2="624.4"><stop offset="0" stop-color="#ffffff"/><stop offset="0.167" stop-color="#ffbedd"/><stop offset="0.333" stop-color="#ff8ac4"/><stop offset="0.5" stop-color="#ff60b0"/><stop offset="0.667" stop-color="#ff3b9f"/><stop offset="0.833" stop-color="#ff1892"/><stop offset="1" stop-color="#ff0087"/></linearGradient><linearGradient id="g256" gradientUnits="userSpaceOnUse" x1="871.6" y1="485.6" x2="930.3" y2="624.4"><stop offset="0" stop-color="#ffffff"/><stop offset="0.167" stop-color="#ffbfdf"/><stop offset="0.333" stop-color="#ff8bc7"/><stop offset="0.5" stop-color="#ff61b4"/><stop offset="0.667" stop-color="#ff3ca4"/><stop offset="0.833" stop-color="#ff1898"/><stop offset="1" stop-color="#ff008d"/></linearGradient><linearGradient id="g257" gradientUnits="userSpaceOnUse" x1="871.6" y1="485.6" x2="930.3" y2="624.4"><stop offset="0" stop-color="#ffffff"/><stop offset="0.167" stop-color="#ffbfe1"/><stop offset="0.333" stop-color="#ff8cca"/><stop offset="0.5" stop-color="#ff62b8"/><stop offset="0.667" stop-color="#ff3ca9"/><stop offset="0.833" stop-color="#ff189d"/><stop offset="1" stop-color="#ff0093"/></linearGradient><linearGradient id="g258" gradientUnits="userSpaceOnUse" x1="871.6" y1="485.6" x2="930.3" y2="624.4"><stop offset="0" stop-color="#ffffff"/><stop offset="0.167" stop-color="#ffc0e3"/><stop offset="0.333" stop-color="#ff8ece"/><stop offset="0.5" stop-color="#ff63bc"/><stop offset="0.667" stop-color="#ff3dae"/><stop offset="0.833" stop-color="#ff18a3"/><stop offset="1" stop-color="#ff0099"/></linearGradient><linearGradient id="g259" gradientUnits="userSpaceOnUse" x1="871.6" y1="485.6" x2="930.3" y2="624.4"><stop offset="0" stop-color="#ffffff"/><stop offset="0.167" stop-color="#ffc1e5"/><stop offset="0.333" stop-color="#ff8fd1"/><stop offset="0.5" stop-color="#ff64c1"/><stop offset="0.667" stop-color="#ff3db4"/><stop offset="0.833" stop-color="#ff18a9"/><stop offset="1" stop-color="#ff009f"/></linearGradient><linearGradient id="g260" gradientUnits="userSpaceOnUse" x1="871.6" y1="485.6" x2="930.3" y2="624.4"><stop offset="0" stop-color="#ffffff"/><stop offset="0.167" stop-color="#ffc2e7"/><stop offset="0.333" stop-color="#ff90d5"/><stop offset="0.5" stop-color="#ff65c6"/><stop offset="0.667" stop-color="#ff3eb9"/><stop offset="0.833" stop-color="#ff18af"/><stop offset="1" stop-color="#ff00a6"/></linearGradient><linearGradient id="g261" gradientUnits="userSpaceOnUse" x1="871.6" y1="485.6" x2="930.3" y2="624.4"><stop offset="0" stop-color="#ffffff"/><stop offset="0.167" stop-color="#ffc3e9"/><stop offset="0.333" stop-color="#ff91d8"/><stop offset="0.5" stop-color="#ff65ca"/><stop offset="0.667" stop-color="#ff3ebf"/><stop offset="0.833" stop-color="#ff18b5"/><stop offset="1" stop-color="#ff00ad"/></linearGradient><linearGradient id="g262" gradientUnits="userSpaceOnUse" x1="871.6" y1="485.6" x2="930.3" y2="624.4"><stop offset="0" stop-color="#ffffff"/><stop offset="0.167" stop-color="#ffc4eb"/><stop offset="0.333" stop-color="#ff92dc"/><stop offset="0.5" stop-color="#ff66cf"/><stop offset="0.667" stop-color="#ff3fc4"/><stop offset="0.833" stop-color="#ff18bb"/><stop offset="1" stop-color="#ff00b4"/></linearGradient><linearGradient id="g263" gradientUnits="userSpaceOnUse" x1="871.6" y1="485.6" x2="930.3" y2="624.4"><stop offset="0" stop-color="#ffffff"/><stop offset="0.167" stop-color="#ffc5ee"/><stop offset="0.333" stop-color="#ff93e0"/><stop offset="0.5" stop-color="#ff67d4"/><stop offset="0.667" stop-color="#ff3fca"/><stop offset="0.833" stop-color="#ff18c2"/><stop offset="1" stop-color="#ff00bb"/></linearGradient><linearGradient id="g264" gradientUnits="userSpaceOnUse" x1="871.6" y1="485.6" x2="930.3" y2="624.4"><stop offset="0" stop-color="#ffffff"/><stop offset="0.167" stop-color="#ffc6f0"/><stop offset="0.333" stop-color="#ff94e3"/><stop offset="0.5" stop-color="#ff68d9"/><stop offset="0.667" stop-color="#ff40d0"/><stop offset="0.833" stop-color="#ff18c9"/><stop offset="1" stop-color="#ff00c3"/></linearGradient><linearGradient id="g265" gradientUnits="userSpaceOnUse" x1="871.6" y1="485.6" x2="930.3" y2="624.4"><stop offset="0" stop-color="#ffffff"/><stop offset="0.167" stop-color="#ffc6f2"/><stop offset="0.333" stop-color="#ff95e7"/><stop offset="0.5" stop-color="#ff6ade"/><stop offset="0.667" stop-color="#ff41d7"/><stop offset="0.833" stop-color="#ff17d0"/><stop offset="1" stop-color="#ff00ca"/></linearGradient><linearGradient id="g266" gradientUnits="userSpaceOnUse" x1="871.6" y1="485.6" x2="930.3" y2="624.4"><stop offset="0" stop-color="#ffffff"/><stop offset="0.167" stop-color="#ffc7f4"/><stop offset="0.333" stop-color="#ff97eb"/><stop offset="0.5" stop-color="#ff6be4"/><stop offset="0.667" stop-color="#ff41dd"/><stop offset="0.833" stop-color="#ff17d8"/><stop offset="1" stop-color="#ff00d3"/></linearGradient><linearGradient id="g267" gradientUnits="userSpaceOnUse" x1="871.6" y1="485.6" x2="930.3" y2="624.4"><stop offset="0" stop-color="#ffffff"/><stop offset="0.167" stop-color="#ffc8f6"/><stop offset="0.333" stop-color="#ff98ef"/><stop offset="0.5" stop-color="#ff6ce9"/><stop offset="0.667" stop-color="#ff42e4"/><stop offset="0.833" stop-color="#ff17df"/><stop offset="1" stop-color="#ff00db"/></linearGradient><linearGradient id="g268" gradientUnits="userSpaceOnUse" x1="871.6" y1="485.6" x2="930.3" y2="624.4"><stop offset="0" stop-color="#ffffff"/><stop offset="0.167" stop-color="#ffc9f9"/><stop offset="0.333" stop-color="#ff99f3"/><stop offset="0.5" stop-color="#ff6def"/><stop offset="0.667" stop-color="#ff43eb"/><stop offset="0.833" stop-color="#ff17e7"/><stop offset="1" stop-color="#ff00e4"/></linearGradient><linearGradient id="g269" gradientUnits="userSpaceOnUse" x1="871.6" y1="485.6" x2="930.3" y2="624.4"><stop offset="0" stop-color="#ffffff"/><stop offset="0.167" stop-color="#ffcafb"/><stop offset="0.333" stop-color="#ff9af7"/><stop offset="0.5" stop-color="#ff6ef4"/><stop offset="0.667" stop-color="#ff44f2"/><stop offset="0.833" stop-color="#ff17f0"/><stop offset="1" stop-color="#ff00ed"/></linearGradient><linearGradient id="g270" gradientUnits="userSpaceOnUse" x1="871.6" y1="485.6" x2="930.3" y2="624.4"><stop offset="0" stop-color="#ffffff"/><stop offset="0.167" stop-color="#ffcbfd"/><stop offset="0.333" stop-color="#ff9cfc"/><stop offset="0.5" stop-color="#ff6ffa"/><stop offset="0.667" stop-color="#ff44f9"/><stop offset="0.833" stop-color="#ff17f8"/><stop offset="1" stop-color="#ff00f7"/></linearGradient><linearGradient id="g271" gradientUnits="userSpaceOnUse" x1="871.6" y1="485.6" x2="930.3" y2="624.4"><stop offset="0" stop-color="#ffffff"/><stop offset="0.167" stop-color="#feccff"/><stop offset="0.333" stop-color="#fe9dff"/><stop offset="0.5" stop-color="#fe70ff"/><stop offset="0.667" stop-color="#fd45ff"/><stop offset="0.833" stop-color="#fd17ff"/><stop offset="1" stop-color="#fd00ff"/></linearGradient><linearGradient id="g272" gradientUnits="userSpaceOnUse" x1="871.6" y1="485.6" x2="930.3" y2="624.4"><stop offset="0" stop-color="#ffffff"/><stop offset="0.167" stop-color="#fccbff"/><stop offset="0.333" stop-color="#fa9bff"/><stop offset="0.5" stop-color="#f86fff"/><stop offset="0.667" stop-color="#f643ff"/><stop offset="0.833" stop-color="#f416ff"/><stop offset="1" stop-color="#f200ff"/></linearGradient><linearGradient id="g273" gradientUnits="userSpaceOnUse" x1="871.6" y1="485.6" x2="930.3" y2="624.4"><stop offset="0" stop-color="#ffffff"/><stop offset="0.167" stop-color="#facaff"/><stop offset="0.333" stop-color="#f59aff"/><stop offset="0.5" stop-color="#f26dff"/><stop offset="0.667" stop-color="#ee42ff"/><stop offset="0.833" stop-color="#eb15ff"/><stop offset="1" stop-color="#e900ff"/></linearGradient><linearGradient id="g274" gradientUnits="userSpaceOnUse" x1="871.6" y1="485.6" x2="930.3" y2="624.4"><stop offset="0" stop-color="#ffffff"/><stop offset="0.167" stop-color="#f8c9ff"/><stop offset="0.333" stop-color="#f199ff"/><stop offset="0.5" stop-color="#ec6cff"/><stop offset="0.667" stop-color="#e741ff"/><stop offset="0.833" stop-color="#e314ff"/><stop offset="1" stop-color="#df00ff"/></linearGradient><linearGradient id="g275" gradientUnits="userSpaceOnUse" x1="871.6" y1="485.6" x2="930.3" y2="624.4"><stop offset="0" stop-color="#ffffff"/><stop offset="0.167" stop-color="#f5c8ff"/><stop offset="0.333" stop-color="#ed97ff"/><stop offset="0.5" stop-color="#e66bff"/><stop offset="0.667" stop-color="#e040ff"/><stop offset="0.833" stop-color="#db13ff"/><stop offset="1" stop-color="#d600ff"/></linearGradient><linearGradient id="g276" gradientUnits="userSpaceOnUse" x1="871.6" y1="485.6" x2="930.3" y2="624.4"><stop offset="0" stop-color="#ffffff"/><stop offset="0.167" stop-color="#f3c7ff"/><stop offset="0.333" stop-color="#e996ff"/><stop offset="0.5" stop-color="#e069ff"/><stop offset="0.667" stop-color="#d93fff"/><stop offset="0.833" stop-color="#d312ff"/><stop offset="1" stop-color="#cd00ff"/></linearGradient><linearGradient id="g277" gradientUnits="userSpaceOnUse" x1="871.6" y1="485.6" x2="930.3" y2="624.4"><stop offset="0" stop-color="#ffffff"/><stop offset="0.167" stop-color="#f1c7ff"/><stop offset="0.333" stop-color="#e595ff"/><stop offset="0.5" stop-color="#db68ff"/><stop offset="0.667" stop-color="#d23eff"/><stop offset="0.833" stop-color="#cb12ff"/><stop offset="1" stop-color="#c400ff"/></linearGradient><linearGradient id="g278" gradientUnits="userSpaceOnUse" x1="871.6" y1="485.6" x2="930.3" y2="624.4"><stop offset="0" stop-color="#ffffff"/><stop offset="0.167" stop-color="#efc6ff"/><stop offset="0.333" stop-color="#e194ff"/><stop offset="0.5" stop-color="#d567ff"/><stop offset="0.667" stop-color="#cc3dff"/><stop offset="0.833" stop-color="#c311ff"/><stop offset="1" stop-color="#bc00ff"/></linearGradient><linearGradient id="g279" gradientUnits="userSpaceOnUse" x1="871.6" y1="485.6" x2="930.3" y2="624.4"><stop offset="0" stop-color="#ffffff"/><stop offset="0.167" stop-color="#ecc5ff"/><stop offset="0.333" stop-color="#dd93ff"/><stop offset="0.5" stop-color="#d066ff"/><stop offset="0.667" stop-color="#c53cff"/><stop offset="0.833" stop-color="#bc10ff"/><stop offset="1" stop-color="#b400ff"/></linearGradient><linearGradient id="g280" gradientUnits="userSpaceOnUse" x1="871.6" y1="485.6" x2="930.3" y2="624.4"><stop offset="0" stop-color="#ffffff"/><stop offset="0.167" stop-color="#eac4ff"/><stop offset="0.333" stop-color="#d992ff"/><stop offset="0.5" stop-color="#cb65ff"/><stop offset="0.667" stop-color="#bf3bff"/><stop offset="0.833" stop-color="#b50fff"/><stop offset="1" stop-color="#ac00ff"/></linearGradient><linearGradient id="g281" gradientUnits="userSpaceOnUse" x1="871.6" y1="485.6" x2="930.3" y2="624.4"><stop offset="0" stop-color="#ffffff"/><stop offset="0.167" stop-color="#e8c3ff"/><stop offset="0.333" stop-color="#d590ff"/><stop offset="0.5" stop-color="#c663ff"/><stop offset="0.667" stop-color="#b93aff"/><stop offset="0.833" stop-color="#ad0fff"/><stop offset="1" stop-color="#a400ff"/></linearGradient><linearGradient id="g282" gradientUnits="userSpaceOnUse" x1="871.6" y1="485.6" x2="930.3" y2="624.4"><stop offset="0" stop-color="#ffffff"/><stop offset="0.167" stop-color="#e6c3ff"/><stop offset="0.333" stop-color="#d28fff"/><stop offset="0.5" stop-color="#c162ff"/><stop offset="0.667" stop-color="#b339ff"/><stop offset="0.833" stop-color="#a60eff"/><stop offset="1" stop-color="#9c00ff"/></linearGradient><linearGradient id="g283" gradientUnits="userSpaceOnUse" x1="871.6" y1="485.6" x2="930.3" y2="624.4"><stop offset="0" stop-color="#ffffff"/><stop offset="0.167" stop-color="#e4c2ff"/><stop offset="0.333" stop-color="#ce8eff"/><stop offset="0.5" stop-color="#bc61ff"/><stop offset="0.667" stop-color="#ad38ff"/><stop offset="0.833" stop-color="#a00dff"/><stop offset="1" stop-color="#9500ff"/></linearGradient><linearGradient id="g284" gradientUnits="userSpaceOnUse" x1="871.6" y1="485.6" x2="930.3" y2="624.4"><stop offset="0" stop-color="#ffffff"/><stop offset="0.167" stop-color="#e2c1ff"/><stop offset="0.333" stop-color="#ca8dff"/><stop offset="0.5" stop-color="#b760ff"/><stop offset="0.667" stop-color="#a737ff"/><stop offset="0.833" stop-color="#990cff"/><stop offset="1" stop-color="#8d00ff"/></linearGradient><linearGradient id="g285" gradientUnits="userSpaceOnUse" x1="871.6" y1="485.6" x2="930.3" y2="624.4"><stop offset="0" stop-color="#ffffff"/><stop offset="0.167" stop-color="#dfc0ff"/><stop offset="0.333" stop-color="#c68cff"/><stop offset="0.5" stop-color="#b25fff"/><stop offset="0.667" stop-color="#a136ff"/><stop offset="0.833" stop-color="#920cff"/><stop offset="1" stop-color="#8600ff"/></linearGradient><linearGradient id="g286" gradientUnits="userSpaceOnUse" x1="871.6" y1="485.6" x2="930.3" y2="624.4"><stop offset="0" stop-color="#ffffff"/><stop offset="0.167" stop-color="#ddbfff"/><stop offset="0.333" stop-color="#c38bff"/><stop offset="0.5" stop-color="#ad5eff"/><stop offset="0.667" stop-color="#9b35ff"/><stop offset="0.833" stop-color="#8c0bff"/><stop offset="1" stop-color="#7f00ff"/></linearGradient><linearGradient id="g287" gradientUnits="userSpaceOnUse" x1="871.6" y1="485.6" x2="930.3" y2="624.4"><stop offset="0" stop-color="#ffffff"/><stop offset="0.167" stop-color="#dbbfff"/><stop offset="0.333" stop-color="#bf8aff"/><stop offset="0.5" stop-color="#a95dff"/><stop offset="0.667" stop-color="#9634ff"/><stop offset="0.833" stop-color="#860aff"/><stop offset="1" stop-color="#7800ff"/></linearGradient><linearGradient id="g288" gradientUnits="userSpaceOnUse" x1="871.6" y1="485.6" x2="930.3" y2="624.4"><stop offset="0" stop-color="#ffffff"/><stop offset="0.167" stop-color="#d9beff"/><stop offset="0.333" stop-color="#bc89ff"/><stop offset="0.5" stop-color="#a45cff"/><stop offset="0.667" stop-color="#9033ff"/><stop offset="0.833" stop-color="#800aff"/><stop offset="1" stop-color="#7100ff"/></linearGradient><linearGradient id="g289" gradientUnits="userSpaceOnUse" x1="871.6" y1="485.6" x2="930.3" y2="624.4"><stop offset="0" stop-color="#ffffff"/><stop offset="0.167" stop-color="#d7bdff"/><stop offset="0.333" stop-color="#b888ff"/><stop offset="0.5" stop-color="#9f5bff"/><stop offset="0.667" stop-color="#8b33ff"/><stop offset="0.833" stop-color="#7909ff"/><stop offset="1" stop-color="#6b00ff"/></linearGradient><linearGradient id="g290" gradientUnits="userSpaceOnUse" x1="871.6" y1="485.6" x2="930.3" y2="624.4"><stop offset="0" stop-color="#ffffff"/><stop offset="0.167" stop-color="#d5bcff"/><stop offset="0.333" stop-color="#b587ff"/><stop offset="0.5" stop-color="#9b5aff"/><stop offset="0.667" stop-color="#8532ff"/><stop offset="0.833" stop-color="#7308ff"/><stop offset="1" stop-color="#6400ff"/></linearGradient><linearGradient id="g291" gradientUnits="userSpaceOnUse" x1="871.6" y1="485.6" x2="930.3" y2="624.4"><stop offset="0" stop-color="#ffffff"/><stop offset="0.167" stop-color="#d3bcff"/><stop offset="0.333" stop-color="#b186ff"/><stop offset="0.5" stop-color="#9659ff"/><stop offset="0.667" stop-color="#8031ff"/><stop offset="0.833" stop-color="#6e08ff"/><stop offset="1" stop-color="#5e00ff"/></linearGradient><linearGradient id="g292" gradientUnits="userSpaceOnUse" x1="871.6" y1="485.6" x2="930.3" y2="624.4"><stop offset="0" stop-color="#ffffff"/><stop offset="0.167" stop-color="#d1bbff"/><stop offset="0.333" stop-color="#ae85ff"/><stop offset="0.5" stop-color="#9258ff"/><stop offset="0.667" stop-color="#7b30ff"/><stop offset="0.833" stop-color="#6807ff"/><stop offset="1" stop-color="#5700ff"/></linearGradient><linearGradient id="g293" gradientUnits="userSpaceOnUse" x1="871.6" y1="485.6" x2="930.3" y2="624.4"><stop offset="0" stop-color="#ffffff"/><stop offset="0.167" stop-color="#cfbaff"/><stop offset="0.333" stop-color="#ab84ff"/><stop offset="0.5" stop-color="#8e57ff"/><stop offset="0.667" stop-color="#762fff"/><stop offset="0.833" stop-color="#6207ff"/><stop offset="1" stop-color="#5100ff"/></linearGradient><linearGradient id="g294" gradientUnits="userSpaceOnUse" x1="871.6" y1="485.6" x2="930.3" y2="624.4"><stop offset="0" stop-color="#ffffff"/><stop offset="0.167" stop-color="#cdb9ff"/><stop offset="0.333" stop-color="#a783ff"/><stop offset="0.5" stop-color="#8956ff"/><stop offset="0.667" stop-color="#712fff"/><stop offset="0.833" stop-color="#5c06ff"/><stop offset="1" stop-color="#4b00ff"/></linearGradient><linearGradient id="g295" gradientUnits="userSpaceOnUse" x1="871.6" y1="485.6" x2="930.3" y2="624.4"><stop offset="0" stop-color="#ffffff"/><stop offset="0.167" stop-color="#cbb9ff"/><stop offset="0.333" stop-color="#a482ff"/><stop offset="0.5" stop-color="#8555ff"/><stop offset="0.667" stop-color="#6c2eff"/><stop offset="0.833" stop-color="#5705ff"/><stop offset="1" stop-color="#4400ff"/></linearGradient><linearGradient id="g296" gradientUnits="userSpaceOnUse" x1="871.6" y1="485.6" x2="930.3" y2="624.4"><stop offset="0" stop-color="#ffffff"/><stop offset="0.167" stop-color="#c9b8ff"/><stop offset="0.333" stop-color="#a181ff"/><stop offset="0.5" stop-color="#8155ff"/><stop offset="0.667" stop-color="#672dff"/><stop offset="0.833" stop-color="#5105ff"/><stop offset="1" stop-color="#3e00ff"/></linearGradient><linearGradient id="g297" gradientUnits="userSpaceOnUse" x1="871.6" y1="485.6" x2="930.3" y2="624.4"><stop offset="0" stop-color="#ffffff"/><stop offset="0.167" stop-color="#c7b7ff"/><stop offset="0.333" stop-color="#9d80ff"/><stop offset="0.5" stop-color="#7d54ff"/><stop offset="0.667" stop-color="#622dff"/><stop offset="0.833" stop-color="#4c04ff"/><stop offset="1" stop-color="#3800ff"/></linearGradient><linearGradient id="g298" gradientUnits="userSpaceOnUse" x1="871.6" y1="485.6" x2="930.3" y2="624.4"><stop offset="0" stop-color="#ffffff"/><stop offset="0.167" stop-color="#c5b6ff"/><stop offset="0.333" stop-color="#9a7fff"/><stop offset="0.5" stop-color="#7953ff"/><stop offset="0.667" stop-color="#5d2cff"/><stop offset="0.833" stop-color="#4603ff"/><stop offset="1" stop-color="#3200ff"/></linearGradient><linearGradient id="g299" gradientUnits="userSpaceOnUse" x1="871.6" y1="485.6" x2="930.3" y2="624.4"><stop offset="0" stop-color="#ffffff"/><stop offset="0.167" stop-color="#c3b6ff"/><stop offset="0.333" stop-color="#977fff"/><stop offset="0.5" stop-color="#7552ff"/><stop offset="0.667" stop-color="#592bff"/><stop offset="0.833" stop-color="#4103ff"/><stop offset="1" stop-color="#2c00ff"/></linearGradient><linearGradient id="g300" gradientUnits="userSpaceOnUse" x1="871.6" y1="485.6" x2="930.3" y2="624.4"><stop offset="0" stop-color="#ffffff"/><stop offset="0.167" stop-color="#c1b5ff"/><stop offset="0.333" stop-color="#947eff"/><stop offset="0.5" stop-color="#7151ff"/><stop offset="0.667" stop-color="#542bff"/><stop offset="0.833" stop-color="#3b02ff"/><stop offset="1" stop-color="#2500ff"/></linearGradient>
<radialGradient id="glow"><stop offset="0" stop-color="#fff" stop-opacity=".8"/><stop offset=".35" stop-color="#fff" stop-opacity=".45"/><stop offset="1" stop-color="#fff" stop-opacity="0"/></radialGradient>
</defs><rect x="659" y="139" width="551.3" height="551.3" fill="#000"/><g clip-path="url(#pc)"><g>
<path d="M871.6 485.6L772.0 698.0L741.9 670.2Z" fill="url(#b0)"/><path d="M871.6 485.6L750.4 681.8L726.3 644.0Z" fill="url(#b1)"/><path d="M871.6 485.6L733.5 658.6L713.1 614.4Z" fill="url(#b2)"/><path d="M871.6 485.6L719.1 629.3L701.7 584.6Z" fill="url(#b3)"/><path d="M871.6 485.6L707.1 599.4L691.7 552.8Z" fill="url(#b4)"/><path d="M871.6 485.6L696.3 569.7L682.8 519.2Z" fill="url(#b5)"/><path d="M871.6 485.6L687.1 536.0L675.0 485.8Z" fill="url(#b6)"/><path d="M871.6 485.6L678.4 502.4L668.3 452.8Z" fill="url(#b7)"/><path d="M871.6 485.6L671.6 469.3L662.5 419.8Z" fill="url(#b8)"/><path d="M871.6 485.6L664.9 436.2L657.9 386.8Z" fill="url(#b9)"/><path d="M871.6 485.6L660.1 403.3L654.0 353.5Z" fill="url(#b10)"/><path d="M871.6 485.6L655.7 370.3L651.6 319.0Z" fill="url(#b11)"/><path d="M871.6 485.6L652.3 336.6L650.6 283.9Z" fill="url(#b12)"/><path d="M871.6 485.6L650.9 301.4L652.3 249.3Z" fill="url(#b13)"/><path d="M871.6 485.6L650.3 266.4L657.8 215.8Z" fill="url(#b14)"/><path d="M871.6 485.6L654.3 232.2L668.1 184.2Z" fill="url(#b15)"/><path d="M871.6 485.6L661.4 199.4L687.6 161.8Z" fill="url(#b16)"/><path d="M871.6 485.6L674.8 169.0L714.6 157.2Z" fill="url(#b17)"/><path d="M871.6 485.6L700.3 154.7L743.5 166.3Z" fill="url(#b18)"/><path d="M871.6 485.6L728.9 159.7L771.8 181.0Z" fill="url(#b19)"/><path d="M871.6 485.6L758.0 173.0L798.7 197.9Z" fill="url(#b20)"/><path d="M871.6 485.6L785.5 188.9L824.9 216.6Z" fill="url(#b21)"/><path d="M871.6 485.6L811.9 206.8L850.7 237.0Z" fill="url(#b22)"/><path d="M871.6 485.6L837.9 226.5L876.4 258.4Z" fill="url(#b23)"/><path d="M871.6 485.6L863.6 247.5L902.1 280.6Z" fill="url(#b24)"/><path d="M871.6 485.6L889.2 269.3L927.7 303.3Z" fill="url(#b25)"/><path d="M871.6 485.6L915.0 291.9L953.3 326.2Z" fill="url(#b26)"/><path d="M871.6 485.6L940.5 314.8L978.4 349.0Z" fill="url(#b27)"/><path d="M871.6 485.6L966.0 337.7L1003.0 371.3Z" fill="url(#b28)"/><path d="M871.6 485.6L990.9 360.3L1026.7 392.8Z" fill="url(#b29)"/><path d="M871.6 485.6L1015.1 382.3L1049.2 413.3Z" fill="url(#b30)"/><path d="M871.6 485.6L1038.3 403.4L1071.8 433.8Z" fill="url(#b31)"/><path d="M871.6 485.6L1060.2 423.2L1094.3 454.3Z" fill="url(#b32)"/><path d="M871.6 485.6L1083.5 444.5L1116.8 474.7Z" fill="url(#b33)"/><path d="M871.6 485.6L1105.0 464.0L1139.5 495.3Z" fill="url(#b34)"/><path d="M871.6 485.6L1128.7 485.4L1158.1 512.2Z" fill="url(#b35)"/><path d="M871.6 485.6L1150.3 505.1L1162.4 526.7Z" fill="url(#b36)"/><path d="M871.6 485.6L1166.0 519.4L1143.0 540.8Z" fill="url(#b37)"/><path d="M871.6 485.6L1158.9 534.1L1111.2 554.3Z" fill="url(#b38)"/><path d="M871.6 485.6L1127.1 547.6L1079.4 567.8Z" fill="url(#b39)"/><path d="M871.6 485.6L1095.3 561.0L1047.6 581.2Z" fill="url(#b40)"/><path d="M871.6 485.6L1063.5 574.5L1015.8 594.7Z" fill="url(#b41)"/><path d="M871.6 485.6L1031.7 588.0L984.0 608.2Z" fill="url(#b42)"/><path d="M871.6 485.6L999.9 601.4L952.2 621.7Z" fill="url(#b43)"/><path d="M871.6 485.6L968.1 614.9L920.4 635.1Z" fill="url(#b44)"/><path d="M871.6 485.6L936.3 628.4L888.6 648.6Z" fill="url(#b45)"/><path d="M871.6 485.6L904.5 641.9L856.8 662.1Z" fill="url(#b46)"/><path d="M871.6 485.6L872.7 655.3L825.0 675.5Z" fill="url(#b47)"/><path d="M871.6 485.6L840.9 668.8L793.2 689.0Z" fill="url(#b48)"/><path d="M871.6 485.6L809.1 682.3L774.6 696.9Z" fill="url(#b49)"/><path d="M871.6 485.6L777.3 695.7L761.2 689.9Z" fill="url(#b50)"/>
<g shape-rendering="crispEdges">
<path d="M871.6 485.6L772.0 698.0L765.3 694.4Z" fill="url(#g0)"/><path d="M871.6 485.6L766.8 695.6L761.4 691.2Z" fill="url(#g1)"/><path d="M871.6 485.6L762.6 692.2L757.7 688.3Z" fill="url(#g2)"/><path d="M871.6 485.6L759.0 689.3L754.5 685.6Z" fill="url(#g3)"/><path d="M871.6 485.6L755.4 686.4L752.0 683.3Z" fill="url(#g4)"/><path d="M871.6 485.6L752.9 684.1L749.3 680.6Z" fill="url(#g5)"/><path d="M871.6 485.6L750.4 681.8L746.2 677.3Z" fill="url(#g6)"/><path d="M871.6 485.6L747.3 678.5L743.3 673.7Z" fill="url(#g7)"/><path d="M871.6 485.6L744.2 675.1L740.6 669.8Z" fill="url(#g8)"/><path d="M871.6 485.6L741.5 671.2L737.8 665.9Z" fill="url(#g9)"/><path d="M871.6 485.6L738.8 667.3L735.1 661.7Z" fill="url(#g10)"/><path d="M871.6 485.6L736.1 663.4L732.5 657.0Z" fill="url(#g11)"/><path d="M871.6 485.6L733.5 658.6L729.9 652.2Z" fill="url(#g12)"/><path d="M871.6 485.6L730.8 653.9L727.3 647.5Z" fill="url(#g13)"/><path d="M871.6 485.6L728.2 649.1L724.9 642.6Z" fill="url(#g14)"/><path d="M871.6 485.6L725.6 644.4L722.7 637.6Z" fill="url(#g15)"/><path d="M871.6 485.6L723.4 639.4L720.5 632.6Z" fill="url(#g16)"/><path d="M871.6 485.6L721.3 634.3L718.3 627.6Z" fill="url(#g17)"/><path d="M871.6 485.6L719.1 629.3L716.1 622.6Z" fill="url(#g18)"/><path d="M871.6 485.6L716.9 624.3L713.9 617.5Z" fill="url(#g19)"/><path d="M871.6 485.6L714.7 619.3L711.9 612.5Z" fill="url(#g20)"/><path d="M871.6 485.6L712.5 614.3L710.1 607.6Z" fill="url(#g21)"/><path d="M871.6 485.6L710.7 609.3L708.3 602.6Z" fill="url(#g22)"/><path d="M871.6 485.6L708.9 604.4L706.4 597.7Z" fill="url(#g23)"/><path d="M871.6 485.6L707.1 599.4L704.6 592.7Z" fill="url(#g24)"/><path d="M871.6 485.6L705.3 594.5L702.8 587.8Z" fill="url(#g25)"/><path d="M871.6 485.6L703.5 589.5L701.0 582.8Z" fill="url(#g26)"/><path d="M871.6 485.6L701.7 584.6L699.2 577.9Z" fill="url(#g27)"/><path d="M871.6 485.6L699.9 579.6L697.4 572.9Z" fill="url(#g28)"/><path d="M871.6 485.6L698.1 574.7L695.7 567.7Z" fill="url(#g29)"/><path d="M871.6 485.6L696.3 569.7L694.2 562.1Z" fill="url(#g30)"/><path d="M871.6 485.6L694.7 564.1L692.7 556.5Z" fill="url(#g31)"/><path d="M871.6 485.6L693.2 558.5L691.2 550.9Z" fill="url(#g32)"/><path d="M871.6 485.6L691.7 552.8L689.6 545.3Z" fill="url(#g33)"/><path d="M871.6 485.6L690.2 547.2L688.1 539.6Z" fill="url(#g34)"/><path d="M871.6 485.6L688.6 541.6L686.6 534.0Z" fill="url(#g35)"/><path d="M871.6 485.6L687.1 536.0L685.1 528.4Z" fill="url(#g36)"/><path d="M871.6 485.6L685.6 530.4L683.5 522.8Z" fill="url(#g37)"/><path d="M871.6 485.6L684.1 524.7L682.0 517.2Z" fill="url(#g38)"/><path d="M871.6 485.6L682.6 519.1L680.5 511.5Z" fill="url(#g39)"/><path d="M871.6 485.6L681.0 513.5L679.1 506.0Z" fill="url(#g40)"/><path d="M871.6 485.6L679.5 507.9L678.0 500.4Z" fill="url(#g41)"/><path d="M871.6 485.6L678.4 502.4L676.9 494.9Z" fill="url(#g42)"/><path d="M871.6 485.6L677.3 496.9L675.7 489.4Z" fill="url(#g43)"/><path d="M871.6 485.6L676.1 491.4L674.6 483.9Z" fill="url(#g44)"/><path d="M871.6 485.6L675.0 485.8L673.5 478.4Z" fill="url(#g45)"/><path d="M871.6 485.6L673.9 480.3L672.4 472.9Z" fill="url(#g46)"/><path d="M871.6 485.6L672.8 474.8L671.3 467.4Z" fill="url(#g47)"/><path d="M871.6 485.6L671.6 469.3L670.1 461.9Z" fill="url(#g48)"/><path d="M871.6 485.6L670.5 463.8L669.0 456.4Z" fill="url(#g49)"/><path d="M871.6 485.6L669.4 458.3L667.9 450.9Z" fill="url(#g50)"/><path d="M871.6 485.6L668.3 452.8L666.8 445.3Z" fill="url(#g51)"/><path d="M871.6 485.6L667.2 447.3L665.6 439.8Z" fill="url(#g52)"/><path d="M871.6 485.6L666.0 441.8L664.5 434.3Z" fill="url(#g53)"/><path d="M871.6 485.6L664.9 436.2L663.5 428.8Z" fill="url(#g54)"/><path d="M871.6 485.6L663.8 430.7L662.8 423.3Z" fill="url(#g55)"/><path d="M871.6 485.6L663.0 425.2L662.1 417.8Z" fill="url(#g56)"/><path d="M871.6 485.6L662.3 419.7L661.3 412.3Z" fill="url(#g57)"/><path d="M871.6 485.6L661.6 414.3L660.6 406.8Z" fill="url(#g58)"/><path d="M871.6 485.6L660.8 408.8L659.9 401.3Z" fill="url(#g59)"/><path d="M871.6 485.6L660.1 403.3L659.1 395.9Z" fill="url(#g60)"/><path d="M871.6 485.6L659.4 397.8L658.4 390.4Z" fill="url(#g61)"/><path d="M871.6 485.6L658.6 392.3L657.7 384.9Z" fill="url(#g62)"/><path d="M871.6 485.6L657.9 386.8L656.9 379.4Z" fill="url(#g63)"/><path d="M871.6 485.6L657.2 381.3L656.2 373.9Z" fill="url(#g64)"/><path d="M871.6 485.6L656.5 375.8L655.5 368.4Z" fill="url(#g65)"/><path d="M871.6 485.6L655.7 370.3L654.7 362.9Z" fill="url(#g66)"/><path d="M871.6 485.6L655.0 364.8L654.0 357.4Z" fill="url(#g67)"/><path d="M871.6 485.6L654.3 359.3L653.3 351.9Z" fill="url(#g68)"/><path d="M871.6 485.6L653.5 353.8L652.7 346.3Z" fill="url(#g69)"/><path d="M871.6 485.6L652.8 348.3L652.5 340.4Z" fill="url(#g70)"/><path d="M871.6 485.6L652.5 342.5L652.2 334.5Z" fill="url(#g71)"/><path d="M871.6 485.6L652.3 336.6L652.0 328.7Z" fill="url(#g72)"/><path d="M871.6 485.6L652.1 330.7L651.8 322.8Z" fill="url(#g73)"/><path d="M871.6 485.6L651.8 324.9L651.5 316.9Z" fill="url(#g74)"/><path d="M871.6 485.6L651.6 319.0L651.3 311.1Z" fill="url(#g75)"/><path d="M871.6 485.6L651.4 313.1L651.0 305.2Z" fill="url(#g76)"/><path d="M871.6 485.6L651.1 307.3L650.8 299.3Z" fill="url(#g77)"/><path d="M871.6 485.6L650.9 301.4L650.6 293.5Z" fill="url(#g78)"/><path d="M871.6 485.6L650.6 295.5L650.3 287.6Z" fill="url(#g79)"/><path d="M871.6 485.6L650.4 289.6L650.1 281.7Z" fill="url(#g80)"/><path d="M871.6 485.6L650.2 283.8L649.9 275.9Z" fill="url(#g81)"/><path d="M871.6 485.6L649.9 277.9L649.9 270.0Z" fill="url(#g82)"/><path d="M871.6 485.6L649.7 272.0L650.6 264.4Z" fill="url(#g83)"/><path d="M871.6 485.6L650.3 266.4L651.2 258.7Z" fill="url(#g84)"/><path d="M871.6 485.6L651.0 260.7L651.9 253.0Z" fill="url(#g85)"/><path d="M871.6 485.6L651.7 255.0L652.5 247.3Z" fill="url(#g86)"/><path d="M871.6 485.6L652.3 249.3L653.2 241.6Z" fill="url(#g87)"/><path d="M871.6 485.6L653.0 243.6L653.8 235.9Z" fill="url(#g88)"/><path d="M871.6 485.6L653.6 237.9L654.5 230.3Z" fill="url(#g89)"/><path d="M871.6 485.6L654.3 232.2L655.2 224.6Z" fill="url(#g90)"/><path d="M871.6 485.6L654.9 226.6L655.8 218.9Z" fill="url(#g91)"/><path d="M871.6 485.6L655.6 220.9L656.5 213.2Z" fill="url(#g92)"/><path d="M871.6 485.6L656.2 215.2L657.7 207.7Z" fill="url(#g93)"/><path d="M871.6 485.6L656.9 209.5L659.9 202.7Z" fill="url(#g94)"/><path d="M871.6 485.6L659.1 204.4L662.2 197.6Z" fill="url(#g95)"/><path d="M871.6 485.6L661.4 199.4L664.4 192.5Z" fill="url(#g96)"/><path d="M871.6 485.6L663.6 194.3L666.6 187.5Z" fill="url(#g97)"/><path d="M871.6 485.6L665.9 189.2L668.9 182.4Z" fill="url(#g98)"/><path d="M871.6 485.6L668.1 184.2L671.1 177.3Z" fill="url(#g99)"/><path d="M871.6 485.6L670.4 179.1L673.4 172.3Z" fill="url(#g100)"/><path d="M871.6 485.6L672.6 174.1L676.3 168.2Z" fill="url(#g101)"/><path d="M871.6 485.6L674.8 169.0L680.6 165.8Z" fill="url(#g102)"/><path d="M871.6 485.6L679.1 166.6L684.8 163.4Z" fill="url(#g103)"/><path d="M871.6 485.6L683.3 164.2L689.0 161.0Z" fill="url(#g104)"/><path d="M871.6 485.6L687.6 161.8L693.3 158.6Z" fill="url(#g105)"/><path d="M871.6 485.6L691.8 159.5L697.5 156.2Z" fill="url(#g106)"/><path d="M871.6 485.6L696.0 157.1L701.9 155.0Z" fill="url(#g107)"/><path d="M871.6 485.6L700.3 154.7L706.7 155.8Z" fill="url(#g108)"/><path d="M871.6 485.6L705.1 155.5L711.5 156.7Z" fill="url(#g109)"/><path d="M871.6 485.6L709.8 156.4L716.3 157.5Z" fill="url(#g110)"/><path d="M871.6 485.6L714.6 157.2L721.1 158.3Z" fill="url(#g111)"/><path d="M871.6 485.6L719.4 158.0L725.8 159.1Z" fill="url(#g112)"/><path d="M871.6 485.6L724.2 158.9L730.6 160.5Z" fill="url(#g113)"/><path d="M871.6 485.6L728.9 159.7L735.5 162.7Z" fill="url(#g114)"/><path d="M871.6 485.6L733.8 161.9L740.3 164.9Z" fill="url(#g115)"/><path d="M871.6 485.6L738.6 164.1L745.2 167.1Z" fill="url(#g116)"/><path d="M871.6 485.6L743.5 166.3L750.0 169.3Z" fill="url(#g117)"/><path d="M871.6 485.6L748.3 168.6L754.9 171.5Z" fill="url(#g118)"/><path d="M871.6 485.6L753.2 170.8L759.6 173.9Z" fill="url(#g119)"/><path d="M871.6 485.6L758.0 173.0L764.2 176.6Z" fill="url(#g120)"/><path d="M871.6 485.6L762.6 175.6L768.8 179.2Z" fill="url(#g121)"/><path d="M871.6 485.6L767.2 178.3L773.4 181.9Z" fill="url(#g122)"/><path d="M871.6 485.6L771.8 181.0L777.9 184.5Z" fill="url(#g123)"/><path d="M871.6 485.6L776.3 183.6L782.5 187.2Z" fill="url(#g124)"/><path d="M871.6 485.6L780.9 186.3L787.0 190.0Z" fill="url(#g125)"/><path d="M871.6 485.6L785.5 188.9L791.4 192.9Z" fill="url(#g126)"/><path d="M871.6 485.6L789.9 191.9L795.8 195.9Z" fill="url(#g127)"/><path d="M871.6 485.6L794.3 194.9L800.2 198.9Z" fill="url(#g128)"/><path d="M871.6 485.6L798.7 197.9L804.6 201.9Z" fill="url(#g129)"/><path d="M871.6 485.6L803.1 200.8L809.0 204.9Z" fill="url(#g130)"/><path d="M871.6 485.6L807.5 203.8L813.4 208.0Z" fill="url(#g131)"/><path d="M871.6 485.6L811.9 206.8L817.7 211.2Z" fill="url(#g132)"/><path d="M871.6 485.6L816.2 210.1L822.0 214.5Z" fill="url(#g133)"/><path d="M871.6 485.6L820.5 213.4L826.4 217.8Z" fill="url(#g134)"/><path d="M871.6 485.6L824.9 216.6L830.7 221.1Z" fill="url(#g135)"/><path d="M871.6 485.6L829.2 219.9L835.0 224.3Z" fill="url(#g136)"/><path d="M871.6 485.6L833.5 223.2L839.4 227.7Z" fill="url(#g137)"/><path d="M871.6 485.6L837.9 226.5L843.7 231.2Z" fill="url(#g138)"/><path d="M871.6 485.6L842.2 230.0L847.9 234.7Z" fill="url(#g139)"/><path d="M871.6 485.6L846.4 233.5L852.2 238.2Z" fill="url(#g140)"/><path d="M871.6 485.6L850.7 237.0L856.5 241.7Z" fill="url(#g141)"/><path d="M871.6 485.6L855.0 240.5L860.8 245.2Z" fill="url(#g142)"/><path d="M871.6 485.6L859.3 244.0L865.1 248.7Z" fill="url(#g143)"/><path d="M871.6 485.6L863.6 247.5L869.4 252.4Z" fill="url(#g144)"/><path d="M871.6 485.6L867.9 251.1L873.6 256.0Z" fill="url(#g145)"/><path d="M871.6 485.6L872.1 254.8L877.9 259.7Z" fill="url(#g146)"/><path d="M871.6 485.6L876.4 258.4L882.2 263.3Z" fill="url(#g147)"/><path d="M871.6 485.6L880.7 262.1L886.5 267.0Z" fill="url(#g148)"/><path d="M871.6 485.6L885.0 265.7L890.7 270.7Z" fill="url(#g149)"/><path d="M871.6 485.6L889.2 269.3L895.0 274.4Z" fill="url(#g150)"/><path d="M871.6 485.6L893.5 273.1L899.3 278.2Z" fill="url(#g151)"/><path d="M871.6 485.6L897.8 276.9L903.6 281.9Z" fill="url(#g152)"/><path d="M871.6 485.6L902.1 280.6L907.9 285.7Z" fill="url(#g153)"/><path d="M871.6 485.6L906.4 284.4L912.2 289.5Z" fill="url(#g154)"/><path d="M871.6 485.6L910.7 288.1L916.4 293.2Z" fill="url(#g155)"/><path d="M871.6 485.6L915.0 291.9L920.7 297.0Z" fill="url(#g156)"/><path d="M871.6 485.6L919.2 295.7L925.0 300.9Z" fill="url(#g157)"/><path d="M871.6 485.6L923.5 299.5L929.2 304.7Z" fill="url(#g158)"/><path d="M871.6 485.6L927.7 303.3L933.5 308.5Z" fill="url(#g159)"/><path d="M871.6 485.6L932.0 307.2L937.8 312.3Z" fill="url(#g160)"/><path d="M871.6 485.6L936.3 311.0L942.0 316.1Z" fill="url(#g161)"/><path d="M871.6 485.6L940.5 314.8L946.3 319.9Z" fill="url(#g162)"/><path d="M871.6 485.6L944.8 318.6L950.5 323.7Z" fill="url(#g163)"/><path d="M871.6 485.6L949.0 322.4L954.7 327.5Z" fill="url(#g164)"/><path d="M871.6 485.6L953.3 326.2L959.0 331.4Z" fill="url(#g165)"/><path d="M871.6 485.6L957.5 330.0L963.2 335.2Z" fill="url(#g166)"/><path d="M871.6 485.6L961.7 333.8L967.4 339.0Z" fill="url(#g167)"/><path d="M871.6 485.6L966.0 337.7L971.6 342.7Z" fill="url(#g168)"/><path d="M871.6 485.6L970.1 341.4L975.7 346.5Z" fill="url(#g169)"/><path d="M871.6 485.6L974.3 345.2L979.9 350.3Z" fill="url(#g170)"/><path d="M871.6 485.6L978.4 349.0L984.0 354.0Z" fill="url(#g171)"/><path d="M871.6 485.6L982.6 352.7L988.2 357.8Z" fill="url(#g172)"/><path d="M871.6 485.6L986.7 356.5L992.3 361.6Z" fill="url(#g173)"/><path d="M871.6 485.6L990.9 360.3L996.3 365.2Z" fill="url(#g174)"/><path d="M871.6 485.6L994.9 363.9L1000.4 368.9Z" fill="url(#g175)"/><path d="M871.6 485.6L999.0 367.6L1004.4 372.6Z" fill="url(#g176)"/><path d="M871.6 485.6L1003.0 371.3L1008.5 376.2Z" fill="url(#g177)"/><path d="M871.6 485.6L1007.0 375.0L1012.5 379.9Z" fill="url(#g178)"/><path d="M871.6 485.6L1011.1 378.6L1016.5 383.5Z" fill="url(#g179)"/><path d="M871.6 485.6L1015.1 382.3L1020.3 387.0Z" fill="url(#g180)"/><path d="M871.6 485.6L1019.0 385.8L1024.2 390.6Z" fill="url(#g181)"/><path d="M871.6 485.6L1022.8 389.3L1028.1 394.1Z" fill="url(#g182)"/><path d="M871.6 485.6L1026.7 392.8L1031.9 397.6Z" fill="url(#g183)"/><path d="M871.6 485.6L1030.6 396.4L1035.8 401.1Z" fill="url(#g184)"/><path d="M871.6 485.6L1034.4 399.9L1039.6 404.6Z" fill="url(#g185)"/><path d="M871.6 485.6L1038.3 403.4L1043.2 407.9Z" fill="url(#g186)"/><path d="M871.6 485.6L1042.0 406.7L1046.9 411.2Z" fill="url(#g187)"/><path d="M871.6 485.6L1045.6 410.0L1050.5 414.5Z" fill="url(#g188)"/><path d="M871.6 485.6L1049.2 413.3L1054.2 417.8Z" fill="url(#g189)"/><path d="M871.6 485.6L1052.9 416.6L1057.8 421.1Z" fill="url(#g190)"/><path d="M871.6 485.6L1056.5 419.9L1061.6 424.5Z" fill="url(#g191)"/><path d="M871.6 485.6L1060.2 423.2L1065.5 428.1Z" fill="url(#g192)"/><path d="M871.6 485.6L1064.1 426.8L1069.5 431.7Z" fill="url(#g193)"/><path d="M871.6 485.6L1068.1 430.5L1073.5 435.4Z" fill="url(#g194)"/><path d="M871.6 485.6L1072.1 434.1L1077.5 439.0Z" fill="url(#g195)"/><path d="M871.6 485.6L1076.1 437.7L1081.3 442.5Z" fill="url(#g196)"/><path d="M871.6 485.6L1080.1 441.4L1084.7 445.6Z" fill="url(#g197)"/><path d="M871.6 485.6L1083.5 444.5L1088.2 448.7Z" fill="url(#g198)"/><path d="M871.6 485.6L1087.0 447.6L1091.7 451.9Z" fill="url(#g199)"/><path d="M871.6 485.6L1090.4 450.8L1095.1 455.0Z" fill="url(#g200)"/><path d="M871.6 485.6L1093.9 453.9L1098.7 458.3Z" fill="url(#g201)"/><path d="M871.6 485.6L1097.4 457.1L1102.5 461.8Z" fill="url(#g202)"/><path d="M871.6 485.6L1101.2 460.5L1106.3 465.2Z" fill="url(#g203)"/><path d="M871.6 485.6L1105.0 464.0L1110.1 468.7Z" fill="url(#g204)"/><path d="M871.6 485.6L1108.8 467.5L1114.1 472.2Z" fill="url(#g205)"/><path d="M871.6 485.6L1112.6 470.9L1118.3 476.1Z" fill="url(#g206)"/><path d="M871.6 485.6L1116.8 474.7L1122.5 479.9Z" fill="url(#g207)"/><path d="M871.6 485.6L1121.0 478.5L1126.5 483.4Z" fill="url(#g208)"/><path d="M871.6 485.6L1125.3 482.3L1129.9 486.5Z" fill="url(#g209)"/><path d="M871.6 485.6L1128.7 485.4L1133.3 489.7Z" fill="url(#g210)"/><path d="M871.6 485.6L1132.1 488.6L1137.0 493.0Z" fill="url(#g211)"/><path d="M871.6 485.6L1135.5 491.7L1141.1 496.7Z" fill="url(#g212)"/><path d="M871.6 485.6L1139.6 495.4L1144.9 500.2Z" fill="url(#g213)"/><path d="M871.6 485.6L1143.7 499.2L1148.1 503.2Z" fill="url(#g214)"/><path d="M871.6 485.6L1147.0 502.1L1151.2 505.9Z" fill="url(#g215)"/><path d="M871.6 485.6L1150.3 505.1L1153.8 508.3Z" fill="url(#g216)"/><path d="M871.6 485.6L1152.9 507.5L1156.3 510.6Z" fill="url(#g217)"/><path d="M871.6 485.6L1155.5 509.9L1158.5 512.6Z" fill="url(#g218)"/><path d="M871.6 485.6L1157.7 511.9L1161.1 515.0Z" fill="url(#g219)"/><path d="M871.6 485.6L1159.9 513.9L1164.4 517.9Z" fill="url(#g220)"/><path d="M871.6 485.6L1163.5 517.1L1166.9 520.2Z" fill="url(#g221)"/><path d="M871.6 485.6L1166.0 519.4L1169.8 522.8Z" fill="url(#g222)"/><path d="M871.6 485.6L1168.5 521.7L1173.1 525.8Z" fill="url(#g223)"/><path d="M871.6 485.6L1172.2 525.0L1172.9 528.1Z" fill="url(#g224)"/><path d="M871.6 485.6L1174.8 527.4L1167.6 530.4Z" fill="url(#g225)"/><path d="M871.6 485.6L1169.5 529.6L1162.3 532.6Z" fill="url(#g226)"/><path d="M871.6 485.6L1164.2 531.8L1157.0 534.9Z" fill="url(#g227)"/><path d="M871.6 485.6L1158.9 534.1L1151.7 537.1Z" fill="url(#g228)"/><path d="M871.6 485.6L1153.6 536.3L1146.4 539.4Z" fill="url(#g229)"/><path d="M871.6 485.6L1148.3 538.6L1141.1 541.6Z" fill="url(#g230)"/><path d="M871.6 485.6L1143.0 540.8L1135.8 543.9Z" fill="url(#g231)"/><path d="M871.6 485.6L1137.7 543.1L1130.5 546.1Z" fill="url(#g232)"/><path d="M871.6 485.6L1132.4 545.3L1125.2 548.3Z" fill="url(#g233)"/><path d="M871.6 485.6L1127.1 547.6L1119.9 550.6Z" fill="url(#g234)"/><path d="M871.6 485.6L1121.8 549.8L1114.6 552.8Z" fill="url(#g235)"/><path d="M871.6 485.6L1116.5 552.1L1109.3 555.1Z" fill="url(#g236)"/><path d="M871.6 485.6L1111.2 554.3L1104.0 557.3Z" fill="url(#g237)"/><path d="M871.6 485.6L1105.9 556.5L1098.7 559.6Z" fill="url(#g238)"/><path d="M871.6 485.6L1100.6 558.8L1093.4 561.8Z" fill="url(#g239)"/><path d="M871.6 485.6L1095.3 561.0L1088.1 564.1Z" fill="url(#g240)"/><path d="M871.6 485.6L1090.0 563.3L1082.8 566.3Z" fill="url(#g241)"/><path d="M871.6 485.6L1084.7 565.5L1077.5 568.6Z" fill="url(#g242)"/><path d="M871.6 485.6L1079.4 567.8L1072.2 570.8Z" fill="url(#g243)"/><path d="M871.6 485.6L1074.1 570.0L1066.9 573.0Z" fill="url(#g244)"/><path d="M871.6 485.6L1068.8 572.3L1061.6 575.3Z" fill="url(#g245)"/><path d="M871.6 485.6L1063.5 574.5L1056.3 577.5Z" fill="url(#g246)"/><path d="M871.6 485.6L1058.2 576.8L1051.0 579.8Z" fill="url(#g247)"/><path d="M871.6 485.6L1052.9 579.0L1045.7 582.0Z" fill="url(#g248)"/><path d="M871.6 485.6L1047.6 581.2L1040.4 584.3Z" fill="url(#g249)"/><path d="M871.6 485.6L1042.3 583.5L1035.1 586.5Z" fill="url(#g250)"/><path d="M871.6 485.6L1037.0 585.7L1029.8 588.8Z" fill="url(#g251)"/><path d="M871.6 485.6L1031.7 588.0L1024.5 591.0Z" fill="url(#g252)"/><path d="M871.6 485.6L1026.4 590.2L1019.2 593.3Z" fill="url(#g253)"/><path d="M871.6 485.6L1021.1 592.5L1013.9 595.5Z" fill="url(#g254)"/><path d="M871.6 485.6L1015.8 594.7L1008.6 597.7Z" fill="url(#g255)"/><path d="M871.6 485.6L1010.5 597.0L1003.3 600.0Z" fill="url(#g256)"/><path d="M871.6 485.6L1005.2 599.2L998.0 602.2Z" fill="url(#g257)"/><path d="M871.6 485.6L999.9 601.4L992.7 604.5Z" fill="url(#g258)"/><path d="M871.6 485.6L994.6 603.7L987.4 606.7Z" fill="url(#g259)"/><path d="M871.6 485.6L989.3 605.9L982.1 609.0Z" fill="url(#g260)"/><path d="M871.6 485.6L984.0 608.2L976.8 611.2Z" fill="url(#g261)"/><path d="M871.6 485.6L978.7 610.4L971.5 613.5Z" fill="url(#g262)"/><path d="M871.6 485.6L973.4 612.7L966.2 615.7Z" fill="url(#g263)"/><path d="M871.6 485.6L968.1 614.9L960.9 617.9Z" fill="url(#g264)"/><path d="M871.6 485.6L962.8 617.2L955.6 620.2Z" fill="url(#g265)"/><path d="M871.6 485.6L957.5 619.4L950.3 622.4Z" fill="url(#g266)"/><path d="M871.6 485.6L952.2 621.7L945.0 624.7Z" fill="url(#g267)"/><path d="M871.6 485.6L946.9 623.9L939.7 626.9Z" fill="url(#g268)"/><path d="M871.6 485.6L941.6 626.1L934.4 629.2Z" fill="url(#g269)"/><path d="M871.6 485.6L936.3 628.4L929.1 631.4Z" fill="url(#g270)"/><path d="M871.6 485.6L931.0 630.6L923.8 633.7Z" fill="url(#g271)"/><path d="M871.6 485.6L925.7 632.9L918.5 635.9Z" fill="url(#g272)"/><path d="M871.6 485.6L920.4 635.1L913.2 638.2Z" fill="url(#g273)"/><path d="M871.6 485.6L915.1 637.4L907.9 640.4Z" fill="url(#g274)"/><path d="M871.6 485.6L909.8 639.6L902.6 642.6Z" fill="url(#g275)"/><path d="M871.6 485.6L904.5 641.9L897.3 644.9Z" fill="url(#g276)"/><path d="M871.6 485.6L899.2 644.1L892.0 647.1Z" fill="url(#g277)"/><path d="M871.6 485.6L893.9 646.3L886.7 649.4Z" fill="url(#g278)"/><path d="M871.6 485.6L888.6 648.6L881.4 651.6Z" fill="url(#g279)"/><path d="M871.6 485.6L883.3 650.8L876.1 653.9Z" fill="url(#g280)"/><path d="M871.6 485.6L878.0 653.1L870.8 656.1Z" fill="url(#g281)"/><path d="M871.6 485.6L872.7 655.3L865.5 658.4Z" fill="url(#g282)"/><path d="M871.6 485.6L867.4 657.6L860.2 660.6Z" fill="url(#g283)"/><path d="M871.6 485.6L862.1 659.8L854.9 662.9Z" fill="url(#g284)"/><path d="M871.6 485.6L856.8 662.1L849.6 665.1Z" fill="url(#g285)"/><path d="M871.6 485.6L851.5 664.3L844.3 667.3Z" fill="url(#g286)"/><path d="M871.6 485.6L846.2 666.6L839.0 669.6Z" fill="url(#g287)"/><path d="M871.6 485.6L840.9 668.8L833.7 671.8Z" fill="url(#g288)"/><path d="M871.6 485.6L835.6 671.0L828.4 674.1Z" fill="url(#g289)"/><path d="M871.6 485.6L830.3 673.3L823.1 676.3Z" fill="url(#g290)"/><path d="M871.6 485.6L825.0 675.5L817.8 678.6Z" fill="url(#g291)"/><path d="M871.6 485.6L819.7 677.8L812.5 680.8Z" fill="url(#g292)"/><path d="M871.6 485.6L814.4 680.0L807.2 683.1Z" fill="url(#g293)"/><path d="M871.6 485.6L809.1 682.3L801.9 685.3Z" fill="url(#g294)"/><path d="M871.6 485.6L803.8 684.5L796.6 687.5Z" fill="url(#g295)"/><path d="M871.6 485.6L798.5 686.8L791.3 689.8Z" fill="url(#g296)"/><path d="M871.6 485.6L793.2 689.0L786.0 692.0Z" fill="url(#g297)"/><path d="M871.6 485.6L787.9 691.3L780.7 694.3Z" fill="url(#g298)"/><path d="M871.6 485.6L782.6 693.5L775.4 696.5Z" fill="url(#g299)"/><path d="M871.6 485.6L777.3 695.7L770.2 697.2Z" fill="url(#g300)"/>
</g></g>
<path fill="#000" fill-rule="evenodd" d="M600 100H1300V760H600ZM775.8 689.8C775.6 689.8 774.9 690.0 774.4 689.9C774.0 689.9 773.8 689.7 773.2 689.3C772.6 688.9 771.5 688.1 770.8 687.5C770.2 687.0 769.8 686.6 769.1 686.1C768.4 685.6 767.7 685.0 766.8 684.3C765.9 683.6 764.9 682.7 763.7 681.8C762.6 680.9 761.3 679.9 759.9 678.7C758.4 677.4 756.8 676.1 755.0 674.2C753.2 672.4 751.4 670.8 749.1 667.8C746.9 664.9 744.3 661.5 741.3 656.5C738.3 651.6 735.0 646.1 731.3 638.3C727.5 630.4 723.3 621.3 718.6 609.3C713.9 597.4 708.3 583.5 703.0 566.5C697.7 549.4 692.1 529.3 686.9 507.0C681.7 484.8 676.1 458.4 671.8 432.8C667.5 407.3 663.5 379.0 661.2 353.6C658.9 328.2 657.6 302.5 658.2 280.3C658.9 258.0 661.1 236.6 665.1 220.1C669.2 203.6 675.5 190.0 682.4 181.2C689.4 172.4 698.2 168.9 706.9 167.4C715.5 165.9 725.2 169.3 734.4 172.2C743.7 175.1 753.3 180.3 762.4 185.0C771.5 189.7 780.2 194.9 788.8 200.3C797.4 205.7 805.8 211.5 814.2 217.5C822.5 223.6 830.9 229.9 839.2 236.4C847.5 243.0 855.7 249.7 863.9 256.6C872.1 263.5 880.3 270.5 888.6 277.7C896.8 284.8 905.1 292.1 913.3 299.3C921.5 306.6 929.7 314.0 937.9 321.3C946.1 328.7 954.3 336.1 962.3 343.3C970.4 350.6 978.4 357.9 986.3 365.1C994.2 372.2 1002.0 379.4 1009.6 386.3C1017.2 393.2 1024.7 400.0 1031.9 406.6C1039.1 413.1 1046.2 419.5 1052.9 425.6C1059.6 431.7 1066.1 437.6 1072.0 443.1C1078.0 448.5 1083.5 453.4 1088.7 458.2C1093.9 462.9 1098.9 467.4 1103.3 471.5C1107.8 475.5 1111.8 479.1 1115.5 482.5C1119.2 485.8 1122.4 488.8 1125.4 491.5C1128.3 494.2 1130.9 496.5 1133.2 498.6C1135.6 500.8 1137.6 502.6 1139.5 504.3C1141.4 506.0 1143.0 507.5 1144.6 508.9C1146.1 510.3 1147.5 511.6 1148.8 512.8C1150.1 513.9 1151.2 515.0 1152.2 515.9C1153.3 516.9 1154.2 517.7 1155.0 518.4C1155.8 519.1 1156.5 519.7 1157.1 520.3C1157.7 520.8 1158.2 521.3 1158.7 521.7C1159.1 522.1 1159.4 522.4 1159.8 522.8C1160.3 523.2 1160.8 523.7 1161.2 524.0C1161.6 524.4 1161.9 524.6 1162.2 524.9C1162.5 525.2 1162.9 525.6 1163.1 525.8Z"/>
<circle cx="878" cy="487" r="34" fill="url(#glow)"/>
<path d="M1099.8 488.0L865.6 322.7L762.3 653.3Z" fill="none" stroke="#000" stroke-width="2.100" stroke-linejoin="round"/>
<rect x="870.4" y="485.3" width="8" height="8" fill="#fff" stroke="#000" stroke-width="1.25"/>
<rect x="926.7" y="485.1" width="8" height="8" fill="#fff" stroke="#000" stroke-width="1.25"/>
<rect x="983.1" y="485.0" width="8" height="8" fill="#fff" stroke="#000" stroke-width="1.25"/>
<rect x="1039.4" y="484.8" width="8" height="8" fill="#fff" stroke="#000" stroke-width="1.25"/>
<rect x="1095.8" y="484.7" width="8" height="8" fill="#fff" stroke="#000" stroke-width="1.25"/>
<rect x="868.2" y="443.8" width="8" height="8" fill="#fff" stroke="#000" stroke-width="1.25"/>
<rect x="866.0" y="402.3" width="8" height="8" fill="#fff" stroke="#000" stroke-width="1.25"/>
<rect x="863.8" y="360.9" width="8" height="8" fill="#fff" stroke="#000" stroke-width="1.25"/>
<rect x="861.6" y="319.4" width="8" height="8" fill="#fff" stroke="#000" stroke-width="1.25"/>
<rect x="842.4" y="526.5" width="8" height="8" fill="#fff" stroke="#000" stroke-width="1.25"/>
<rect x="814.3" y="567.6" width="8" height="8" fill="#fff" stroke="#000" stroke-width="1.25"/>
<rect x="786.3" y="608.8" width="8" height="8" fill="#fff" stroke="#000" stroke-width="1.25"/>
<rect x="758.3" y="650.0" width="8" height="8" fill="#fff" stroke="#000" stroke-width="1.25"/>
<rect x="888.7" y="458.3" width="8" height="8" fill="#fff" stroke="#000" stroke-width="1.25"/>
<rect x="907.1" y="431.3" width="8" height="8" fill="#fff" stroke="#000" stroke-width="1.25"/>
<rect x="925.4" y="404.3" width="8" height="8" fill="#fff" stroke="#000" stroke-width="1.25"/>
<rect x="943.8" y="377.4" width="8" height="8" fill="#fff" stroke="#000" stroke-width="1.25"/>
<rect x="855.2" y="485.3" width="8" height="8" fill="#fff" stroke="#000" stroke-width="1.25"/>
<rect x="840.0" y="485.4" width="8" height="8" fill="#fff" stroke="#000" stroke-width="1.25"/>
<rect x="824.9" y="485.4" width="8" height="8" fill="#fff" stroke="#000" stroke-width="1.25"/>
<rect x="809.7" y="485.5" width="8" height="8" fill="#fff" stroke="#000" stroke-width="1.25"/>
<rect x="871.8" y="512.0" width="8" height="8" fill="#fff" stroke="#000" stroke-width="1.25"/>
<rect x="873.2" y="538.8" width="8" height="8" fill="#fff" stroke="#000" stroke-width="1.25"/>
<rect x="874.6" y="565.5" width="8" height="8" fill="#fff" stroke="#000" stroke-width="1.25"/>
<rect x="876.0" y="592.3" width="8" height="8" fill="#fff" stroke="#000" stroke-width="1.25"/>
<circle cx="874.5" cy="488.9" r="4" fill="#e6e6e6" stroke="#000" stroke-width="1.25"/>
<circle cx="872.7" cy="448.1" r="4" fill="#a9d8a9" stroke="#000" stroke-width="1.25"/>
<circle cx="872.8" cy="406.6" r="4" fill="#8fdc8f" stroke="#000" stroke-width="1.25"/>
<circle cx="873.1" cy="363.0" r="4" fill="#63dd63" stroke="#000" stroke-width="1.25"/>
<circle cx="873.4" cy="326.1" r="4" fill="#1fd61f" stroke="#000" stroke-width="1.25"/>
<circle cx="891.7" cy="462.8" r="4" fill="#dcdcb4" stroke="#000" stroke-width="1.25"/>
<circle cx="910.9" cy="432.3" r="4" fill="#dede94" stroke="#000" stroke-width="1.25"/>
<circle cx="929.4" cy="404.1" r="4" fill="#dfdf6a" stroke="#000" stroke-width="1.25"/>
<circle cx="945.8" cy="378.1" r="4" fill="#e3e31a" stroke="#000" stroke-width="1.25"/>
<circle cx="927.7" cy="489.4" r="4" fill="#b07478" stroke="#000" stroke-width="1.25"/>
<circle cx="982.8" cy="485.8" r="4" fill="#c8606a" stroke="#000" stroke-width="1.25"/>
<circle cx="1038.2" cy="482.7" r="4" fill="#d84a52" stroke="#000" stroke-width="1.25"/>
<circle cx="1089.8" cy="479.9" r="4" fill="#e01a22" stroke="#000" stroke-width="1.25"/>
<circle cx="861.3" cy="490.4" r="4" fill="#bcdcdc" stroke="#000" stroke-width="1.25"/>
<circle cx="846.3" cy="489.8" r="4" fill="#a4dede" stroke="#000" stroke-width="1.25"/>
<circle cx="832.6" cy="489.4" r="4" fill="#84e0e0" stroke="#000" stroke-width="1.25"/>
<circle cx="819.8" cy="490.9" r="4" fill="#1ee0e0" stroke="#000" stroke-width="1.25"/>
<circle cx="873.4" cy="516.4" r="4" fill="#a08a9c" stroke="#000" stroke-width="1.25"/>
<circle cx="872.7" cy="545.5" r="4" fill="#bc8cb8" stroke="#000" stroke-width="1.25"/>
<circle cx="872.9" cy="571.6" r="4" fill="#d470cc" stroke="#000" stroke-width="1.25"/>
<circle cx="874.6" cy="594.6" r="4" fill="#ee1edc" stroke="#000" stroke-width="1.25"/>
<circle cx="850.5" cy="526.0" r="4" fill="#55556a" stroke="#000" stroke-width="1.25"/>
<circle cx="817.4" cy="576.3" r="4" fill="#5a5a84" stroke="#000" stroke-width="1.25"/>
<circle cx="791.8" cy="614.9" r="4" fill="#55559a" stroke="#000" stroke-width="1.25"/>
<circle cx="767.9" cy="651.0" r="4" fill="#1414e0" stroke="#000" stroke-width="1.25"/>
</g>
<circle cx="1189.500" cy="670" r="15" fill="#3c7cc4"/><text x="1189.500" y="681.300" text-anchor="middle" font-family="Liberation Sans,sans-serif" font-size="31" fill="#fff" stroke="#fff" stroke-width=".7">?</text>
<g stroke="#fff" stroke-width="1" shape-rendering="crispEdges">
<path d="M649 690.5H659"/>
<path d="M649 629.5H659"/>
<path d="M649 568.5H659"/>
<path d="M649 506.5H659"/>
<path d="M649 445.5H659"/>
<path d="M649 384.5H659"/>
<path d="M649 323.5H659"/>
<path d="M649 261.5H659"/>
<path d="M649 200.5H659"/>
<path d="M649 139.5H659"/>
<path d="M658.5 691V701"/>
<path d="M727.5 691V701"/>
<path d="M796.5 691V701"/>
<path d="M865.5 691V701"/>
<path d="M934.5 691V701"/>
<path d="M1003.5 691V701"/>
<path d="M1072.5 691V701"/>
<path d="M1141.5 691V701"/>
<path d="M1209.5 691V701"/>
</g><g font-family="Liberation Sans,sans-serif" font-size="11.200" fill="#fff" stroke="#fff" stroke-width=".45">
<text x="647" y="694" text-anchor="end">0</text>
<text x="647" y="633" text-anchor="end">0.1</text>
<text x="647" y="572" text-anchor="end">0.2</text>
<text x="647" y="510" text-anchor="end">0.3</text>
<text x="647" y="449" text-anchor="end">0.4</text>
<text x="647" y="388" text-anchor="end">0.5</text>
<text x="647" y="327" text-anchor="end">0.6</text>
<text x="647" y="265" text-anchor="end">0.7</text>
<text x="647" y="204" text-anchor="end">0.8</text>
<text x="647" y="143" text-anchor="end">0.9</text>
<text x="658.6" y="713" text-anchor="middle">0</text>
<text x="727.5" y="713" text-anchor="middle">0.1</text>
<text x="796.4" y="713" text-anchor="middle">0.2</text>
<text x="865.2" y="713" text-anchor="middle">0.3</text>
<text x="934.1" y="713" text-anchor="middle">0.4</text>
<text x="1003.0" y="713" text-anchor="middle">0.5</text>
<text x="1071.9" y="713" text-anchor="middle">0.6</text>
<text x="1140.7" y="713" text-anchor="middle">0.7</text>
<text x="1209.6" y="713" text-anchor="middle">0.8</text>
</g><text x="919" y="132" text-anchor="middle" font-family="Liberation Sans,sans-serif" font-size="11.500" font-weight="bold" fill="#000">Chromaticity 1931</text></svg>
<div class="a" style="left:0;top:745px;width:470px;height:1px;background:#9a9a9a"></div>
<div class="a" style="left:475px;top:745px;width:891px;height:1px;background:#8c8c8c"></div>
<div class="a" style="left:475px;top:743px;width:887px;height:1px;background:#8c8c8c"></div>
<div class="a" style="left:0;top:746px;width:1366px;height:20px;background:linear-gradient(#f6f6f6,#f1f1f1)"></div>
<div class="a" style="left:0;top:766px;width:1366px;height:1px;background:#3c5068"></div>
<div class="a" style="left:0;top:767px;width:1366px;height:1px;background:#b8d0ea"></div>
<div class="a" style="left:155px;top:749px;width:1px;height:16px;background:#9a9a9a"></div>
<div class="a" style="left:1231px;top:749px;width:1px;height:16px;background:#9a9a9a"></div>
<div class="t" style="left:9px;top:750px;font-size:12px;letter-spacing:-.5px">Ready</div>
<div class="t" style="left:1279px;top:750px;font-size:12px;letter-spacing:-.4px">Version: 3.0.4</div>

</body></html>
